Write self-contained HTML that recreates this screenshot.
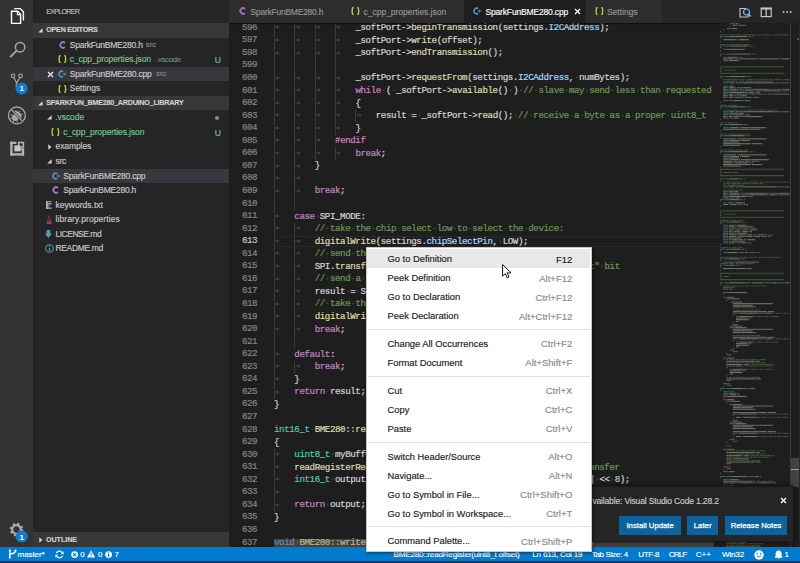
<!DOCTYPE html><html><head><meta charset="utf-8"><style>
*{margin:0;padding:0;box-sizing:border-box}
html,body{width:800px;height:563px;overflow:hidden;background:#1e1e1e}
body{position:relative;font-family:"Liberation Sans",sans-serif}
.a{position:absolute}
.mono{font-family:"Liberation Mono",monospace;font-size:9.2px;letter-spacing:-0.433px;white-space:pre;-webkit-text-stroke:0.2px currentColor}
.mono span{-webkit-text-stroke:0.2px currentColor}
.ui{font-family:"Liberation Sans",sans-serif;white-space:pre;-webkit-text-stroke:0.15px currentColor}
.ui span{-webkit-text-stroke:0.15px currentColor}
</style></head><body><div class="a" style="left:0;top:0;width:33.1px;height:546.8px;background:#333333"></div><div class="a" style="left:33.1px;top:0;width:196.1px;height:546.8px;background:#252526"></div><svg class="a" style="left:0;top:0" width="33" height="170" viewBox="0 0 33 170">
<g fill="none" stroke="#ffffff" stroke-width="1.4">
<path d="M14.2 8.6 H20.3 L23.4 11.7 V20.6"/>
<path d="M11.5 11.3 H17.6 L20.6 14.3 V23.4 H11.5 Z"/>
<path d="M17.4 11.6 V14.6 H20.4" stroke-width="1.1"/>
</g>
<g fill="none" stroke="#a9a9a9" stroke-width="1.5">
<circle cx="20.1" cy="47.2" r="4.7"/>
<path d="M16.6 50.7 L10.2 57.1" stroke-width="1.8"/>
</g>
<g fill="none" stroke="#a9a9a9" stroke-width="1.1">
<circle cx="13.1" cy="75.8" r="1.8"/>
<circle cx="20.6" cy="75.8" r="1.8"/>
<path d="M13.8 77.5 L16.3 82 L16.3 89 M19.9 77.5 L16.3 84"/>
</g>
<circle cx="21.7" cy="88.5" r="5.9" fill="#0e7ad3"/>
<text x="21.7" y="91.4" font-family="Liberation Sans" font-weight="bold" font-size="8" fill="#fff" text-anchor="middle">1</text>
<g fill="none" stroke="#a9a9a9" stroke-width="1.3">
<circle cx="16.9" cy="115.4" r="8.4"/>
</g>
<g fill="#a9a9a9">
<path d="M13 111.8 Q17 109.8 20.3 113.2 Q22.6 116.6 21 120 Z"/>
<ellipse cx="15.3" cy="117.4" rx="3.3" ry="3.5"/>
</g>
<g fill="none" stroke="#a9a9a9" stroke-width="0.9">
<path d="M12.6 115.5 L10.6 114.8 M12.4 118 L10.3 118.6 M14 120.3 L13.2 122.2 M17 120.6 L17.4 122.6 M16.3 112.2 L15.5 110.2 M19 112.6 L20 110.8 M21.2 114.8 L23 114.2"/>
</g>
<path d="M11.3 109.5 L22.5 121.3" stroke="#333333" stroke-width="2.4"/>
<path d="M11.3 109.5 L22.5 121.3" stroke="#a9a9a9" stroke-width="1.2"/>
<g fill="#b0b0b0">
<rect x="10.2" y="141.7" width="2.4" height="13.9"/>
<rect x="10.2" y="153.2" width="13.9" height="2.4"/>
<rect x="10.2" y="141.7" width="6.2" height="2.3"/>
<rect x="21.7" y="148.4" width="2.4" height="7.2"/>
<rect x="17.4" y="148.4" width="6.7" height="1.8"/>
</g>
<rect x="18.7" y="142.5" width="4.7" height="4.5" fill="none" stroke="#b0b0b0" stroke-width="1.6"/>
<rect x="14.4" y="145.4" width="6" height="6" fill="#c8c8c8"/>
</svg><svg class="a" style="left:0;top:518" width="33" height="29" viewBox="0 0 33 29">
<g transform="translate(16.5 11.5)">
<circle r="5.6" fill="none" stroke="#a9a9a9" stroke-width="2.4" stroke-dasharray="2.2 2.2"/>
<circle r="4.3" fill="none" stroke="#a9a9a9" stroke-width="2.2"/>
</g>
<circle cx="21.8" cy="18.6" r="6" fill="#0e7ad3"/>
<text x="21.8" y="21.5" font-family="Liberation Sans" font-weight="bold" font-size="8" fill="#fff" text-anchor="middle">1</text>
</svg><div class="a ui" style="left:46.2px;top:4.60px;height:14px;line-height:14px;font-size:7.2px;color:#bbbbbb;letter-spacing:-0.777px;">EXPLORER</div><div class="a" style="left:33.1px;top:23.1px;width:196.1px;height:14.54px;background:#383838"></div><svg class="a" style="left:38.2px;top:28.17px" width="5" height="5" viewBox="0 0 5 5"><path d="M4.6 0.2 V4.6 H0.2 Z" fill="#d8d8d8"/></svg><div class="a ui" style="left:46.2px;top:23.17px;height:14px;line-height:14px;font-size:7.2px;font-weight:bold;color:#d0d0d0;letter-spacing:-0.240px;">OPEN EDITORS</div><div class="a" style="left:33.1px;top:66.72px;width:196.1px;height:14.54px;background:#37373d"></div><svg class="a" style="left:59.00px;top:40.91px" width="7" height="8" viewBox="0 0 7 8"><path d="M5.9 1.9 A2.75 2.75 0 1 0 5.9 6.1" fill="none" stroke="#a074c4" stroke-width="1.9"/></svg><div class="a ui" style="left:69.8px;top:37.71px;height:14px;line-height:14px;font-size:8.5px;color:#cccccc;letter-spacing:-0.228px;">SparkFunBME280.h</div><div class="a ui" style="left:145.8px;top:38.11px;height:14px;line-height:14px;font-size:7.6px;color:#8f8f8f;letter-spacing:0.123px;">src</div><svg class="a" style="left:57.60px;top:55.45px" width="9" height="8" viewBox="0 0 9 8"><g fill="none" stroke="#cbcb41" stroke-width="1.3"><path d="M2.6 0.5 Q1.3 0.5 1.3 1.8 V3 Q1.3 4 0.4 4 Q1.3 4 1.3 5 V6.2 Q1.3 7.5 2.6 7.5"/><path d="M6.2 0.5 Q7.5 0.5 7.5 1.8 V3 Q7.5 4 8.4 4 Q7.5 4 7.5 5 V6.2 Q7.5 7.5 6.2 7.5"/></g></svg><div class="a ui" style="left:69.8px;top:52.25px;height:14px;line-height:14px;font-size:8.5px;color:#73c991;letter-spacing:-0.098px;">c_cpp_properties.json</div><div class="a ui" style="left:156.0px;top:52.65px;height:14px;line-height:14px;font-size:7.6px;color:#5e9a77;letter-spacing:-0.213px;">.vscode</div><div class="a ui" style="left:214.8px;top:53.15px;height:14px;line-height:14px;font-size:8.6px;color:#73c991;">U</div><svg class="a" style="left:47px;top:70.79px" width="7" height="7" viewBox="0 0 7 7"><path d="M1 1 L6 6 M6 1 L1 6" stroke="#e8e8e8" stroke-width="1.3"/></svg><svg class="a" style="left:58.2px;top:69.99px" width="9" height="8" viewBox="0 0 9 8"><path d="M5.2 1.6 A2.8 2.8 0 1 0 5.2 6.4" fill="none" stroke="#519aba" stroke-width="1.5"/><path d="M4.6 4 H8.6 M6.6 2.6 V5.4" stroke="#519aba" stroke-width="0.9"/></svg><div class="a ui" style="left:69.8px;top:66.79px;height:14px;line-height:14px;font-size:8.5px;color:#cccccc;letter-spacing:-0.212px;">SparkFunBME280.cpp</div><div class="a ui" style="left:156.0px;top:67.19px;height:14px;line-height:14px;font-size:7.6px;color:#8f8f8f;letter-spacing:0.123px;">src</div><svg class="a" style="left:57.60px;top:84.53px" width="9" height="8" viewBox="0 0 9 8"><g fill="none" stroke="#cbcb41" stroke-width="1.3"><path d="M2.6 0.5 Q1.3 0.5 1.3 1.8 V3 Q1.3 4 0.4 4 Q1.3 4 1.3 5 V6.2 Q1.3 7.5 2.6 7.5"/><path d="M6.2 0.5 Q7.5 0.5 7.5 1.8 V3 Q7.5 4 8.4 4 Q7.5 4 7.5 5 V6.2 Q7.5 7.5 6.2 7.5"/></g></svg><div class="a ui" style="left:69.8px;top:81.33px;height:14px;line-height:14px;font-size:8.5px;color:#cccccc;letter-spacing:-0.052px;">Settings</div><div class="a" style="left:33.1px;top:95.80px;width:196.1px;height:14.54px;background:#383838"></div><svg class="a" style="left:38.2px;top:100.87px" width="5" height="5" viewBox="0 0 5 5"><path d="M4.6 0.2 V4.6 H0.2 Z" fill="#d8d8d8"/></svg><div class="a ui" style="left:46.2px;top:95.87px;height:14px;line-height:14px;font-size:7.2px;font-weight:bold;color:#d0d0d0;letter-spacing:-0.236px;">SPARKFUN_BME280_ARDUINO_LIBRARY</div><div class="a" style="left:33.1px;top:168.50px;width:196.1px;height:14.54px;background:#37373d"></div><svg class="a" style="left:46.8px;top:115.41px" width="5" height="5" viewBox="0 0 5 5"><path d="M4.6 0.2 V4.6 H0.2 Z" fill="#d8d8d8"/></svg><div class="a ui" style="left:55.2px;top:110.41px;height:14px;line-height:14px;font-size:8.5px;color:#73c991;letter-spacing:-0.056px;">.vscode</div><div class="a" style="left:214.8px;top:115.61px;width:4px;height:4px;border-radius:50%;background:#73c991;opacity:0.75"></div><svg class="a" style="left:51.00px;top:128.15px" width="9" height="8" viewBox="0 0 9 8"><g fill="none" stroke="#cbcb41" stroke-width="1.3"><path d="M2.6 0.5 Q1.3 0.5 1.3 1.8 V3 Q1.3 4 0.4 4 Q1.3 4 1.3 5 V6.2 Q1.3 7.5 2.6 7.5"/><path d="M6.2 0.5 Q7.5 0.5 7.5 1.8 V3 Q7.5 4 8.4 4 Q7.5 4 7.5 5 V6.2 Q7.5 7.5 6.2 7.5"/></g></svg><div class="a ui" style="left:63.2px;top:124.95px;height:14px;line-height:14px;font-size:8.5px;color:#73c991;letter-spacing:-0.098px;">c_cpp_properties.json</div><div class="a ui" style="left:214.8px;top:125.85px;height:14px;line-height:14px;font-size:8.6px;color:#73c991;">U</div><svg class="a" style="left:47.6px;top:144.09px" width="4" height="6" viewBox="0 0 4 6"><path d="M0.3 0.2 L3.4 3 L0.3 5.8 Z" fill="#d8d8d8"/></svg><div class="a ui" style="left:55.5px;top:139.49px;height:14px;line-height:14px;font-size:8.5px;color:#cccccc;letter-spacing:-0.085px;">examples</div><svg class="a" style="left:46.8px;top:159.03px" width="5" height="5" viewBox="0 0 5 5"><path d="M4.6 0.2 V4.6 H0.2 Z" fill="#d8d8d8"/></svg><div class="a ui" style="left:55.5px;top:154.03px;height:14px;line-height:14px;font-size:8.5px;color:#cccccc;letter-spacing:-0.244px;">src</div><svg class="a" style="left:51.6px;top:171.76999999999998px" width="9" height="8" viewBox="0 0 9 8"><path d="M5.2 1.6 A2.8 2.8 0 1 0 5.2 6.4" fill="none" stroke="#519aba" stroke-width="1.5"/><path d="M4.6 4 H8.6 M6.6 2.6 V5.4" stroke="#519aba" stroke-width="0.9"/></svg><div class="a ui" style="left:63.3px;top:168.57px;height:14px;line-height:14px;font-size:8.5px;color:#cccccc;letter-spacing:-0.196px;">SparkFunBME280.cpp</div><svg class="a" style="left:52.20px;top:186.31px" width="7" height="8" viewBox="0 0 7 8"><path d="M5.9 1.9 A2.75 2.75 0 1 0 5.9 6.1" fill="none" stroke="#a074c4" stroke-width="1.9"/></svg><div class="a ui" style="left:63.3px;top:183.11px;height:14px;line-height:14px;font-size:8.5px;color:#cccccc;letter-spacing:-0.240px;">SparkFunBME280.h</div><svg class="a" style="left:45.5px;top:200.85px" width="7" height="8" viewBox="0 0 7 8"><path d="M0.5 0.8 H5.5 M0.5 2.9 H5.5 M0.5 5 H3.5 M0.5 7.1 H5.5" stroke="#b8b8b8" stroke-width="1.1"/><rect x="0" y="0" width="1.6" height="8" fill="#b8b8b8"/></svg><div class="a ui" style="left:55.5px;top:197.65px;height:14px;line-height:14px;font-size:8.5px;color:#cccccc;letter-spacing:0.014px;">keywords.txt</div><svg class="a" style="left:45.5px;top:214.89px" width="7" height="9" viewBox="0 0 7 9"><path d="M3 0.5 Q1.8 2 3.4 3.2 Q4.6 4.2 3.3 5" fill="none" stroke="#cc3e44" stroke-width="0.9"/><path d="M0.6 6 H5.8 M1 7.5 H5.5 M0.8 8.6 H5.8" stroke="#cc3e44" stroke-width="0.9"/></svg><div class="a ui" style="left:55.5px;top:212.19px;height:14px;line-height:14px;font-size:8.5px;color:#cccccc;letter-spacing:0.096px;">library.properties</div><svg class="a" style="left:45.3px;top:229.93px" width="7" height="8" viewBox="0 0 7 8"><path d="M1.6 0 H5.2 V3.6 H7 L3.4 8 L-0.2 3.6 H1.6 Z" fill="#519aba"/></svg><div class="a ui" style="left:55.5px;top:226.73px;height:14px;line-height:14px;font-size:8.5px;color:#cccccc;letter-spacing:-0.485px;">LICENSE.md</div><svg class="a" style="left:44.8px;top:243.97px" width="9" height="9" viewBox="0 0 9 9"><circle cx="4.5" cy="4.5" r="3.8" fill="none" stroke="#519aba" stroke-width="1.1"/><path d="M4.5 3.8 V7" stroke="#519aba" stroke-width="1.3"/><circle cx="4.5" cy="2.4" r="0.7" fill="#519aba"/></svg><div class="a ui" style="left:55.5px;top:241.27px;height:14px;line-height:14px;font-size:8.5px;color:#cccccc;letter-spacing:-0.349px;">README.md</div><div class="a" style="left:33.1px;top:532.3px;width:196.1px;height:14.54px;background:#383838"></div><svg class="a" style="left:38.8px;top:536.97px" width="4" height="6" viewBox="0 0 4 6"><path d="M0.3 0.2 L3.4 3 L0.3 5.8 Z" fill="#d8d8d8"/></svg><div class="a ui" style="left:46.0px;top:533.27px;height:14px;line-height:14px;font-size:7.2px;font-weight:bold;color:#d0d0d0;letter-spacing:-0.086px;">OUTLINE</div><div class="a" style="left:229.2px;top:0;width:570.8px;height:23.1px;background:#252526"></div><div class="a" style="left:229.2px;top:0;width:112.50px;height:22.5px;background:#2d2d2d"></div><svg class="a" style="left:239.20px;top:7.40px" width="7" height="8" viewBox="0 0 7 8"><path d="M5.9 1.9 A2.75 2.75 0 1 0 5.9 6.1" fill="none" stroke="#a074c4" stroke-width="1.9"/></svg><div class="a ui" style="left:250.5px;top:5.00px;height:14px;line-height:14px;font-size:8.5px;color:#969696;letter-spacing:-0.240px;">SparkFunBME280.h</div><div class="a" style="left:342.3px;top:0;width:121.30px;height:22.5px;background:#2d2d2d"></div><svg class="a" style="left:351.30px;top:7.40px" width="9" height="8" viewBox="0 0 9 8"><g fill="none" stroke="#cbcb41" stroke-width="1.3"><path d="M2.6 0.5 Q1.3 0.5 1.3 1.8 V3 Q1.3 4 0.4 4 Q1.3 4 1.3 5 V6.2 Q1.3 7.5 2.6 7.5"/><path d="M6.2 0.5 Q7.5 0.5 7.5 1.8 V3 Q7.5 4 8.4 4 Q7.5 4 7.5 5 V6.2 Q7.5 7.5 6.2 7.5"/></g></svg><div class="a ui" style="left:363.6px;top:5.00px;height:14px;line-height:14px;font-size:8.5px;color:#969696;letter-spacing:-0.032px;">c_cpp_properties.json</div><div class="a" style="left:464.2px;top:0;width:120.80px;height:23.1px;background:#1e1e1e"></div><svg class="a" style="left:472.8px;top:7.4px" width="9" height="8" viewBox="0 0 9 8"><path d="M5.2 1.6 A2.8 2.8 0 1 0 5.2 6.4" fill="none" stroke="#519aba" stroke-width="1.5"/><path d="M4.6 4 H8.6 M6.6 2.6 V5.4" stroke="#519aba" stroke-width="0.9"/></svg><div class="a ui" style="left:485.5px;top:5.00px;height:14px;line-height:14px;font-size:8.5px;color:#ffffff;letter-spacing:-0.168px;">SparkFunBME280.cpp</div><svg class="a" style="left:573.70px;top:8.40px" width="7" height="7" viewBox="0 0 7 7"><path d="M1 1 L6 6 M6 1 L1 6" stroke="#ffffff" stroke-width="1.2"/></svg><div class="a" style="left:585.6px;top:0;width:76.60px;height:22.5px;background:#2d2d2d"></div><svg class="a" style="left:594.60px;top:7.40px" width="9" height="8" viewBox="0 0 9 8"><g fill="none" stroke="#cbcb41" stroke-width="1.3"><path d="M2.6 0.5 Q1.3 0.5 1.3 1.8 V3 Q1.3 4 0.4 4 Q1.3 4 1.3 5 V6.2 Q1.3 7.5 2.6 7.5"/><path d="M6.2 0.5 Q7.5 0.5 7.5 1.8 V3 Q7.5 4 8.4 4 Q7.5 4 7.5 5 V6.2 Q7.5 7.5 6.2 7.5"/></g></svg><div class="a ui" style="left:606.9px;top:5.00px;height:14px;line-height:14px;font-size:8.5px;color:#969696;letter-spacing:0.036px;">Settings</div><svg class="a" style="left:735px;top:3" width="62" height="18" viewBox="0 0 62 18">
<g fill="none" stroke="#c5c5c5" stroke-width="1.1">
<path d="M5 5.5 H10.5 L13 8 V14 H5 Z" />
</g>
<circle cx="11.5" cy="9" r="3" fill="#252526" stroke="#75beff" stroke-width="1.2"/>
<path d="M13.6 11.2 L15.8 13.5" stroke="#75beff" stroke-width="1.5"/>
<g fill="none" stroke="#c5c5c5" stroke-width="1.2">
<rect x="26.2" y="5" width="10" height="8.6"/>
<path d="M31.2 5 V13.6"/>
</g>
<path d="M26.2 5 H36.2 V6.6 H26.2Z" fill="#c5c5c5"/>
<g fill="#c5c5c5"><circle cx="48.6" cy="9" r="0.95"/><circle cx="52.2" cy="9" r="0.95"/><circle cx="55.8" cy="9" r="0.95"/></g>
</svg><div class="a" style="left:229.2px;top:23.1px;width:570.8px;height:523.7px;overflow:hidden;background:#1e1e1e"><div class="a mono" style="left:0;top:-1.30px;width:28.00px;height:12.556px;line-height:12.556px;text-align:right;color:#858585">596</div><svg class="a" style="left:45.10px;top:2.38px" width="6" height="4" viewBox="0 0 6 4"><path d="M0.3 2 H4.6 M3 0.6 L4.8 2 L3 3.4" fill="none" stroke="#555555" stroke-width="0.75"/></svg><svg class="a" style="left:65.45px;top:2.38px" width="6" height="4" viewBox="0 0 6 4"><path d="M0.3 2 H4.6 M3 0.6 L4.8 2 L3 3.4" fill="none" stroke="#555555" stroke-width="0.75"/></svg><svg class="a" style="left:85.80px;top:2.38px" width="6" height="4" viewBox="0 0 6 4"><path d="M0.3 2 H4.6 M3 0.6 L4.8 2 L3 3.4" fill="none" stroke="#555555" stroke-width="0.75"/></svg><svg class="a" style="left:106.16px;top:2.38px" width="6" height="4" viewBox="0 0 6 4"><path d="M0.3 2 H4.6 M3 0.6 L4.8 2 L3 3.4" fill="none" stroke="#555555" stroke-width="0.75"/></svg><div class="a mono" style="left:126.21px;top:-0.90px;line-height:12.556px"><span style="color:#d4d4d4">_softPort-&gt;</span><span style="color:#dcdcaa">beginTransmission</span><span style="color:#d4d4d4">(settings.</span><span style="color:#9cdcfe">I2CAddress</span><span style="color:#d4d4d4">);</span></div><div class="a mono" style="left:0;top:11.26px;width:28.00px;height:12.556px;line-height:12.556px;text-align:right;color:#858585">597</div><svg class="a" style="left:45.10px;top:14.93px" width="6" height="4" viewBox="0 0 6 4"><path d="M0.3 2 H4.6 M3 0.6 L4.8 2 L3 3.4" fill="none" stroke="#555555" stroke-width="0.75"/></svg><svg class="a" style="left:65.45px;top:14.93px" width="6" height="4" viewBox="0 0 6 4"><path d="M0.3 2 H4.6 M3 0.6 L4.8 2 L3 3.4" fill="none" stroke="#555555" stroke-width="0.75"/></svg><svg class="a" style="left:85.80px;top:14.93px" width="6" height="4" viewBox="0 0 6 4"><path d="M0.3 2 H4.6 M3 0.6 L4.8 2 L3 3.4" fill="none" stroke="#555555" stroke-width="0.75"/></svg><svg class="a" style="left:106.16px;top:14.93px" width="6" height="4" viewBox="0 0 6 4"><path d="M0.3 2 H4.6 M3 0.6 L4.8 2 L3 3.4" fill="none" stroke="#555555" stroke-width="0.75"/></svg><div class="a mono" style="left:126.21px;top:11.66px;line-height:12.556px"><span style="color:#d4d4d4">_softPort-&gt;</span><span style="color:#dcdcaa">write</span><span style="color:#d4d4d4">(offset);</span></div><div class="a mono" style="left:0;top:23.81px;width:28.00px;height:12.556px;line-height:12.556px;text-align:right;color:#858585">598</div><svg class="a" style="left:45.10px;top:27.49px" width="6" height="4" viewBox="0 0 6 4"><path d="M0.3 2 H4.6 M3 0.6 L4.8 2 L3 3.4" fill="none" stroke="#555555" stroke-width="0.75"/></svg><svg class="a" style="left:65.45px;top:27.49px" width="6" height="4" viewBox="0 0 6 4"><path d="M0.3 2 H4.6 M3 0.6 L4.8 2 L3 3.4" fill="none" stroke="#555555" stroke-width="0.75"/></svg><svg class="a" style="left:85.80px;top:27.49px" width="6" height="4" viewBox="0 0 6 4"><path d="M0.3 2 H4.6 M3 0.6 L4.8 2 L3 3.4" fill="none" stroke="#555555" stroke-width="0.75"/></svg><svg class="a" style="left:106.16px;top:27.49px" width="6" height="4" viewBox="0 0 6 4"><path d="M0.3 2 H4.6 M3 0.6 L4.8 2 L3 3.4" fill="none" stroke="#555555" stroke-width="0.75"/></svg><div class="a mono" style="left:126.21px;top:24.21px;line-height:12.556px"><span style="color:#d4d4d4">_softPort-&gt;</span><span style="color:#dcdcaa">endTransmission</span><span style="color:#d4d4d4">();</span></div><div class="a mono" style="left:0;top:36.37px;width:28.00px;height:12.556px;line-height:12.556px;text-align:right;color:#858585">599</div><div class="a mono" style="left:0;top:48.92px;width:28.00px;height:12.556px;line-height:12.556px;text-align:right;color:#858585">600</div><svg class="a" style="left:45.10px;top:52.60px" width="6" height="4" viewBox="0 0 6 4"><path d="M0.3 2 H4.6 M3 0.6 L4.8 2 L3 3.4" fill="none" stroke="#555555" stroke-width="0.75"/></svg><svg class="a" style="left:65.45px;top:52.60px" width="6" height="4" viewBox="0 0 6 4"><path d="M0.3 2 H4.6 M3 0.6 L4.8 2 L3 3.4" fill="none" stroke="#555555" stroke-width="0.75"/></svg><svg class="a" style="left:85.80px;top:52.60px" width="6" height="4" viewBox="0 0 6 4"><path d="M0.3 2 H4.6 M3 0.6 L4.8 2 L3 3.4" fill="none" stroke="#555555" stroke-width="0.75"/></svg><svg class="a" style="left:106.16px;top:52.60px" width="6" height="4" viewBox="0 0 6 4"><path d="M0.3 2 H4.6 M3 0.6 L4.8 2 L3 3.4" fill="none" stroke="#555555" stroke-width="0.75"/></svg><div class="a mono" style="left:126.21px;top:49.32px;line-height:12.556px"><span style="color:#d4d4d4">_softPort-&gt;</span><span style="color:#dcdcaa">requestFrom</span><span style="color:#d4d4d4">(settings.</span><span style="color:#9cdcfe">I2CAddress</span><span style="color:#d4d4d4">,</span><span style="color:#505050">·</span><span style="color:#d4d4d4">numBytes);</span></div><div class="a mono" style="left:0;top:61.48px;width:28.00px;height:12.556px;line-height:12.556px;text-align:right;color:#858585">601</div><svg class="a" style="left:45.10px;top:65.16px" width="6" height="4" viewBox="0 0 6 4"><path d="M0.3 2 H4.6 M3 0.6 L4.8 2 L3 3.4" fill="none" stroke="#555555" stroke-width="0.75"/></svg><svg class="a" style="left:65.45px;top:65.16px" width="6" height="4" viewBox="0 0 6 4"><path d="M0.3 2 H4.6 M3 0.6 L4.8 2 L3 3.4" fill="none" stroke="#555555" stroke-width="0.75"/></svg><svg class="a" style="left:85.80px;top:65.16px" width="6" height="4" viewBox="0 0 6 4"><path d="M0.3 2 H4.6 M3 0.6 L4.8 2 L3 3.4" fill="none" stroke="#555555" stroke-width="0.75"/></svg><svg class="a" style="left:106.16px;top:65.16px" width="6" height="4" viewBox="0 0 6 4"><path d="M0.3 2 H4.6 M3 0.6 L4.8 2 L3 3.4" fill="none" stroke="#555555" stroke-width="0.75"/></svg><div class="a mono" style="left:126.21px;top:61.88px;line-height:12.556px"><span style="color:#c586c0">while</span><span style="color:#505050">·</span><span style="color:#d4d4d4">(</span><span style="color:#505050">·</span><span style="color:#d4d4d4">_softPort-&gt;</span><span style="color:#dcdcaa">available</span><span style="color:#d4d4d4">()</span><span style="color:#505050">·</span><span style="color:#d4d4d4">)</span><span style="color:#505050">·</span><span style="color:#6a9955">//</span><span style="color:#505050">·</span><span style="color:#6a9955">slave</span><span style="color:#505050">·</span><span style="color:#6a9955">may</span><span style="color:#505050">·</span><span style="color:#6a9955">send</span><span style="color:#505050">·</span><span style="color:#6a9955">less</span><span style="color:#505050">·</span><span style="color:#6a9955">than</span><span style="color:#505050">·</span><span style="color:#6a9955">requested</span></div><div class="a mono" style="left:0;top:74.04px;width:28.00px;height:12.556px;line-height:12.556px;text-align:right;color:#858585">602</div><svg class="a" style="left:45.10px;top:77.71px" width="6" height="4" viewBox="0 0 6 4"><path d="M0.3 2 H4.6 M3 0.6 L4.8 2 L3 3.4" fill="none" stroke="#555555" stroke-width="0.75"/></svg><svg class="a" style="left:65.45px;top:77.71px" width="6" height="4" viewBox="0 0 6 4"><path d="M0.3 2 H4.6 M3 0.6 L4.8 2 L3 3.4" fill="none" stroke="#555555" stroke-width="0.75"/></svg><svg class="a" style="left:85.80px;top:77.71px" width="6" height="4" viewBox="0 0 6 4"><path d="M0.3 2 H4.6 M3 0.6 L4.8 2 L3 3.4" fill="none" stroke="#555555" stroke-width="0.75"/></svg><svg class="a" style="left:106.16px;top:77.71px" width="6" height="4" viewBox="0 0 6 4"><path d="M0.3 2 H4.6 M3 0.6 L4.8 2 L3 3.4" fill="none" stroke="#555555" stroke-width="0.75"/></svg><div class="a mono" style="left:126.21px;top:74.44px;line-height:12.556px"><span style="color:#d4d4d4">{</span></div><div class="a mono" style="left:0;top:86.59px;width:28.00px;height:12.556px;line-height:12.556px;text-align:right;color:#858585">603</div><svg class="a" style="left:45.10px;top:90.27px" width="6" height="4" viewBox="0 0 6 4"><path d="M0.3 2 H4.6 M3 0.6 L4.8 2 L3 3.4" fill="none" stroke="#555555" stroke-width="0.75"/></svg><svg class="a" style="left:65.45px;top:90.27px" width="6" height="4" viewBox="0 0 6 4"><path d="M0.3 2 H4.6 M3 0.6 L4.8 2 L3 3.4" fill="none" stroke="#555555" stroke-width="0.75"/></svg><svg class="a" style="left:85.80px;top:90.27px" width="6" height="4" viewBox="0 0 6 4"><path d="M0.3 2 H4.6 M3 0.6 L4.8 2 L3 3.4" fill="none" stroke="#555555" stroke-width="0.75"/></svg><svg class="a" style="left:106.16px;top:90.27px" width="6" height="4" viewBox="0 0 6 4"><path d="M0.3 2 H4.6 M3 0.6 L4.8 2 L3 3.4" fill="none" stroke="#555555" stroke-width="0.75"/></svg><svg class="a" style="left:126.51px;top:90.27px" width="6" height="4" viewBox="0 0 6 4"><path d="M0.3 2 H4.6 M3 0.6 L4.8 2 L3 3.4" fill="none" stroke="#555555" stroke-width="0.75"/></svg><div class="a mono" style="left:146.56px;top:86.99px;line-height:12.556px"><span style="color:#d4d4d4">result</span><span style="color:#505050">·</span><span style="color:#d4d4d4">=</span><span style="color:#505050">·</span><span style="color:#d4d4d4">_softPort-&gt;</span><span style="color:#dcdcaa">read</span><span style="color:#d4d4d4">();</span><span style="color:#505050">·</span><span style="color:#6a9955">//</span><span style="color:#505050">·</span><span style="color:#6a9955">receive</span><span style="color:#505050">·</span><span style="color:#6a9955">a</span><span style="color:#505050">·</span><span style="color:#6a9955">byte</span><span style="color:#505050">·</span><span style="color:#6a9955">as</span><span style="color:#505050">·</span><span style="color:#6a9955">a</span><span style="color:#505050">·</span><span style="color:#6a9955">proper</span><span style="color:#505050">·</span><span style="color:#6a9955">uint8_t</span></div><div class="a mono" style="left:0;top:99.15px;width:28.00px;height:12.556px;line-height:12.556px;text-align:right;color:#858585">604</div><svg class="a" style="left:45.10px;top:102.83px" width="6" height="4" viewBox="0 0 6 4"><path d="M0.3 2 H4.6 M3 0.6 L4.8 2 L3 3.4" fill="none" stroke="#555555" stroke-width="0.75"/></svg><svg class="a" style="left:65.45px;top:102.83px" width="6" height="4" viewBox="0 0 6 4"><path d="M0.3 2 H4.6 M3 0.6 L4.8 2 L3 3.4" fill="none" stroke="#555555" stroke-width="0.75"/></svg><svg class="a" style="left:85.80px;top:102.83px" width="6" height="4" viewBox="0 0 6 4"><path d="M0.3 2 H4.6 M3 0.6 L4.8 2 L3 3.4" fill="none" stroke="#555555" stroke-width="0.75"/></svg><svg class="a" style="left:106.16px;top:102.83px" width="6" height="4" viewBox="0 0 6 4"><path d="M0.3 2 H4.6 M3 0.6 L4.8 2 L3 3.4" fill="none" stroke="#555555" stroke-width="0.75"/></svg><div class="a mono" style="left:126.21px;top:99.55px;line-height:12.556px"><span style="color:#d4d4d4">}</span></div><div class="a mono" style="left:0;top:111.70px;width:28.00px;height:12.556px;line-height:12.556px;text-align:right;color:#858585">605</div><svg class="a" style="left:45.10px;top:115.38px" width="6" height="4" viewBox="0 0 6 4"><path d="M0.3 2 H4.6 M3 0.6 L4.8 2 L3 3.4" fill="none" stroke="#555555" stroke-width="0.75"/></svg><svg class="a" style="left:65.45px;top:115.38px" width="6" height="4" viewBox="0 0 6 4"><path d="M0.3 2 H4.6 M3 0.6 L4.8 2 L3 3.4" fill="none" stroke="#555555" stroke-width="0.75"/></svg><svg class="a" style="left:85.80px;top:115.38px" width="6" height="4" viewBox="0 0 6 4"><path d="M0.3 2 H4.6 M3 0.6 L4.8 2 L3 3.4" fill="none" stroke="#555555" stroke-width="0.75"/></svg><div class="a mono" style="left:105.86px;top:112.10px;line-height:12.556px"><span style="color:#c586c0">#endif</span></div><div class="a mono" style="left:0;top:124.26px;width:28.00px;height:12.556px;line-height:12.556px;text-align:right;color:#858585">606</div><svg class="a" style="left:45.10px;top:127.94px" width="6" height="4" viewBox="0 0 6 4"><path d="M0.3 2 H4.6 M3 0.6 L4.8 2 L3 3.4" fill="none" stroke="#555555" stroke-width="0.75"/></svg><svg class="a" style="left:65.45px;top:127.94px" width="6" height="4" viewBox="0 0 6 4"><path d="M0.3 2 H4.6 M3 0.6 L4.8 2 L3 3.4" fill="none" stroke="#555555" stroke-width="0.75"/></svg><svg class="a" style="left:85.80px;top:127.94px" width="6" height="4" viewBox="0 0 6 4"><path d="M0.3 2 H4.6 M3 0.6 L4.8 2 L3 3.4" fill="none" stroke="#555555" stroke-width="0.75"/></svg><svg class="a" style="left:106.16px;top:127.94px" width="6" height="4" viewBox="0 0 6 4"><path d="M0.3 2 H4.6 M3 0.6 L4.8 2 L3 3.4" fill="none" stroke="#555555" stroke-width="0.75"/></svg><div class="a mono" style="left:126.21px;top:124.66px;line-height:12.556px"><span style="color:#c586c0">break</span><span style="color:#d4d4d4">;</span></div><div class="a mono" style="left:0;top:136.82px;width:28.00px;height:12.556px;line-height:12.556px;text-align:right;color:#858585">607</div><svg class="a" style="left:45.10px;top:140.49px" width="6" height="4" viewBox="0 0 6 4"><path d="M0.3 2 H4.6 M3 0.6 L4.8 2 L3 3.4" fill="none" stroke="#555555" stroke-width="0.75"/></svg><svg class="a" style="left:65.45px;top:140.49px" width="6" height="4" viewBox="0 0 6 4"><path d="M0.3 2 H4.6 M3 0.6 L4.8 2 L3 3.4" fill="none" stroke="#555555" stroke-width="0.75"/></svg><div class="a mono" style="left:85.50px;top:137.22px;line-height:12.556px"><span style="color:#d4d4d4">}</span></div><div class="a mono" style="left:0;top:149.37px;width:28.00px;height:12.556px;line-height:12.556px;text-align:right;color:#858585">608</div><svg class="a" style="left:45.10px;top:153.05px" width="6" height="4" viewBox="0 0 6 4"><path d="M0.3 2 H4.6 M3 0.6 L4.8 2 L3 3.4" fill="none" stroke="#555555" stroke-width="0.75"/></svg><svg class="a" style="left:65.45px;top:153.05px" width="6" height="4" viewBox="0 0 6 4"><path d="M0.3 2 H4.6 M3 0.6 L4.8 2 L3 3.4" fill="none" stroke="#555555" stroke-width="0.75"/></svg><div class="a mono" style="left:0;top:161.93px;width:28.00px;height:12.556px;line-height:12.556px;text-align:right;color:#858585">609</div><svg class="a" style="left:45.10px;top:165.61px" width="6" height="4" viewBox="0 0 6 4"><path d="M0.3 2 H4.6 M3 0.6 L4.8 2 L3 3.4" fill="none" stroke="#555555" stroke-width="0.75"/></svg><svg class="a" style="left:65.45px;top:165.61px" width="6" height="4" viewBox="0 0 6 4"><path d="M0.3 2 H4.6 M3 0.6 L4.8 2 L3 3.4" fill="none" stroke="#555555" stroke-width="0.75"/></svg><div class="a mono" style="left:85.50px;top:162.33px;line-height:12.556px"><span style="color:#c586c0">break</span><span style="color:#d4d4d4">;</span></div><div class="a mono" style="left:0;top:174.48px;width:28.00px;height:12.556px;line-height:12.556px;text-align:right;color:#858585">610</div><div class="a mono" style="left:0;top:187.04px;width:28.00px;height:12.556px;line-height:12.556px;text-align:right;color:#858585">611</div><svg class="a" style="left:45.10px;top:190.72px" width="6" height="4" viewBox="0 0 6 4"><path d="M0.3 2 H4.6 M3 0.6 L4.8 2 L3 3.4" fill="none" stroke="#555555" stroke-width="0.75"/></svg><div class="a mono" style="left:65.15px;top:187.44px;line-height:12.556px"><span style="color:#c586c0">case</span><span style="color:#505050">·</span><span style="color:#d4d4d4">SPI_MODE:</span></div><div class="a mono" style="left:0;top:199.60px;width:28.00px;height:12.556px;line-height:12.556px;text-align:right;color:#858585">612</div><svg class="a" style="left:45.10px;top:203.27px" width="6" height="4" viewBox="0 0 6 4"><path d="M0.3 2 H4.6 M3 0.6 L4.8 2 L3 3.4" fill="none" stroke="#555555" stroke-width="0.75"/></svg><svg class="a" style="left:65.45px;top:203.27px" width="6" height="4" viewBox="0 0 6 4"><path d="M0.3 2 H4.6 M3 0.6 L4.8 2 L3 3.4" fill="none" stroke="#555555" stroke-width="0.75"/></svg><div class="a mono" style="left:85.50px;top:200.00px;line-height:12.556px"><span style="color:#6a9955">//</span><span style="color:#505050">·</span><span style="color:#6a9955">take</span><span style="color:#505050">·</span><span style="color:#6a9955">the</span><span style="color:#505050">·</span><span style="color:#6a9955">chip</span><span style="color:#505050">·</span><span style="color:#6a9955">select</span><span style="color:#505050">·</span><span style="color:#6a9955">low</span><span style="color:#505050">·</span><span style="color:#6a9955">to</span><span style="color:#505050">·</span><span style="color:#6a9955">select</span><span style="color:#505050">·</span><span style="color:#6a9955">the</span><span style="color:#505050">·</span><span style="color:#6a9955">device:</span></div><div class="a" style="left:44.80px;top:212.45px;width:446.00px;height:11.96px;border-top:1.3px solid #282828;border-bottom:1.3px solid #282828"></div><div class="a mono" style="left:0;top:212.15px;width:28.00px;height:12.556px;line-height:12.556px;text-align:right;color:#c6c6c6">613</div><svg class="a" style="left:45.10px;top:215.83px" width="6" height="4" viewBox="0 0 6 4"><path d="M0.3 2 H4.6 M3 0.6 L4.8 2 L3 3.4" fill="none" stroke="#555555" stroke-width="0.75"/></svg><svg class="a" style="left:65.45px;top:215.83px" width="6" height="4" viewBox="0 0 6 4"><path d="M0.3 2 H4.6 M3 0.6 L4.8 2 L3 3.4" fill="none" stroke="#555555" stroke-width="0.75"/></svg><div class="a mono" style="left:85.50px;top:212.55px;line-height:12.556px"><span style="color:#dcdcaa">digitalWrite</span><span style="color:#d4d4d4">(settings.</span><span style="color:#9cdcfe">chipSelectPin</span><span style="color:#d4d4d4">,</span><span style="color:#505050">·</span><span style="color:#d4d4d4">LOW);</span></div><div class="a mono" style="left:0;top:224.71px;width:28.00px;height:12.556px;line-height:12.556px;text-align:right;color:#858585">614</div><svg class="a" style="left:45.10px;top:228.39px" width="6" height="4" viewBox="0 0 6 4"><path d="M0.3 2 H4.6 M3 0.6 L4.8 2 L3 3.4" fill="none" stroke="#555555" stroke-width="0.75"/></svg><svg class="a" style="left:65.45px;top:228.39px" width="6" height="4" viewBox="0 0 6 4"><path d="M0.3 2 H4.6 M3 0.6 L4.8 2 L3 3.4" fill="none" stroke="#555555" stroke-width="0.75"/></svg><div class="a mono" style="left:85.50px;top:225.11px;line-height:12.556px"><span style="color:#6a9955">//</span><span style="color:#505050">·</span><span style="color:#6a9955">send</span><span style="color:#505050">·</span><span style="color:#6a9955">the</span><span style="color:#505050">·</span><span style="color:#6a9955">device</span><span style="color:#505050">·</span><span style="color:#6a9955">the</span><span style="color:#505050">·</span><span style="color:#6a9955">register</span><span style="color:#505050">·</span><span style="color:#6a9955">you</span><span style="color:#505050">·</span><span style="color:#6a9955">want</span><span style="color:#505050">·</span><span style="color:#6a9955">to</span><span style="color:#505050">·</span><span style="color:#6a9955">read:</span></div><div class="a mono" style="left:0;top:237.26px;width:28.00px;height:12.556px;line-height:12.556px;text-align:right;color:#858585">615</div><svg class="a" style="left:45.10px;top:240.94px" width="6" height="4" viewBox="0 0 6 4"><path d="M0.3 2 H4.6 M3 0.6 L4.8 2 L3 3.4" fill="none" stroke="#555555" stroke-width="0.75"/></svg><svg class="a" style="left:65.45px;top:240.94px" width="6" height="4" viewBox="0 0 6 4"><path d="M0.3 2 H4.6 M3 0.6 L4.8 2 L3 3.4" fill="none" stroke="#555555" stroke-width="0.75"/></svg><div class="a mono" style="left:85.50px;top:237.66px;line-height:12.556px"><span style="color:#d4d4d4">SPI.</span><span style="color:#dcdcaa">transfer</span><span style="color:#d4d4d4">(offset</span><span style="color:#505050">·</span><span style="color:#d4d4d4">|</span><span style="color:#505050">·</span><span style="color:#b5cea8">0x80</span><span style="color:#d4d4d4">);</span><span style="color:#505050">·</span><span style="color:#505050">·</span><span style="color:#6a9955">//Ored</span><span style="color:#505050">·</span><span style="color:#6a9955">with</span><span style="color:#505050">·</span><span style="color:#6a9955">&quot;read</span><span style="color:#505050">·</span><span style="color:#6a9955">request&quot;</span><span style="color:#505050">·</span><span style="color:#6a9955">bit</span></div><div class="a mono" style="left:0;top:249.82px;width:28.00px;height:12.556px;line-height:12.556px;text-align:right;color:#858585">616</div><svg class="a" style="left:45.10px;top:253.50px" width="6" height="4" viewBox="0 0 6 4"><path d="M0.3 2 H4.6 M3 0.6 L4.8 2 L3 3.4" fill="none" stroke="#555555" stroke-width="0.75"/></svg><svg class="a" style="left:65.45px;top:253.50px" width="6" height="4" viewBox="0 0 6 4"><path d="M0.3 2 H4.6 M3 0.6 L4.8 2 L3 3.4" fill="none" stroke="#555555" stroke-width="0.75"/></svg><div class="a mono" style="left:85.50px;top:250.22px;line-height:12.556px"><span style="color:#6a9955">//</span><span style="color:#505050">·</span><span style="color:#6a9955">send</span><span style="color:#505050">·</span><span style="color:#6a9955">a</span><span style="color:#505050">·</span><span style="color:#6a9955">value</span><span style="color:#505050">·</span><span style="color:#6a9955">of</span><span style="color:#505050">·</span><span style="color:#6a9955">0</span><span style="color:#505050">·</span><span style="color:#6a9955">to</span><span style="color:#505050">·</span><span style="color:#6a9955">read</span><span style="color:#505050">·</span><span style="color:#6a9955">the</span><span style="color:#505050">·</span><span style="color:#6a9955">first</span><span style="color:#505050">·</span><span style="color:#6a9955">byte</span><span style="color:#505050">·</span><span style="color:#6a9955">returned:</span></div><div class="a mono" style="left:0;top:262.38px;width:28.00px;height:12.556px;line-height:12.556px;text-align:right;color:#858585">617</div><svg class="a" style="left:45.10px;top:266.05px" width="6" height="4" viewBox="0 0 6 4"><path d="M0.3 2 H4.6 M3 0.6 L4.8 2 L3 3.4" fill="none" stroke="#555555" stroke-width="0.75"/></svg><svg class="a" style="left:65.45px;top:266.05px" width="6" height="4" viewBox="0 0 6 4"><path d="M0.3 2 H4.6 M3 0.6 L4.8 2 L3 3.4" fill="none" stroke="#555555" stroke-width="0.75"/></svg><div class="a mono" style="left:85.50px;top:262.78px;line-height:12.556px"><span style="color:#d4d4d4">result</span><span style="color:#505050">·</span><span style="color:#d4d4d4">=</span><span style="color:#505050">·</span><span style="color:#d4d4d4">SPI.</span><span style="color:#dcdcaa">transfer</span><span style="color:#d4d4d4">(</span><span style="color:#b5cea8">0x00</span><span style="color:#d4d4d4">);</span></div><div class="a mono" style="left:0;top:274.93px;width:28.00px;height:12.556px;line-height:12.556px;text-align:right;color:#858585">618</div><svg class="a" style="left:45.10px;top:278.61px" width="6" height="4" viewBox="0 0 6 4"><path d="M0.3 2 H4.6 M3 0.6 L4.8 2 L3 3.4" fill="none" stroke="#555555" stroke-width="0.75"/></svg><svg class="a" style="left:65.45px;top:278.61px" width="6" height="4" viewBox="0 0 6 4"><path d="M0.3 2 H4.6 M3 0.6 L4.8 2 L3 3.4" fill="none" stroke="#555555" stroke-width="0.75"/></svg><div class="a mono" style="left:85.50px;top:275.33px;line-height:12.556px"><span style="color:#6a9955">//</span><span style="color:#505050">·</span><span style="color:#6a9955">take</span><span style="color:#505050">·</span><span style="color:#6a9955">the</span><span style="color:#505050">·</span><span style="color:#6a9955">chip</span><span style="color:#505050">·</span><span style="color:#6a9955">select</span><span style="color:#505050">·</span><span style="color:#6a9955">high</span><span style="color:#505050">·</span><span style="color:#6a9955">to</span><span style="color:#505050">·</span><span style="color:#6a9955">de-select:</span></div><div class="a mono" style="left:0;top:287.49px;width:28.00px;height:12.556px;line-height:12.556px;text-align:right;color:#858585">619</div><svg class="a" style="left:45.10px;top:291.17px" width="6" height="4" viewBox="0 0 6 4"><path d="M0.3 2 H4.6 M3 0.6 L4.8 2 L3 3.4" fill="none" stroke="#555555" stroke-width="0.75"/></svg><svg class="a" style="left:65.45px;top:291.17px" width="6" height="4" viewBox="0 0 6 4"><path d="M0.3 2 H4.6 M3 0.6 L4.8 2 L3 3.4" fill="none" stroke="#555555" stroke-width="0.75"/></svg><div class="a mono" style="left:85.50px;top:287.89px;line-height:12.556px"><span style="color:#dcdcaa">digitalWrite</span><span style="color:#d4d4d4">(settings.</span><span style="color:#9cdcfe">chipSelectPin</span><span style="color:#d4d4d4">,</span><span style="color:#505050">·</span><span style="color:#d4d4d4">HIGH);</span></div><div class="a mono" style="left:0;top:300.04px;width:28.00px;height:12.556px;line-height:12.556px;text-align:right;color:#858585">620</div><svg class="a" style="left:45.10px;top:303.72px" width="6" height="4" viewBox="0 0 6 4"><path d="M0.3 2 H4.6 M3 0.6 L4.8 2 L3 3.4" fill="none" stroke="#555555" stroke-width="0.75"/></svg><svg class="a" style="left:65.45px;top:303.72px" width="6" height="4" viewBox="0 0 6 4"><path d="M0.3 2 H4.6 M3 0.6 L4.8 2 L3 3.4" fill="none" stroke="#555555" stroke-width="0.75"/></svg><div class="a mono" style="left:85.50px;top:300.44px;line-height:12.556px"><span style="color:#c586c0">break</span><span style="color:#d4d4d4">;</span></div><div class="a mono" style="left:0;top:312.60px;width:28.00px;height:12.556px;line-height:12.556px;text-align:right;color:#858585">621</div><div class="a mono" style="left:0;top:325.16px;width:28.00px;height:12.556px;line-height:12.556px;text-align:right;color:#858585">622</div><svg class="a" style="left:45.10px;top:328.83px" width="6" height="4" viewBox="0 0 6 4"><path d="M0.3 2 H4.6 M3 0.6 L4.8 2 L3 3.4" fill="none" stroke="#555555" stroke-width="0.75"/></svg><div class="a mono" style="left:65.15px;top:325.56px;line-height:12.556px"><span style="color:#c586c0">default</span><span style="color:#d4d4d4">:</span></div><div class="a mono" style="left:0;top:337.71px;width:28.00px;height:12.556px;line-height:12.556px;text-align:right;color:#858585">623</div><svg class="a" style="left:45.10px;top:341.39px" width="6" height="4" viewBox="0 0 6 4"><path d="M0.3 2 H4.6 M3 0.6 L4.8 2 L3 3.4" fill="none" stroke="#555555" stroke-width="0.75"/></svg><svg class="a" style="left:65.45px;top:341.39px" width="6" height="4" viewBox="0 0 6 4"><path d="M0.3 2 H4.6 M3 0.6 L4.8 2 L3 3.4" fill="none" stroke="#555555" stroke-width="0.75"/></svg><div class="a mono" style="left:85.50px;top:338.11px;line-height:12.556px"><span style="color:#c586c0">break</span><span style="color:#d4d4d4">;</span></div><div class="a mono" style="left:0;top:350.27px;width:28.00px;height:12.556px;line-height:12.556px;text-align:right;color:#858585">624</div><svg class="a" style="left:45.10px;top:353.95px" width="6" height="4" viewBox="0 0 6 4"><path d="M0.3 2 H4.6 M3 0.6 L4.8 2 L3 3.4" fill="none" stroke="#555555" stroke-width="0.75"/></svg><div class="a mono" style="left:65.15px;top:350.67px;line-height:12.556px"><span style="color:#d4d4d4">}</span></div><div class="a mono" style="left:0;top:362.82px;width:28.00px;height:12.556px;line-height:12.556px;text-align:right;color:#858585">625</div><svg class="a" style="left:45.10px;top:366.50px" width="6" height="4" viewBox="0 0 6 4"><path d="M0.3 2 H4.6 M3 0.6 L4.8 2 L3 3.4" fill="none" stroke="#555555" stroke-width="0.75"/></svg><div class="a mono" style="left:65.15px;top:363.22px;line-height:12.556px"><span style="color:#c586c0">return</span><span style="color:#505050">·</span><span style="color:#d4d4d4">result;</span></div><div class="a mono" style="left:0;top:375.38px;width:28.00px;height:12.556px;line-height:12.556px;text-align:right;color:#858585">626</div><div class="a mono" style="left:44.80px;top:375.78px;line-height:12.556px"><span style="color:#d4d4d4">}</span></div><div class="a mono" style="left:0;top:387.94px;width:28.00px;height:12.556px;line-height:12.556px;text-align:right;color:#858585">627</div><div class="a mono" style="left:0;top:400.49px;width:28.00px;height:12.556px;line-height:12.556px;text-align:right;color:#858585">628</div><div class="a mono" style="left:44.80px;top:400.89px;line-height:12.556px"><span style="color:#4ec9b0">int16_t</span><span style="color:#505050">·</span><span style="color:#dcdcaa">BME280</span><span style="color:#d4d4d4">::</span><span style="color:#dcdcaa">readRegisterInt16</span><span style="color:#d4d4d4">(</span><span style="color:#505050">·</span><span style="color:#4ec9b0">uint8_t</span><span style="color:#505050">·</span><span style="color:#d4d4d4">offset</span><span style="color:#505050">·</span><span style="color:#d4d4d4">)</span></div><div class="a mono" style="left:0;top:413.05px;width:28.00px;height:12.556px;line-height:12.556px;text-align:right;color:#858585">629</div><div class="a mono" style="left:44.80px;top:413.45px;line-height:12.556px"><span style="color:#d4d4d4">{</span></div><div class="a mono" style="left:0;top:425.60px;width:28.00px;height:12.556px;line-height:12.556px;text-align:right;color:#858585">630</div><svg class="a" style="left:45.10px;top:429.28px" width="6" height="4" viewBox="0 0 6 4"><path d="M0.3 2 H4.6 M3 0.6 L4.8 2 L3 3.4" fill="none" stroke="#555555" stroke-width="0.75"/></svg><div class="a mono" style="left:65.15px;top:426.00px;line-height:12.556px"><span style="color:#4ec9b0">uint8_t</span><span style="color:#505050">·</span><span style="color:#d4d4d4">myBuffer[</span><span style="color:#b5cea8">2</span><span style="color:#d4d4d4">];</span></div><div class="a mono" style="left:0;top:438.16px;width:28.00px;height:12.556px;line-height:12.556px;text-align:right;color:#858585">631</div><svg class="a" style="left:45.10px;top:441.84px" width="6" height="4" viewBox="0 0 6 4"><path d="M0.3 2 H4.6 M3 0.6 L4.8 2 L3 3.4" fill="none" stroke="#555555" stroke-width="0.75"/></svg><div class="a mono" style="left:65.15px;top:438.56px;line-height:12.556px"><span style="color:#dcdcaa">readRegisterRegion</span><span style="color:#d4d4d4">(myBuffer,</span><span style="color:#505050">·</span><span style="color:#d4d4d4">offset,</span><span style="color:#505050">·</span><span style="color:#b5cea8">2</span><span style="color:#d4d4d4">);</span><span style="color:#505050">·</span><span style="color:#505050">·</span><span style="color:#6a9955">//Does</span><span style="color:#505050">·</span><span style="color:#6a9955">memory</span><span style="color:#505050">·</span><span style="color:#6a9955">transfer</span></div><div class="a mono" style="left:0;top:450.72px;width:28.00px;height:12.556px;line-height:12.556px;text-align:right;color:#858585">632</div><svg class="a" style="left:45.10px;top:454.39px" width="6" height="4" viewBox="0 0 6 4"><path d="M0.3 2 H4.6 M3 0.6 L4.8 2 L3 3.4" fill="none" stroke="#555555" stroke-width="0.75"/></svg><div class="a mono" style="left:65.15px;top:451.12px;line-height:12.556px"><span style="color:#4ec9b0">int16_t</span><span style="color:#505050">·</span><span style="color:#d4d4d4">output</span><span style="color:#505050">·</span><span style="color:#d4d4d4">=</span><span style="color:#505050">·</span><span style="color:#d4d4d4">(</span><span style="color:#4ec9b0">int16_t</span><span style="color:#d4d4d4">)myBuffer[</span><span style="color:#b5cea8">0</span><span style="color:#d4d4d4">]</span><span style="color:#505050">·</span><span style="color:#d4d4d4">|</span><span style="color:#505050">·</span><span style="color:#4ec9b0">int16_t</span><span style="color:#d4d4d4">(myBuffer[</span><span style="color:#b5cea8">1</span><span style="color:#d4d4d4">]</span><span style="color:#505050">·</span><span style="color:#d4d4d4">&lt;&lt;</span><span style="color:#505050">·</span><span style="color:#b5cea8">8</span><span style="color:#d4d4d4">);</span></div><div class="a mono" style="left:0;top:463.27px;width:28.00px;height:12.556px;line-height:12.556px;text-align:right;color:#858585">633</div><svg class="a" style="left:45.10px;top:466.95px" width="6" height="4" viewBox="0 0 6 4"><path d="M0.3 2 H4.6 M3 0.6 L4.8 2 L3 3.4" fill="none" stroke="#555555" stroke-width="0.75"/></svg><div class="a mono" style="left:0;top:475.83px;width:28.00px;height:12.556px;line-height:12.556px;text-align:right;color:#858585">634</div><svg class="a" style="left:45.10px;top:479.51px" width="6" height="4" viewBox="0 0 6 4"><path d="M0.3 2 H4.6 M3 0.6 L4.8 2 L3 3.4" fill="none" stroke="#555555" stroke-width="0.75"/></svg><div class="a mono" style="left:65.15px;top:476.23px;line-height:12.556px"><span style="color:#c586c0">return</span><span style="color:#505050">·</span><span style="color:#d4d4d4">output;</span></div><div class="a mono" style="left:0;top:488.38px;width:28.00px;height:12.556px;line-height:12.556px;text-align:right;color:#858585">635</div><div class="a mono" style="left:44.80px;top:488.78px;line-height:12.556px"><span style="color:#d4d4d4">}</span></div><div class="a mono" style="left:0;top:500.94px;width:28.00px;height:12.556px;line-height:12.556px;text-align:right;color:#858585">636</div><div class="a mono" style="left:0;top:513.50px;width:28.00px;height:12.556px;line-height:12.556px;text-align:right;color:#858585">637</div><div class="a mono" style="left:44.80px;top:513.90px;line-height:12.556px"><span style="color:#569cd6">void</span><span style="color:#505050">·</span><span style="color:#dcdcaa">BME280</span><span style="color:#d4d4d4">::</span><span style="color:#dcdcaa">writeRegister</span><span style="color:#d4d4d4">(</span><span style="color:#4ec9b0">uint8_t</span><span style="color:#505050">·</span><span style="color:#d4d4d4">offset,</span><span style="color:#505050">·</span><span style="color:#4ec9b0">uint8_t</span><span style="color:#505050">·</span><span style="color:#d4d4d4">dataToWrite)</span></div></div><div class="a" style="left:229.2px;top:23.1px;width:491px;height:523.7px;overflow:hidden"><div class="a" style="left:44.80px;top:-1.30px;width:0.7px;height:12.61px;background:#3a3a3a"></div><div class="a" style="left:65.15px;top:-1.30px;width:0.7px;height:12.61px;background:#3a3a3a"></div><div class="a" style="left:85.50px;top:-1.30px;width:0.7px;height:12.61px;background:#3a3a3a"></div><div class="a" style="left:105.86px;top:-1.30px;width:0.7px;height:12.61px;background:#3a3a3a"></div><div class="a" style="left:44.80px;top:11.26px;width:0.7px;height:12.61px;background:#3a3a3a"></div><div class="a" style="left:65.15px;top:11.26px;width:0.7px;height:12.61px;background:#3a3a3a"></div><div class="a" style="left:85.50px;top:11.26px;width:0.7px;height:12.61px;background:#3a3a3a"></div><div class="a" style="left:105.86px;top:11.26px;width:0.7px;height:12.61px;background:#3a3a3a"></div><div class="a" style="left:44.80px;top:23.81px;width:0.7px;height:12.61px;background:#3a3a3a"></div><div class="a" style="left:65.15px;top:23.81px;width:0.7px;height:12.61px;background:#3a3a3a"></div><div class="a" style="left:85.50px;top:23.81px;width:0.7px;height:12.61px;background:#3a3a3a"></div><div class="a" style="left:105.86px;top:23.81px;width:0.7px;height:12.61px;background:#3a3a3a"></div><div class="a" style="left:44.80px;top:36.37px;width:0.7px;height:12.61px;background:#3a3a3a"></div><div class="a" style="left:65.15px;top:36.37px;width:0.7px;height:12.61px;background:#3a3a3a"></div><div class="a" style="left:85.50px;top:36.37px;width:0.7px;height:12.61px;background:#3a3a3a"></div><div class="a" style="left:105.86px;top:36.37px;width:0.7px;height:12.61px;background:#3a3a3a"></div><div class="a" style="left:44.80px;top:48.92px;width:0.7px;height:12.61px;background:#3a3a3a"></div><div class="a" style="left:65.15px;top:48.92px;width:0.7px;height:12.61px;background:#3a3a3a"></div><div class="a" style="left:85.50px;top:48.92px;width:0.7px;height:12.61px;background:#3a3a3a"></div><div class="a" style="left:105.86px;top:48.92px;width:0.7px;height:12.61px;background:#3a3a3a"></div><div class="a" style="left:44.80px;top:61.48px;width:0.7px;height:12.61px;background:#3a3a3a"></div><div class="a" style="left:65.15px;top:61.48px;width:0.7px;height:12.61px;background:#3a3a3a"></div><div class="a" style="left:85.50px;top:61.48px;width:0.7px;height:12.61px;background:#3a3a3a"></div><div class="a" style="left:105.86px;top:61.48px;width:0.7px;height:12.61px;background:#3a3a3a"></div><div class="a" style="left:44.80px;top:74.04px;width:0.7px;height:12.61px;background:#3a3a3a"></div><div class="a" style="left:65.15px;top:74.04px;width:0.7px;height:12.61px;background:#3a3a3a"></div><div class="a" style="left:85.50px;top:74.04px;width:0.7px;height:12.61px;background:#3a3a3a"></div><div class="a" style="left:105.86px;top:74.04px;width:0.7px;height:12.61px;background:#3a3a3a"></div><div class="a" style="left:44.80px;top:86.59px;width:0.7px;height:12.61px;background:#3a3a3a"></div><div class="a" style="left:65.15px;top:86.59px;width:0.7px;height:12.61px;background:#3a3a3a"></div><div class="a" style="left:85.50px;top:86.59px;width:0.7px;height:12.61px;background:#3a3a3a"></div><div class="a" style="left:105.86px;top:86.59px;width:0.7px;height:12.61px;background:#3a3a3a"></div><div class="a" style="left:126.21px;top:86.59px;width:0.7px;height:12.61px;background:#3a3a3a"></div><div class="a" style="left:44.80px;top:99.15px;width:0.7px;height:12.61px;background:#3a3a3a"></div><div class="a" style="left:65.15px;top:99.15px;width:0.7px;height:12.61px;background:#3a3a3a"></div><div class="a" style="left:85.50px;top:99.15px;width:0.7px;height:12.61px;background:#3a3a3a"></div><div class="a" style="left:105.86px;top:99.15px;width:0.7px;height:12.61px;background:#3a3a3a"></div><div class="a" style="left:44.80px;top:111.70px;width:0.7px;height:12.61px;background:#3a3a3a"></div><div class="a" style="left:65.15px;top:111.70px;width:0.7px;height:12.61px;background:#3a3a3a"></div><div class="a" style="left:85.50px;top:111.70px;width:0.7px;height:12.61px;background:#3a3a3a"></div><div class="a" style="left:44.80px;top:124.26px;width:0.7px;height:12.61px;background:#3a3a3a"></div><div class="a" style="left:65.15px;top:124.26px;width:0.7px;height:12.61px;background:#3a3a3a"></div><div class="a" style="left:85.50px;top:124.26px;width:0.7px;height:12.61px;background:#3a3a3a"></div><div class="a" style="left:105.86px;top:124.26px;width:0.7px;height:12.61px;background:#3a3a3a"></div><div class="a" style="left:44.80px;top:136.82px;width:0.7px;height:12.61px;background:#3a3a3a"></div><div class="a" style="left:65.15px;top:136.82px;width:0.7px;height:12.61px;background:#3a3a3a"></div><div class="a" style="left:44.80px;top:149.37px;width:0.7px;height:12.61px;background:#3a3a3a"></div><div class="a" style="left:65.15px;top:149.37px;width:0.7px;height:12.61px;background:#3a3a3a"></div><div class="a" style="left:44.80px;top:161.93px;width:0.7px;height:12.61px;background:#3a3a3a"></div><div class="a" style="left:65.15px;top:161.93px;width:0.7px;height:12.61px;background:#3a3a3a"></div><div class="a" style="left:44.80px;top:174.48px;width:0.7px;height:12.61px;background:#3a3a3a"></div><div class="a" style="left:65.15px;top:174.48px;width:0.7px;height:12.61px;background:#3a3a3a"></div><div class="a" style="left:44.80px;top:187.04px;width:0.7px;height:12.61px;background:#3a3a3a"></div><div class="a" style="left:44.80px;top:199.60px;width:0.7px;height:12.61px;background:#3a3a3a"></div><div class="a" style="left:65.15px;top:199.60px;width:0.7px;height:12.61px;background:#3a3a3a"></div><div class="a" style="left:44.80px;top:212.15px;width:0.7px;height:12.61px;background:#3a3a3a"></div><div class="a" style="left:65.15px;top:212.15px;width:0.7px;height:12.61px;background:#3a3a3a"></div><div class="a" style="left:44.80px;top:224.71px;width:0.7px;height:12.61px;background:#3a3a3a"></div><div class="a" style="left:65.15px;top:224.71px;width:0.7px;height:12.61px;background:#3a3a3a"></div><div class="a" style="left:44.80px;top:237.26px;width:0.7px;height:12.61px;background:#3a3a3a"></div><div class="a" style="left:65.15px;top:237.26px;width:0.7px;height:12.61px;background:#3a3a3a"></div><div class="a" style="left:44.80px;top:249.82px;width:0.7px;height:12.61px;background:#3a3a3a"></div><div class="a" style="left:65.15px;top:249.82px;width:0.7px;height:12.61px;background:#3a3a3a"></div><div class="a" style="left:44.80px;top:262.38px;width:0.7px;height:12.61px;background:#3a3a3a"></div><div class="a" style="left:65.15px;top:262.38px;width:0.7px;height:12.61px;background:#3a3a3a"></div><div class="a" style="left:44.80px;top:274.93px;width:0.7px;height:12.61px;background:#3a3a3a"></div><div class="a" style="left:65.15px;top:274.93px;width:0.7px;height:12.61px;background:#3a3a3a"></div><div class="a" style="left:44.80px;top:287.49px;width:0.7px;height:12.61px;background:#3a3a3a"></div><div class="a" style="left:65.15px;top:287.49px;width:0.7px;height:12.61px;background:#3a3a3a"></div><div class="a" style="left:44.80px;top:300.04px;width:0.7px;height:12.61px;background:#3a3a3a"></div><div class="a" style="left:65.15px;top:300.04px;width:0.7px;height:12.61px;background:#3a3a3a"></div><div class="a" style="left:44.80px;top:312.60px;width:0.7px;height:12.61px;background:#3a3a3a"></div><div class="a" style="left:65.15px;top:312.60px;width:0.7px;height:12.61px;background:#3a3a3a"></div><div class="a" style="left:44.80px;top:325.16px;width:0.7px;height:12.61px;background:#3a3a3a"></div><div class="a" style="left:44.80px;top:337.71px;width:0.7px;height:12.61px;background:#3a3a3a"></div><div class="a" style="left:65.15px;top:337.71px;width:0.7px;height:12.61px;background:#3a3a3a"></div><div class="a" style="left:44.80px;top:350.27px;width:0.7px;height:12.61px;background:#3a3a3a"></div><div class="a" style="left:44.80px;top:362.82px;width:0.7px;height:12.61px;background:#3a3a3a"></div><div class="a" style="left:44.80px;top:425.60px;width:0.7px;height:12.61px;background:#3a3a3a"></div><div class="a" style="left:44.80px;top:438.16px;width:0.7px;height:12.61px;background:#3a3a3a"></div><div class="a" style="left:44.80px;top:450.72px;width:0.7px;height:12.61px;background:#3a3a3a"></div><div class="a" style="left:44.80px;top:463.27px;width:0.7px;height:12.61px;background:#3a3a3a"></div><div class="a" style="left:44.80px;top:475.83px;width:0.7px;height:12.61px;background:#3a3a3a"></div></div><svg class="a" style="left:720.0px;top:23.1px" width="69.6" height="523.7" viewBox="0 0 69.6 523.7"><defs><pattern id="mmp" width="0.8" height="1.6" patternUnits="userSpaceOnUse"><rect width="0.56" height="1.28" fill="#fff"/></pattern><mask id="mmm"><rect width="100%" height="100%" fill="url(#mmp)"/></mask></defs><g fill-opacity="0.75" mask="url(#mmm)"><rect x="9.6" y="0.2" width="1.6" height="1.1" fill="#c586c0"/><rect x="12.0" y="0.2" width="0.8" height="1.1" fill="#d4d4d4"/><rect x="12.8" y="0.2" width="0.8" height="1.1" fill="#d4d4d4"/><rect x="14.4" y="0.2" width="0.8" height="1.1" fill="#d4d4d4"/><rect x="16.0" y="0.2" width="0.8" height="1.1" fill="#d4d4d4"/><rect x="16.8" y="0.2" width="0.8" height="1.1" fill="#d4d4d4"/><rect x="18.4" y="0.2" width="0.8" height="1.1" fill="#d4d4d4"/><rect x="12.8" y="1.8" width="4.0" height="1.1" fill="#d4d4d4"/><rect x="17.6" y="1.8" width="0.8" height="1.1" fill="#d4d4d4"/><rect x="19.2" y="1.8" width="3.2" height="1.1" fill="#dcdcaa"/><rect x="22.4" y="1.8" width="0.8" height="1.1" fill="#d4d4d4"/><rect x="23.2" y="1.8" width="0.8" height="1.1" fill="#d4d4d4"/><rect x="24.0" y="1.8" width="0.8" height="1.1" fill="#d4d4d4"/><rect x="24.8" y="1.8" width="0.8" height="1.1" fill="#d4d4d4"/><rect x="9.6" y="3.4" width="0.8" height="1.1" fill="#d4d4d4"/><rect x="6.4" y="5.0" width="4.8" height="1.1" fill="#c586c0"/><rect x="12.0" y="5.0" width="4.0" height="1.1" fill="#d4d4d4"/><rect x="16.0" y="5.0" width="0.8" height="1.1" fill="#d4d4d4"/><rect x="3.2" y="6.6" width="0.8" height="1.1" fill="#d4d4d4"/><rect x="0.0" y="8.2" width="0.8" height="1.1" fill="#d4d4d4"/><rect x="0.0" y="11.4" width="4.8" height="1.1" fill="#6a9955"/><rect x="5.6" y="11.4" width="2.4" height="1.1" fill="#6a9955"/><rect x="8.8" y="11.4" width="6.4" height="1.1" fill="#6a9955"/><rect x="16.0" y="11.4" width="6.4" height="1.1" fill="#6a9955"/><rect x="23.2" y="11.4" width="14.4" height="1.1" fill="#6a9955"/><rect x="38.4" y="11.4" width="1.6" height="1.1" fill="#6a9955"/><rect x="40.8" y="11.4" width="2.4" height="1.1" fill="#6a9955"/><rect x="44.0" y="11.4" width="6.4" height="1.1" fill="#6a9955"/><rect x="51.2" y="11.4" width="1.6" height="1.1" fill="#6a9955"/><rect x="53.6" y="11.4" width="8.0" height="1.1" fill="#6a9955"/><rect x="62.4" y="11.4" width="7.2" height="1.1" fill="#6a9955"/><rect x="0.0" y="13.0" width="3.2" height="1.1" fill="#569cd6"/><rect x="4.0" y="13.0" width="4.8" height="1.1" fill="#4ec9b0"/><rect x="8.8" y="13.0" width="0.8" height="1.1" fill="#d4d4d4"/><rect x="9.6" y="13.0" width="0.8" height="1.1" fill="#d4d4d4"/><rect x="10.4" y="13.0" width="16.0" height="1.1" fill="#dcdcaa"/><rect x="26.4" y="13.0" width="0.8" height="1.1" fill="#d4d4d4"/><rect x="28.0" y="13.0" width="3.2" height="1.1" fill="#569cd6"/><rect x="32.0" y="13.0" width="0.8" height="1.1" fill="#d4d4d4"/><rect x="0.0" y="14.6" width="0.8" height="1.1" fill="#d4d4d4"/><rect x="3.2" y="16.2" width="13.6" height="1.1" fill="#d4d4d4"/><rect x="17.6" y="16.2" width="0.8" height="1.1" fill="#d4d4d4"/><rect x="19.2" y="16.2" width="8.8" height="1.1" fill="#d4d4d4"/><rect x="28.0" y="16.2" width="0.8" height="1.1" fill="#d4d4d4"/><rect x="0.0" y="17.8" width="0.8" height="1.1" fill="#d4d4d4"/><rect x="0.0" y="21.0" width="6.4" height="1.1" fill="#6a9955"/><rect x="7.2" y="21.0" width="2.4" height="1.1" fill="#6a9955"/><rect x="10.4" y="21.0" width="4.0" height="1.1" fill="#6a9955"/><rect x="15.2" y="21.0" width="7.2" height="1.1" fill="#6a9955"/><rect x="23.2" y="21.0" width="6.4" height="1.1" fill="#6a9955"/><rect x="0.0" y="22.6" width="4.0" height="1.1" fill="#569cd6"/><rect x="4.8" y="22.6" width="4.8" height="1.1" fill="#4ec9b0"/><rect x="9.6" y="22.6" width="0.8" height="1.1" fill="#d4d4d4"/><rect x="10.4" y="22.6" width="0.8" height="1.1" fill="#d4d4d4"/><rect x="11.2" y="22.6" width="16.0" height="1.1" fill="#dcdcaa"/><rect x="27.2" y="22.6" width="0.8" height="1.1" fill="#d4d4d4"/><rect x="28.8" y="22.6" width="3.2" height="1.1" fill="#569cd6"/><rect x="32.8" y="22.6" width="0.8" height="1.1" fill="#d4d4d4"/><rect x="0.0" y="24.2" width="0.8" height="1.1" fill="#d4d4d4"/><rect x="3.2" y="25.8" width="4.8" height="1.1" fill="#c586c0"/><rect x="8.0" y="25.8" width="0.8" height="1.1" fill="#d4d4d4"/><rect x="8.8" y="25.8" width="14.4" height="1.1" fill="#d4d4d4"/><rect x="23.2" y="25.8" width="0.8" height="1.1" fill="#d4d4d4"/><rect x="24.0" y="25.8" width="0.8" height="1.1" fill="#d4d4d4"/><rect x="0.0" y="27.4" width="0.8" height="1.1" fill="#d4d4d4"/><rect x="0.0" y="30.6" width="4.0" height="1.1" fill="#569cd6"/><rect x="4.8" y="30.6" width="4.8" height="1.1" fill="#4ec9b0"/><rect x="9.6" y="30.6" width="0.8" height="1.1" fill="#d4d4d4"/><rect x="10.4" y="30.6" width="0.8" height="1.1" fill="#d4d4d4"/><rect x="11.2" y="30.6" width="18.4" height="1.1" fill="#dcdcaa"/><rect x="29.6" y="30.6" width="0.8" height="1.1" fill="#d4d4d4"/><rect x="31.2" y="30.6" width="3.2" height="1.1" fill="#569cd6"/><rect x="35.2" y="30.6" width="0.8" height="1.1" fill="#d4d4d4"/><rect x="0.0" y="32.2" width="0.8" height="1.1" fill="#d4d4d4"/><rect x="3.2" y="33.8" width="4.0" height="1.1" fill="#569cd6"/><rect x="8.0" y="33.8" width="9.6" height="1.1" fill="#d4d4d4"/><rect x="18.4" y="33.8" width="0.8" height="1.1" fill="#d4d4d4"/><rect x="20.0" y="33.8" width="0.8" height="1.1" fill="#b5cea8"/><rect x="20.8" y="33.8" width="0.8" height="1.1" fill="#d4d4d4"/><rect x="3.2" y="35.4" width="9.6" height="1.1" fill="#d4d4d4"/><rect x="13.6" y="35.4" width="0.8" height="1.1" fill="#d4d4d4"/><rect x="15.2" y="35.4" width="0.8" height="1.1" fill="#d4d4d4"/><rect x="16.0" y="35.4" width="0.8" height="1.1" fill="#d4d4d4"/><rect x="16.8" y="35.4" width="4.0" height="1.1" fill="#569cd6"/><rect x="20.8" y="35.4" width="0.8" height="1.1" fill="#d4d4d4"/><rect x="21.6" y="35.4" width="0.8" height="1.1" fill="#d4d4d4"/><rect x="22.4" y="35.4" width="6.4" height="1.1" fill="#b5cea8"/><rect x="28.8" y="35.4" width="0.8" height="1.1" fill="#d4d4d4"/><rect x="29.6" y="35.4" width="0.8" height="1.1" fill="#d4d4d4"/><rect x="30.4" y="35.4" width="0.8" height="1.1" fill="#d4d4d4"/><rect x="31.2" y="35.4" width="2.4" height="1.1" fill="#dcdcaa"/><rect x="33.6" y="35.4" width="0.8" height="1.1" fill="#d4d4d4"/><rect x="34.4" y="35.4" width="0.8" height="1.1" fill="#d4d4d4"/><rect x="35.2" y="35.4" width="0.8" height="1.1" fill="#d4d4d4"/><rect x="36.0" y="35.4" width="4.0" height="1.1" fill="#569cd6"/><rect x="40.0" y="35.4" width="0.8" height="1.1" fill="#d4d4d4"/><rect x="40.8" y="35.4" width="13.6" height="1.1" fill="#dcdcaa"/><rect x="54.4" y="35.4" width="0.8" height="1.1" fill="#d4d4d4"/><rect x="55.2" y="35.4" width="0.8" height="1.1" fill="#d4d4d4"/><rect x="56.0" y="35.4" width="0.8" height="1.1" fill="#d4d4d4"/><rect x="56.8" y="35.4" width="0.8" height="1.1" fill="#d4d4d4"/><rect x="57.6" y="35.4" width="4.0" height="1.1" fill="#569cd6"/><rect x="61.6" y="35.4" width="0.8" height="1.1" fill="#d4d4d4"/><rect x="62.4" y="35.4" width="7.2" height="1.1" fill="#d4d4d4"/><rect x="3.2" y="37.0" width="4.8" height="1.1" fill="#c586c0"/><rect x="8.8" y="37.0" width="9.6" height="1.1" fill="#d4d4d4"/><rect x="18.4" y="37.0" width="0.8" height="1.1" fill="#d4d4d4"/><rect x="0.0" y="38.6" width="0.8" height="1.1" fill="#d4d4d4"/><rect x="0.0" y="43.4" width="64.0" height="1.1" fill="#6a9955"/><rect x="0.0" y="45.0" width="1.6" height="1.1" fill="#6a9955"/><rect x="0.0" y="46.6" width="1.6" height="1.1" fill="#6a9955"/><rect x="3.2" y="46.6" width="6.4" height="1.1" fill="#6a9955"/><rect x="10.4" y="46.6" width="5.6" height="1.1" fill="#6a9955"/><rect x="0.0" y="48.2" width="1.6" height="1.1" fill="#6a9955"/><rect x="0.0" y="49.8" width="64.0" height="1.1" fill="#6a9955"/><rect x="0.0" y="53.0" width="4.0" height="1.1" fill="#569cd6"/><rect x="4.8" y="53.0" width="4.8" height="1.1" fill="#4ec9b0"/><rect x="9.6" y="53.0" width="0.8" height="1.1" fill="#d4d4d4"/><rect x="10.4" y="53.0" width="0.8" height="1.1" fill="#d4d4d4"/><rect x="11.2" y="53.0" width="13.6" height="1.1" fill="#dcdcaa"/><rect x="24.8" y="53.0" width="0.8" height="1.1" fill="#d4d4d4"/><rect x="26.4" y="53.0" width="3.2" height="1.1" fill="#569cd6"/><rect x="30.4" y="53.0" width="0.8" height="1.1" fill="#d4d4d4"/><rect x="0.0" y="54.6" width="0.8" height="1.1" fill="#d4d4d4"/><rect x="3.2" y="56.2" width="1.6" height="1.1" fill="#6a9955"/><rect x="5.6" y="56.2" width="5.6" height="1.1" fill="#6a9955"/><rect x="12.0" y="56.2" width="6.4" height="1.1" fill="#6a9955"/><rect x="19.2" y="56.2" width="1.6" height="1.1" fill="#6a9955"/><rect x="21.6" y="56.2" width="2.4" height="1.1" fill="#6a9955"/><rect x="24.8" y="56.2" width="1.6" height="1.1" fill="#6a9955"/><rect x="27.2" y="56.2" width="6.4" height="1.1" fill="#6a9955"/><rect x="34.4" y="56.2" width="1.6" height="1.1" fill="#6a9955"/><rect x="36.8" y="56.2" width="2.4" height="1.1" fill="#6a9955"/><rect x="40.0" y="56.2" width="5.6" height="1.1" fill="#6a9955"/><rect x="46.4" y="56.2" width="1.6" height="1.1" fill="#6a9955"/><rect x="48.8" y="56.2" width="3.2" height="1.1" fill="#6a9955"/><rect x="52.8" y="56.2" width="1.6" height="1.1" fill="#6a9955"/><rect x="55.2" y="56.2" width="4.8" height="1.1" fill="#6a9955"/><rect x="60.8" y="56.2" width="2.4" height="1.1" fill="#6a9955"/><rect x="64.0" y="56.2" width="5.6" height="1.1" fill="#6a9955"/><rect x="3.2" y="57.8" width="1.6" height="1.1" fill="#6a9955"/><rect x="5.6" y="57.8" width="4.8" height="1.1" fill="#6a9955"/><rect x="11.2" y="57.8" width="4.0" height="1.1" fill="#6a9955"/><rect x="16.0" y="57.8" width="1.6" height="1.1" fill="#6a9955"/><rect x="18.4" y="57.8" width="5.6" height="1.1" fill="#6a9955"/><rect x="24.8" y="57.8" width="8.0" height="1.1" fill="#6a9955"/><rect x="33.6" y="57.8" width="8.0" height="1.1" fill="#6a9955"/><rect x="42.4" y="57.8" width="0.8" height="1.1" fill="#6a9955"/><rect x="44.0" y="57.8" width="2.4" height="1.1" fill="#6a9955"/><rect x="47.2" y="57.8" width="2.4" height="1.1" fill="#6a9955"/><rect x="50.4" y="57.8" width="2.4" height="1.1" fill="#6a9955"/><rect x="3.2" y="59.4" width="5.6" height="1.1" fill="#4ec9b0"/><rect x="9.6" y="59.4" width="4.0" height="1.1" fill="#d4d4d4"/><rect x="14.4" y="59.4" width="0.8" height="1.1" fill="#d4d4d4"/><rect x="16.0" y="59.4" width="0.8" height="1.1" fill="#d4d4d4"/><rect x="16.8" y="59.4" width="0.8" height="1.1" fill="#d4d4d4"/><rect x="17.6" y="59.4" width="6.4" height="1.1" fill="#4ec9b0"/><rect x="24.0" y="59.4" width="0.8" height="1.1" fill="#d4d4d4"/><rect x="24.8" y="59.4" width="9.6" height="1.1" fill="#dcdcaa"/><rect x="34.4" y="59.4" width="0.8" height="1.1" fill="#d4d4d4"/><rect x="35.2" y="59.4" width="18.4" height="1.1" fill="#d4d4d4"/><rect x="53.6" y="59.4" width="0.8" height="1.1" fill="#d4d4d4"/><rect x="55.2" y="59.4" width="0.8" height="1.1" fill="#d4d4d4"/><rect x="56.0" y="59.4" width="0.8" height="1.1" fill="#d4d4d4"/><rect x="57.6" y="59.4" width="0.8" height="1.1" fill="#b5cea8"/><rect x="58.4" y="59.4" width="0.8" height="1.1" fill="#d4d4d4"/><rect x="60.0" y="59.4" width="0.8" height="1.1" fill="#d4d4d4"/><rect x="61.6" y="59.4" width="0.8" height="1.1" fill="#d4d4d4"/><rect x="62.4" y="59.4" width="0.8" height="1.1" fill="#d4d4d4"/><rect x="63.2" y="59.4" width="6.4" height="1.1" fill="#4ec9b0"/><rect x="69.6" y="59.4" width="0.0" height="1.1" fill="#d4d4d4"/><rect x="3.2" y="62.6" width="5.6" height="1.1" fill="#4ec9b0"/><rect x="9.6" y="62.6" width="3.2" height="1.1" fill="#d4d4d4"/><rect x="12.8" y="62.6" width="0.8" height="1.1" fill="#d4d4d4"/><rect x="3.2" y="64.2" width="3.2" height="1.1" fill="#d4d4d4"/><rect x="7.2" y="64.2" width="0.8" height="1.1" fill="#d4d4d4"/><rect x="8.8" y="64.2" width="0.8" height="1.1" fill="#d4d4d4"/><rect x="9.6" y="64.2" width="4.8" height="1.1" fill="#d4d4d4"/><rect x="15.2" y="64.2" width="0.8" height="1.1" fill="#d4d4d4"/><rect x="16.8" y="64.2" width="0.8" height="1.1" fill="#d4d4d4"/><rect x="17.6" y="64.2" width="0.8" height="1.1" fill="#d4d4d4"/><rect x="18.4" y="64.2" width="5.6" height="1.1" fill="#4ec9b0"/><rect x="24.0" y="64.2" width="0.8" height="1.1" fill="#d4d4d4"/><rect x="24.8" y="64.2" width="4.0" height="1.1" fill="#b5cea8"/><rect x="28.8" y="64.2" width="0.8" height="1.1" fill="#d4d4d4"/><rect x="29.6" y="64.2" width="0.8" height="1.1" fill="#d4d4d4"/><rect x="30.4" y="64.2" width="0.8" height="1.1" fill="#d4d4d4"/><rect x="3.2" y="65.8" width="3.2" height="1.1" fill="#d4d4d4"/><rect x="7.2" y="65.8" width="0.8" height="1.1" fill="#d4d4d4"/><rect x="8.8" y="65.8" width="0.8" height="1.1" fill="#d4d4d4"/><rect x="9.6" y="65.8" width="0.8" height="1.1" fill="#d4d4d4"/><rect x="10.4" y="65.8" width="0.8" height="1.1" fill="#d4d4d4"/><rect x="11.2" y="65.8" width="0.8" height="1.1" fill="#d4d4d4"/><rect x="12.0" y="65.8" width="0.8" height="1.1" fill="#d4d4d4"/><rect x="12.8" y="65.8" width="4.0" height="1.1" fill="#d4d4d4"/><rect x="17.6" y="65.8" width="0.8" height="1.1" fill="#d4d4d4"/><rect x="18.4" y="65.8" width="0.8" height="1.1" fill="#d4d4d4"/><rect x="20.0" y="65.8" width="1.6" height="1.1" fill="#b5cea8"/><rect x="21.6" y="65.8" width="0.8" height="1.1" fill="#d4d4d4"/><rect x="23.2" y="65.8" width="0.8" height="1.1" fill="#d4d4d4"/><rect x="24.8" y="65.8" width="0.8" height="1.1" fill="#d4d4d4"/><rect x="25.6" y="65.8" width="0.8" height="1.1" fill="#d4d4d4"/><rect x="26.4" y="65.8" width="0.8" height="1.1" fill="#d4d4d4"/><rect x="27.2" y="65.8" width="5.6" height="1.1" fill="#4ec9b0"/><rect x="32.8" y="65.8" width="0.8" height="1.1" fill="#d4d4d4"/><rect x="33.6" y="65.8" width="8.8" height="1.1" fill="#d4d4d4"/><rect x="42.4" y="65.8" width="0.8" height="1.1" fill="#d4d4d4"/><rect x="43.2" y="65.8" width="4.8" height="1.1" fill="#d4d4d4"/><rect x="48.0" y="65.8" width="0.8" height="1.1" fill="#d4d4d4"/><rect x="49.6" y="65.8" width="0.8" height="1.1" fill="#d4d4d4"/><rect x="50.4" y="65.8" width="0.8" height="1.1" fill="#d4d4d4"/><rect x="52.0" y="65.8" width="1.6" height="1.1" fill="#b5cea8"/><rect x="53.6" y="65.8" width="0.8" height="1.1" fill="#d4d4d4"/><rect x="55.2" y="65.8" width="0.8" height="1.1" fill="#d4d4d4"/><rect x="56.8" y="65.8" width="0.8" height="1.1" fill="#d4d4d4"/><rect x="57.6" y="65.8" width="0.8" height="1.1" fill="#d4d4d4"/><rect x="58.4" y="65.8" width="0.8" height="1.1" fill="#d4d4d4"/><rect x="59.2" y="65.8" width="5.6" height="1.1" fill="#4ec9b0"/><rect x="64.8" y="65.8" width="0.8" height="1.1" fill="#d4d4d4"/><rect x="65.6" y="65.8" width="4.0" height="1.1" fill="#d4d4d4"/><rect x="3.2" y="67.4" width="0.8" height="1.1" fill="#d4d4d4"/><rect x="4.0" y="67.4" width="0.8" height="1.1" fill="#d4d4d4"/><rect x="4.8" y="67.4" width="5.6" height="1.1" fill="#4ec9b0"/><rect x="10.4" y="67.4" width="0.8" height="1.1" fill="#d4d4d4"/><rect x="11.2" y="67.4" width="4.0" height="1.1" fill="#b5cea8"/><rect x="15.2" y="67.4" width="0.8" height="1.1" fill="#d4d4d4"/><rect x="16.0" y="67.4" width="0.8" height="1.1" fill="#d4d4d4"/><rect x="17.6" y="67.4" width="0.8" height="1.1" fill="#d4d4d4"/><rect x="18.4" y="67.4" width="0.8" height="1.1" fill="#d4d4d4"/><rect x="20.0" y="67.4" width="1.6" height="1.1" fill="#b5cea8"/><rect x="21.6" y="67.4" width="0.8" height="1.1" fill="#d4d4d4"/><rect x="23.2" y="67.4" width="0.8" height="1.1" fill="#d4d4d4"/><rect x="24.8" y="67.4" width="0.8" height="1.1" fill="#d4d4d4"/><rect x="25.6" y="67.4" width="0.8" height="1.1" fill="#d4d4d4"/><rect x="26.4" y="67.4" width="0.8" height="1.1" fill="#d4d4d4"/><rect x="27.2" y="67.4" width="0.8" height="1.1" fill="#d4d4d4"/><rect x="28.0" y="67.4" width="0.8" height="1.1" fill="#d4d4d4"/><rect x="28.8" y="67.4" width="0.8" height="1.1" fill="#d4d4d4"/><rect x="29.6" y="67.4" width="0.8" height="1.1" fill="#d4d4d4"/><rect x="30.4" y="67.4" width="3.2" height="1.1" fill="#d4d4d4"/><rect x="34.4" y="67.4" width="0.8" height="1.1" fill="#d4d4d4"/><rect x="36.0" y="67.4" width="0.8" height="1.1" fill="#d4d4d4"/><rect x="36.8" y="67.4" width="0.8" height="1.1" fill="#d4d4d4"/><rect x="37.6" y="67.4" width="5.6" height="1.1" fill="#4ec9b0"/><rect x="43.2" y="67.4" width="0.8" height="1.1" fill="#d4d4d4"/><rect x="44.0" y="67.4" width="8.8" height="1.1" fill="#d4d4d4"/><rect x="52.8" y="67.4" width="0.8" height="1.1" fill="#d4d4d4"/><rect x="53.6" y="67.4" width="4.8" height="1.1" fill="#d4d4d4"/><rect x="58.4" y="67.4" width="0.8" height="1.1" fill="#d4d4d4"/><rect x="59.2" y="67.4" width="0.8" height="1.1" fill="#d4d4d4"/><rect x="60.8" y="67.4" width="0.8" height="1.1" fill="#d4d4d4"/><rect x="61.6" y="67.4" width="0.8" height="1.1" fill="#d4d4d4"/><rect x="63.2" y="67.4" width="1.6" height="1.1" fill="#b5cea8"/><rect x="64.8" y="67.4" width="0.8" height="1.1" fill="#d4d4d4"/><rect x="66.4" y="67.4" width="0.8" height="1.1" fill="#d4d4d4"/><rect x="68.0" y="67.4" width="0.8" height="1.1" fill="#d4d4d4"/><rect x="68.8" y="67.4" width="0.8" height="1.1" fill="#d4d4d4"/><rect x="69.6" y="67.4" width="0.0" height="1.1" fill="#d4d4d4"/><rect x="3.2" y="69.0" width="0.8" height="1.1" fill="#d4d4d4"/><rect x="4.0" y="69.0" width="0.8" height="1.1" fill="#d4d4d4"/><rect x="4.8" y="69.0" width="5.6" height="1.1" fill="#4ec9b0"/><rect x="10.4" y="69.0" width="0.8" height="1.1" fill="#d4d4d4"/><rect x="11.2" y="69.0" width="8.8" height="1.1" fill="#d4d4d4"/><rect x="20.0" y="69.0" width="0.8" height="1.1" fill="#d4d4d4"/><rect x="20.8" y="69.0" width="4.8" height="1.1" fill="#d4d4d4"/><rect x="25.6" y="69.0" width="0.8" height="1.1" fill="#d4d4d4"/><rect x="27.2" y="69.0" width="0.8" height="1.1" fill="#d4d4d4"/><rect x="28.8" y="69.0" width="3.2" height="1.1" fill="#b5cea8"/><rect x="32.0" y="69.0" width="0.8" height="1.1" fill="#d4d4d4"/><rect x="33.6" y="69.0" width="0.8" height="1.1" fill="#d4d4d4"/><rect x="34.4" y="69.0" width="0.8" height="1.1" fill="#d4d4d4"/><rect x="36.0" y="69.0" width="1.6" height="1.1" fill="#b5cea8"/><rect x="37.6" y="69.0" width="0.8" height="1.1" fill="#d4d4d4"/><rect x="38.4" y="69.0" width="0.8" height="1.1" fill="#d4d4d4"/><rect x="39.2" y="69.0" width="0.8" height="1.1" fill="#d4d4d4"/><rect x="3.2" y="70.6" width="3.2" height="1.1" fill="#d4d4d4"/><rect x="7.2" y="70.6" width="0.8" height="1.1" fill="#d4d4d4"/><rect x="8.8" y="70.6" width="0.8" height="1.1" fill="#d4d4d4"/><rect x="9.6" y="70.6" width="3.2" height="1.1" fill="#d4d4d4"/><rect x="13.6" y="70.6" width="0.8" height="1.1" fill="#d4d4d4"/><rect x="15.2" y="70.6" width="0.8" height="1.1" fill="#d4d4d4"/><rect x="16.0" y="70.6" width="0.8" height="1.1" fill="#d4d4d4"/><rect x="16.8" y="70.6" width="0.8" height="1.1" fill="#d4d4d4"/><rect x="17.6" y="70.6" width="0.8" height="1.1" fill="#d4d4d4"/><rect x="18.4" y="70.6" width="0.8" height="1.1" fill="#d4d4d4"/><rect x="19.2" y="70.6" width="3.2" height="1.1" fill="#d4d4d4"/><rect x="23.2" y="70.6" width="0.8" height="1.1" fill="#d4d4d4"/><rect x="24.0" y="70.6" width="0.8" height="1.1" fill="#d4d4d4"/><rect x="25.6" y="70.6" width="1.6" height="1.1" fill="#b5cea8"/><rect x="27.2" y="70.6" width="0.8" height="1.1" fill="#d4d4d4"/><rect x="28.8" y="70.6" width="0.8" height="1.1" fill="#d4d4d4"/><rect x="30.4" y="70.6" width="0.8" height="1.1" fill="#d4d4d4"/><rect x="31.2" y="70.6" width="3.2" height="1.1" fill="#d4d4d4"/><rect x="35.2" y="70.6" width="0.8" height="1.1" fill="#d4d4d4"/><rect x="36.0" y="70.6" width="0.8" height="1.1" fill="#d4d4d4"/><rect x="37.6" y="70.6" width="1.6" height="1.1" fill="#b5cea8"/><rect x="39.2" y="70.6" width="0.8" height="1.1" fill="#d4d4d4"/><rect x="40.0" y="70.6" width="0.8" height="1.1" fill="#d4d4d4"/><rect x="41.6" y="70.6" width="0.8" height="1.1" fill="#d4d4d4"/><rect x="42.4" y="70.6" width="0.8" height="1.1" fill="#d4d4d4"/><rect x="44.0" y="70.6" width="0.8" height="1.1" fill="#b5cea8"/><rect x="44.8" y="70.6" width="0.8" height="1.1" fill="#d4d4d4"/><rect x="46.4" y="70.6" width="0.8" height="1.1" fill="#d4d4d4"/><rect x="48.0" y="70.6" width="0.8" height="1.1" fill="#d4d4d4"/><rect x="48.8" y="70.6" width="0.8" height="1.1" fill="#d4d4d4"/><rect x="49.6" y="70.6" width="5.6" height="1.1" fill="#4ec9b0"/><rect x="55.2" y="70.6" width="0.8" height="1.1" fill="#d4d4d4"/><rect x="56.0" y="70.6" width="8.8" height="1.1" fill="#d4d4d4"/><rect x="64.8" y="70.6" width="0.8" height="1.1" fill="#d4d4d4"/><rect x="65.6" y="70.6" width="4.0" height="1.1" fill="#d4d4d4"/><rect x="3.2" y="72.2" width="3.2" height="1.1" fill="#d4d4d4"/><rect x="7.2" y="72.2" width="0.8" height="1.1" fill="#d4d4d4"/><rect x="8.8" y="72.2" width="0.8" height="1.1" fill="#d4d4d4"/><rect x="9.6" y="72.2" width="3.2" height="1.1" fill="#d4d4d4"/><rect x="13.6" y="72.2" width="0.8" height="1.1" fill="#d4d4d4"/><rect x="15.2" y="72.2" width="0.8" height="1.1" fill="#b5cea8"/><rect x="16.8" y="72.2" width="0.8" height="1.1" fill="#d4d4d4"/><rect x="18.4" y="72.2" width="0.8" height="1.1" fill="#b5cea8"/><rect x="20.0" y="72.2" width="0.8" height="1.1" fill="#d4d4d4"/><rect x="21.6" y="72.2" width="3.2" height="1.1" fill="#d4d4d4"/><rect x="24.8" y="72.2" width="0.8" height="1.1" fill="#d4d4d4"/><rect x="25.6" y="72.2" width="0.8" height="1.1" fill="#d4d4d4"/><rect x="3.2" y="73.8" width="3.2" height="1.1" fill="#d4d4d4"/><rect x="7.2" y="73.8" width="0.8" height="1.1" fill="#d4d4d4"/><rect x="8.8" y="73.8" width="0.8" height="1.1" fill="#d4d4d4"/><rect x="9.6" y="73.8" width="3.2" height="1.1" fill="#d4d4d4"/><rect x="13.6" y="73.8" width="0.8" height="1.1" fill="#d4d4d4"/><rect x="15.2" y="73.8" width="7.2" height="1.1" fill="#b5cea8"/><rect x="23.2" y="73.8" width="0.8" height="1.1" fill="#d4d4d4"/><rect x="24.8" y="73.8" width="7.2" height="1.1" fill="#b5cea8"/><rect x="32.8" y="73.8" width="0.8" height="1.1" fill="#d4d4d4"/><rect x="34.4" y="73.8" width="3.2" height="1.1" fill="#d4d4d4"/><rect x="37.6" y="73.8" width="0.8" height="1.1" fill="#d4d4d4"/><rect x="38.4" y="73.8" width="0.8" height="1.1" fill="#d4d4d4"/><rect x="3.2" y="77.0" width="4.8" height="1.1" fill="#c586c0"/><rect x="8.8" y="77.0" width="0.8" height="1.1" fill="#d4d4d4"/><rect x="9.6" y="77.0" width="4.0" height="1.1" fill="#569cd6"/><rect x="13.6" y="77.0" width="0.8" height="1.1" fill="#d4d4d4"/><rect x="14.4" y="77.0" width="0.8" height="1.1" fill="#d4d4d4"/><rect x="15.2" y="77.0" width="3.2" height="1.1" fill="#d4d4d4"/><rect x="18.4" y="77.0" width="0.8" height="1.1" fill="#d4d4d4"/><rect x="19.2" y="77.0" width="0.8" height="1.1" fill="#d4d4d4"/><rect x="20.0" y="77.0" width="1.6" height="1.1" fill="#b5cea8"/><rect x="21.6" y="77.0" width="0.8" height="1.1" fill="#d4d4d4"/><rect x="23.2" y="77.0" width="0.8" height="1.1" fill="#d4d4d4"/><rect x="24.8" y="77.0" width="4.8" height="1.1" fill="#b5cea8"/><rect x="29.6" y="77.0" width="0.8" height="1.1" fill="#d4d4d4"/><rect x="0.0" y="78.6" width="0.8" height="1.1" fill="#d4d4d4"/><rect x="0.0" y="81.8" width="7.2" height="1.1" fill="#6a9955"/><rect x="8.0" y="81.8" width="2.4" height="1.1" fill="#6a9955"/><rect x="11.2" y="81.8" width="6.4" height="1.1" fill="#6a9955"/><rect x="0.0" y="83.4" width="4.0" height="1.1" fill="#569cd6"/><rect x="4.8" y="83.4" width="4.8" height="1.1" fill="#4ec9b0"/><rect x="9.6" y="83.4" width="0.8" height="1.1" fill="#d4d4d4"/><rect x="10.4" y="83.4" width="0.8" height="1.1" fill="#d4d4d4"/><rect x="11.2" y="83.4" width="13.6" height="1.1" fill="#dcdcaa"/><rect x="24.8" y="83.4" width="0.8" height="1.1" fill="#d4d4d4"/><rect x="26.4" y="83.4" width="3.2" height="1.1" fill="#569cd6"/><rect x="30.4" y="83.4" width="0.8" height="1.1" fill="#d4d4d4"/><rect x="0.0" y="85.0" width="0.8" height="1.1" fill="#d4d4d4"/><rect x="3.2" y="86.6" width="1.6" height="1.1" fill="#6a9955"/><rect x="5.6" y="86.6" width="5.6" height="1.1" fill="#6a9955"/><rect x="12.0" y="86.6" width="6.4" height="1.1" fill="#6a9955"/><rect x="19.2" y="86.6" width="1.6" height="1.1" fill="#6a9955"/><rect x="21.6" y="86.6" width="1.6" height="1.1" fill="#6a9955"/><rect x="24.0" y="86.6" width="1.6" height="1.1" fill="#6a9955"/><rect x="26.4" y="86.6" width="6.4" height="1.1" fill="#6a9955"/><rect x="33.6" y="86.6" width="1.6" height="1.1" fill="#6a9955"/><rect x="36.0" y="86.6" width="2.4" height="1.1" fill="#6a9955"/><rect x="39.2" y="86.6" width="5.6" height="1.1" fill="#6a9955"/><rect x="45.6" y="86.6" width="1.6" height="1.1" fill="#6a9955"/><rect x="48.0" y="86.6" width="4.0" height="1.1" fill="#6a9955"/><rect x="52.8" y="86.6" width="4.8" height="1.1" fill="#6a9955"/><rect x="3.2" y="88.2" width="5.6" height="1.1" fill="#4ec9b0"/><rect x="9.6" y="88.2" width="4.0" height="1.1" fill="#d4d4d4"/><rect x="14.4" y="88.2" width="0.8" height="1.1" fill="#d4d4d4"/><rect x="16.0" y="88.2" width="0.8" height="1.1" fill="#d4d4d4"/><rect x="16.8" y="88.2" width="0.8" height="1.1" fill="#d4d4d4"/><rect x="17.6" y="88.2" width="6.4" height="1.1" fill="#4ec9b0"/><rect x="24.0" y="88.2" width="0.8" height="1.1" fill="#d4d4d4"/><rect x="24.8" y="88.2" width="9.6" height="1.1" fill="#dcdcaa"/><rect x="34.4" y="88.2" width="0.8" height="1.1" fill="#d4d4d4"/><rect x="35.2" y="88.2" width="18.4" height="1.1" fill="#d4d4d4"/><rect x="53.6" y="88.2" width="0.8" height="1.1" fill="#d4d4d4"/><rect x="55.2" y="88.2" width="0.8" height="1.1" fill="#d4d4d4"/><rect x="56.0" y="88.2" width="0.8" height="1.1" fill="#d4d4d4"/><rect x="57.6" y="88.2" width="1.6" height="1.1" fill="#b5cea8"/><rect x="59.2" y="88.2" width="0.8" height="1.1" fill="#d4d4d4"/><rect x="60.8" y="88.2" width="0.8" height="1.1" fill="#d4d4d4"/><rect x="62.4" y="88.2" width="0.8" height="1.1" fill="#d4d4d4"/><rect x="63.2" y="88.2" width="0.8" height="1.1" fill="#d4d4d4"/><rect x="64.0" y="88.2" width="5.6" height="1.1" fill="#4ec9b0"/><rect x="3.2" y="89.8" width="5.6" height="1.1" fill="#4ec9b0"/><rect x="9.6" y="89.8" width="3.2" height="1.1" fill="#d4d4d4"/><rect x="12.8" y="89.8" width="0.8" height="1.1" fill="#d4d4d4"/><rect x="14.4" y="89.8" width="3.2" height="1.1" fill="#d4d4d4"/><rect x="17.6" y="89.8" width="0.8" height="1.1" fill="#d4d4d4"/><rect x="19.2" y="89.8" width="4.0" height="1.1" fill="#d4d4d4"/><rect x="23.2" y="89.8" width="0.8" height="1.1" fill="#d4d4d4"/><rect x="3.2" y="91.4" width="3.2" height="1.1" fill="#d4d4d4"/><rect x="7.2" y="91.4" width="0.8" height="1.1" fill="#d4d4d4"/><rect x="8.8" y="91.4" width="0.8" height="1.1" fill="#d4d4d4"/><rect x="9.6" y="91.4" width="0.8" height="1.1" fill="#d4d4d4"/><rect x="10.4" y="91.4" width="5.6" height="1.1" fill="#4ec9b0"/><rect x="16.0" y="91.4" width="0.8" height="1.1" fill="#d4d4d4"/><rect x="16.8" y="91.4" width="4.8" height="1.1" fill="#d4d4d4"/><rect x="21.6" y="91.4" width="0.8" height="1.1" fill="#d4d4d4"/><rect x="23.2" y="91.4" width="0.8" height="1.1" fill="#d4d4d4"/><rect x="24.8" y="91.4" width="4.8" height="1.1" fill="#b5cea8"/><rect x="29.6" y="91.4" width="0.8" height="1.1" fill="#d4d4d4"/><rect x="3.2" y="93.0" width="3.2" height="1.1" fill="#d4d4d4"/><rect x="7.2" y="93.0" width="0.8" height="1.1" fill="#d4d4d4"/><rect x="8.8" y="93.0" width="3.2" height="1.1" fill="#d4d4d4"/><rect x="12.8" y="93.0" width="0.8" height="1.1" fill="#d4d4d4"/><rect x="14.4" y="93.0" width="3.2" height="1.1" fill="#d4d4d4"/><rect x="18.4" y="93.0" width="0.8" height="1.1" fill="#d4d4d4"/><rect x="20.0" y="93.0" width="0.8" height="1.1" fill="#d4d4d4"/><rect x="20.8" y="93.0" width="5.6" height="1.1" fill="#4ec9b0"/><rect x="26.4" y="93.0" width="0.8" height="1.1" fill="#d4d4d4"/><rect x="27.2" y="93.0" width="8.8" height="1.1" fill="#d4d4d4"/><rect x="36.0" y="93.0" width="0.8" height="1.1" fill="#d4d4d4"/><rect x="36.8" y="93.0" width="4.8" height="1.1" fill="#d4d4d4"/><rect x="41.6" y="93.0" width="0.8" height="1.1" fill="#d4d4d4"/><rect x="3.2" y="94.6" width="4.8" height="1.1" fill="#c586c0"/><rect x="8.8" y="94.6" width="0.8" height="1.1" fill="#d4d4d4"/><rect x="9.6" y="94.6" width="4.0" height="1.1" fill="#569cd6"/><rect x="13.6" y="94.6" width="0.8" height="1.1" fill="#d4d4d4"/><rect x="14.4" y="94.6" width="4.0" height="1.1" fill="#d4d4d4"/><rect x="18.4" y="94.6" width="0.8" height="1.1" fill="#d4d4d4"/><rect x="0.0" y="96.2" width="0.8" height="1.1" fill="#d4d4d4"/><rect x="0.0" y="99.4" width="4.0" height="1.1" fill="#6a9955"/><rect x="4.8" y="99.4" width="2.4" height="1.1" fill="#6a9955"/><rect x="8.0" y="99.4" width="5.6" height="1.1" fill="#6a9955"/><rect x="14.4" y="99.4" width="3.2" height="1.1" fill="#6a9955"/><rect x="0.0" y="101.0" width="3.2" height="1.1" fill="#569cd6"/><rect x="4.0" y="101.0" width="4.8" height="1.1" fill="#4ec9b0"/><rect x="8.8" y="101.0" width="0.8" height="1.1" fill="#d4d4d4"/><rect x="9.6" y="101.0" width="0.8" height="1.1" fill="#d4d4d4"/><rect x="10.4" y="101.0" width="11.2" height="1.1" fill="#dcdcaa"/><rect x="21.6" y="101.0" width="0.8" height="1.1" fill="#d4d4d4"/><rect x="23.2" y="101.0" width="3.2" height="1.1" fill="#569cd6"/><rect x="27.2" y="101.0" width="0.8" height="1.1" fill="#d4d4d4"/><rect x="0.0" y="102.6" width="0.8" height="1.1" fill="#d4d4d4"/><rect x="3.2" y="104.2" width="5.6" height="1.1" fill="#4ec9b0"/><rect x="9.6" y="104.2" width="8.8" height="1.1" fill="#d4d4d4"/><rect x="19.2" y="104.2" width="0.8" height="1.1" fill="#d4d4d4"/><rect x="20.8" y="104.2" width="9.6" height="1.1" fill="#dcdcaa"/><rect x="30.4" y="104.2" width="0.8" height="1.1" fill="#d4d4d4"/><rect x="31.2" y="104.2" width="13.6" height="1.1" fill="#d4d4d4"/><rect x="44.8" y="104.2" width="0.8" height="1.1" fill="#d4d4d4"/><rect x="45.6" y="104.2" width="0.8" height="1.1" fill="#d4d4d4"/><rect x="3.2" y="105.8" width="10.4" height="1.1" fill="#dcdcaa"/><rect x="13.6" y="105.8" width="0.8" height="1.1" fill="#d4d4d4"/><rect x="14.4" y="105.8" width="13.6" height="1.1" fill="#d4d4d4"/><rect x="28.0" y="105.8" width="0.8" height="1.1" fill="#d4d4d4"/><rect x="29.6" y="105.8" width="8.8" height="1.1" fill="#d4d4d4"/><rect x="38.4" y="105.8" width="0.8" height="1.1" fill="#d4d4d4"/><rect x="39.2" y="105.8" width="0.8" height="1.1" fill="#d4d4d4"/><rect x="0.0" y="107.4" width="0.8" height="1.1" fill="#d4d4d4"/><rect x="0.0" y="110.6" width="4.0" height="1.1" fill="#6a9955"/><rect x="4.8" y="110.6" width="2.4" height="1.1" fill="#6a9955"/><rect x="8.0" y="110.6" width="8.8" height="1.1" fill="#6a9955"/><rect x="17.6" y="110.6" width="8.0" height="1.1" fill="#6a9955"/><rect x="26.4" y="110.6" width="4.0" height="1.1" fill="#6a9955"/><rect x="0.0" y="112.2" width="3.2" height="1.1" fill="#569cd6"/><rect x="4.0" y="112.2" width="4.8" height="1.1" fill="#4ec9b0"/><rect x="8.8" y="112.2" width="0.8" height="1.1" fill="#d4d4d4"/><rect x="9.6" y="112.2" width="0.8" height="1.1" fill="#d4d4d4"/><rect x="10.4" y="112.2" width="13.6" height="1.1" fill="#dcdcaa"/><rect x="24.0" y="112.2" width="0.8" height="1.1" fill="#d4d4d4"/><rect x="25.6" y="112.2" width="3.2" height="1.1" fill="#569cd6"/><rect x="29.6" y="112.2" width="0.8" height="1.1" fill="#d4d4d4"/><rect x="0.0" y="113.8" width="0.8" height="1.1" fill="#d4d4d4"/><rect x="3.2" y="115.4" width="12.8" height="1.1" fill="#d4d4d4"/><rect x="16.8" y="115.4" width="0.8" height="1.1" fill="#d4d4d4"/><rect x="18.4" y="115.4" width="12.8" height="1.1" fill="#dcdcaa"/><rect x="31.2" y="115.4" width="0.8" height="1.1" fill="#d4d4d4"/><rect x="32.0" y="115.4" width="12.8" height="1.1" fill="#d4d4d4"/><rect x="44.8" y="115.4" width="0.8" height="1.1" fill="#d4d4d4"/><rect x="45.6" y="115.4" width="0.8" height="1.1" fill="#d4d4d4"/><rect x="3.2" y="117.0" width="5.6" height="1.1" fill="#4ec9b0"/><rect x="9.6" y="117.0" width="9.6" height="1.1" fill="#d4d4d4"/><rect x="20.0" y="117.0" width="0.8" height="1.1" fill="#d4d4d4"/><rect x="21.6" y="117.0" width="5.6" height="1.1" fill="#dcdcaa"/><rect x="27.2" y="117.0" width="0.8" height="1.1" fill="#d4d4d4"/><rect x="28.0" y="117.0" width="0.8" height="1.1" fill="#d4d4d4"/><rect x="28.8" y="117.0" width="0.8" height="1.1" fill="#d4d4d4"/><rect x="3.2" y="118.6" width="5.6" height="1.1" fill="#dcdcaa"/><rect x="8.8" y="118.6" width="0.8" height="1.1" fill="#d4d4d4"/><rect x="9.6" y="118.6" width="8.0" height="1.1" fill="#d4d4d4"/><rect x="17.6" y="118.6" width="0.8" height="1.1" fill="#d4d4d4"/><rect x="18.4" y="118.6" width="0.8" height="1.1" fill="#d4d4d4"/><rect x="3.2" y="120.2" width="10.4" height="1.1" fill="#dcdcaa"/><rect x="13.6" y="120.2" width="0.8" height="1.1" fill="#d4d4d4"/><rect x="14.4" y="120.2" width="16.0" height="1.1" fill="#d4d4d4"/><rect x="30.4" y="120.2" width="0.8" height="1.1" fill="#d4d4d4"/><rect x="32.0" y="120.2" width="8.8" height="1.1" fill="#d4d4d4"/><rect x="40.8" y="120.2" width="0.8" height="1.1" fill="#d4d4d4"/><rect x="41.6" y="120.2" width="0.8" height="1.1" fill="#d4d4d4"/><rect x="3.2" y="121.8" width="5.6" height="1.1" fill="#dcdcaa"/><rect x="8.8" y="121.8" width="0.8" height="1.1" fill="#d4d4d4"/><rect x="9.6" y="121.8" width="9.6" height="1.1" fill="#d4d4d4"/><rect x="19.2" y="121.8" width="0.8" height="1.1" fill="#d4d4d4"/><rect x="20.0" y="121.8" width="0.8" height="1.1" fill="#d4d4d4"/><rect x="0.0" y="123.4" width="0.8" height="1.1" fill="#d4d4d4"/><rect x="0.0" y="126.6" width="4.0" height="1.1" fill="#6a9955"/><rect x="4.8" y="126.6" width="2.4" height="1.1" fill="#6a9955"/><rect x="8.0" y="126.6" width="6.4" height="1.1" fill="#6a9955"/><rect x="15.2" y="126.6" width="8.0" height="1.1" fill="#6a9955"/><rect x="24.0" y="126.6" width="4.0" height="1.1" fill="#6a9955"/><rect x="0.0" y="128.2" width="3.2" height="1.1" fill="#569cd6"/><rect x="4.0" y="128.2" width="4.8" height="1.1" fill="#4ec9b0"/><rect x="8.8" y="128.2" width="0.8" height="1.1" fill="#d4d4d4"/><rect x="9.6" y="128.2" width="0.8" height="1.1" fill="#d4d4d4"/><rect x="10.4" y="128.2" width="16.8" height="1.1" fill="#dcdcaa"/><rect x="27.2" y="128.2" width="0.8" height="1.1" fill="#d4d4d4"/><rect x="28.8" y="128.2" width="3.2" height="1.1" fill="#569cd6"/><rect x="32.8" y="128.2" width="0.8" height="1.1" fill="#d4d4d4"/><rect x="0.0" y="129.8" width="0.8" height="1.1" fill="#d4d4d4"/><rect x="3.2" y="131.4" width="12.8" height="1.1" fill="#d4d4d4"/><rect x="16.8" y="131.4" width="0.8" height="1.1" fill="#d4d4d4"/><rect x="18.4" y="131.4" width="12.8" height="1.1" fill="#dcdcaa"/><rect x="31.2" y="131.4" width="0.8" height="1.1" fill="#d4d4d4"/><rect x="32.0" y="131.4" width="12.8" height="1.1" fill="#d4d4d4"/><rect x="44.8" y="131.4" width="0.8" height="1.1" fill="#d4d4d4"/><rect x="45.6" y="131.4" width="0.8" height="1.1" fill="#d4d4d4"/><rect x="3.2" y="133.0" width="5.6" height="1.1" fill="#4ec9b0"/><rect x="9.6" y="133.0" width="9.6" height="1.1" fill="#d4d4d4"/><rect x="20.0" y="133.0" width="0.8" height="1.1" fill="#d4d4d4"/><rect x="21.6" y="133.0" width="5.6" height="1.1" fill="#dcdcaa"/><rect x="27.2" y="133.0" width="0.8" height="1.1" fill="#d4d4d4"/><rect x="28.0" y="133.0" width="0.8" height="1.1" fill="#d4d4d4"/><rect x="28.8" y="133.0" width="0.8" height="1.1" fill="#d4d4d4"/><rect x="3.2" y="134.6" width="5.6" height="1.1" fill="#dcdcaa"/><rect x="8.8" y="134.6" width="0.8" height="1.1" fill="#d4d4d4"/><rect x="9.6" y="134.6" width="8.0" height="1.1" fill="#d4d4d4"/><rect x="17.6" y="134.6" width="0.8" height="1.1" fill="#d4d4d4"/><rect x="18.4" y="134.6" width="0.8" height="1.1" fill="#d4d4d4"/><rect x="3.2" y="136.2" width="5.6" height="1.1" fill="#4ec9b0"/><rect x="9.6" y="136.2" width="8.8" height="1.1" fill="#d4d4d4"/><rect x="19.2" y="136.2" width="0.8" height="1.1" fill="#d4d4d4"/><rect x="20.8" y="136.2" width="9.6" height="1.1" fill="#dcdcaa"/><rect x="30.4" y="136.2" width="0.8" height="1.1" fill="#d4d4d4"/><rect x="31.2" y="136.2" width="16.0" height="1.1" fill="#d4d4d4"/><rect x="47.2" y="136.2" width="0.8" height="1.1" fill="#d4d4d4"/><rect x="48.0" y="136.2" width="0.8" height="1.1" fill="#d4d4d4"/><rect x="3.2" y="137.8" width="8.8" height="1.1" fill="#d4d4d4"/><rect x="12.8" y="137.8" width="0.8" height="1.1" fill="#d4d4d4"/><rect x="13.6" y="137.8" width="0.8" height="1.1" fill="#d4d4d4"/><rect x="15.2" y="137.8" width="0.8" height="1.1" fill="#d4d4d4"/><rect x="16.0" y="137.8" width="0.8" height="1.1" fill="#d4d4d4"/><rect x="17.6" y="137.8" width="0.8" height="1.1" fill="#d4d4d4"/><rect x="18.4" y="137.8" width="0.8" height="1.1" fill="#b5cea8"/><rect x="19.2" y="137.8" width="0.8" height="1.1" fill="#d4d4d4"/><rect x="20.0" y="137.8" width="0.8" height="1.1" fill="#d4d4d4"/><rect x="20.8" y="137.8" width="0.8" height="1.1" fill="#b5cea8"/><rect x="21.6" y="137.8" width="0.8" height="1.1" fill="#d4d4d4"/><rect x="23.2" y="137.8" width="0.8" height="1.1" fill="#d4d4d4"/><rect x="24.8" y="137.8" width="0.8" height="1.1" fill="#d4d4d4"/><rect x="25.6" y="137.8" width="0.8" height="1.1" fill="#b5cea8"/><rect x="26.4" y="137.8" width="0.8" height="1.1" fill="#d4d4d4"/><rect x="27.2" y="137.8" width="0.8" height="1.1" fill="#d4d4d4"/><rect x="28.0" y="137.8" width="0.8" height="1.1" fill="#b5cea8"/><rect x="28.8" y="137.8" width="0.8" height="1.1" fill="#d4d4d4"/><rect x="30.4" y="137.8" width="0.8" height="1.1" fill="#d4d4d4"/><rect x="32.0" y="137.8" width="0.8" height="1.1" fill="#d4d4d4"/><rect x="32.8" y="137.8" width="0.8" height="1.1" fill="#b5cea8"/><rect x="33.6" y="137.8" width="0.8" height="1.1" fill="#d4d4d4"/><rect x="34.4" y="137.8" width="0.8" height="1.1" fill="#d4d4d4"/><rect x="35.2" y="137.8" width="0.8" height="1.1" fill="#b5cea8"/><rect x="36.0" y="137.8" width="0.8" height="1.1" fill="#d4d4d4"/><rect x="37.6" y="137.8" width="0.8" height="1.1" fill="#d4d4d4"/><rect x="38.4" y="137.8" width="0.8" height="1.1" fill="#d4d4d4"/><rect x="3.2" y="139.4" width="8.8" height="1.1" fill="#d4d4d4"/><rect x="12.8" y="139.4" width="0.8" height="1.1" fill="#d4d4d4"/><rect x="13.6" y="139.4" width="0.8" height="1.1" fill="#d4d4d4"/><rect x="15.2" y="139.4" width="12.8" height="1.1" fill="#d4d4d4"/><rect x="28.8" y="139.4" width="0.8" height="1.1" fill="#d4d4d4"/><rect x="29.6" y="139.4" width="0.8" height="1.1" fill="#d4d4d4"/><rect x="31.2" y="139.4" width="0.8" height="1.1" fill="#b5cea8"/><rect x="32.0" y="139.4" width="0.8" height="1.1" fill="#d4d4d4"/><rect x="3.2" y="141.0" width="10.4" height="1.1" fill="#dcdcaa"/><rect x="13.6" y="141.0" width="0.8" height="1.1" fill="#d4d4d4"/><rect x="14.4" y="141.0" width="16.0" height="1.1" fill="#d4d4d4"/><rect x="30.4" y="141.0" width="0.8" height="1.1" fill="#d4d4d4"/><rect x="32.0" y="141.0" width="8.8" height="1.1" fill="#d4d4d4"/><rect x="40.8" y="141.0" width="0.8" height="1.1" fill="#d4d4d4"/><rect x="41.6" y="141.0" width="0.8" height="1.1" fill="#d4d4d4"/><rect x="3.2" y="142.6" width="5.6" height="1.1" fill="#dcdcaa"/><rect x="8.8" y="142.6" width="0.8" height="1.1" fill="#d4d4d4"/><rect x="9.6" y="142.6" width="9.6" height="1.1" fill="#d4d4d4"/><rect x="19.2" y="142.6" width="0.8" height="1.1" fill="#d4d4d4"/><rect x="20.0" y="142.6" width="0.8" height="1.1" fill="#d4d4d4"/><rect x="0.0" y="144.2" width="0.8" height="1.1" fill="#d4d4d4"/><rect x="0.0" y="145.8" width="64.0" height="1.1" fill="#6a9955"/><rect x="0.0" y="147.4" width="1.6" height="1.1" fill="#6a9955"/><rect x="0.0" y="149.0" width="1.6" height="1.1" fill="#6a9955"/><rect x="3.2" y="149.0" width="8.8" height="1.1" fill="#6a9955"/><rect x="12.8" y="149.0" width="5.6" height="1.1" fill="#6a9955"/><rect x="0.0" y="150.6" width="1.6" height="1.1" fill="#6a9955"/><rect x="0.0" y="152.2" width="64.0" height="1.1" fill="#6a9955"/><rect x="0.0" y="155.4" width="4.0" height="1.1" fill="#569cd6"/><rect x="4.8" y="155.4" width="4.8" height="1.1" fill="#4ec9b0"/><rect x="9.6" y="155.4" width="0.8" height="1.1" fill="#d4d4d4"/><rect x="10.4" y="155.4" width="0.8" height="1.1" fill="#d4d4d4"/><rect x="11.2" y="155.4" width="7.2" height="1.1" fill="#dcdcaa"/><rect x="18.4" y="155.4" width="0.8" height="1.1" fill="#d4d4d4"/><rect x="20.0" y="155.4" width="3.2" height="1.1" fill="#569cd6"/><rect x="24.0" y="155.4" width="0.8" height="1.1" fill="#d4d4d4"/><rect x="0.0" y="157.0" width="0.8" height="1.1" fill="#d4d4d4"/><rect x="3.2" y="158.6" width="1.6" height="1.1" fill="#6a9955"/><rect x="5.6" y="158.6" width="5.6" height="1.1" fill="#6a9955"/><rect x="12.0" y="158.6" width="8.8" height="1.1" fill="#6a9955"/><rect x="21.6" y="158.6" width="1.6" height="1.1" fill="#6a9955"/><rect x="24.0" y="158.6" width="4.0" height="1.1" fill="#6a9955"/><rect x="28.8" y="158.6" width="8.0" height="1.1" fill="#6a9955"/><rect x="37.6" y="158.6" width="1.6" height="1.1" fill="#6a9955"/><rect x="40.0" y="158.6" width="3.2" height="1.1" fill="#6a9955"/><rect x="44.0" y="158.6" width="4.0" height="1.1" fill="#6a9955"/><rect x="48.8" y="158.6" width="4.8" height="1.1" fill="#6a9955"/><rect x="54.4" y="158.6" width="4.0" height="1.1" fill="#6a9955"/><rect x="59.2" y="158.6" width="1.6" height="1.1" fill="#6a9955"/><rect x="61.6" y="158.6" width="4.8" height="1.1" fill="#6a9955"/><rect x="67.2" y="158.6" width="2.4" height="1.1" fill="#6a9955"/><rect x="3.2" y="160.2" width="1.6" height="1.1" fill="#6a9955"/><rect x="5.6" y="160.2" width="4.8" height="1.1" fill="#6a9955"/><rect x="11.2" y="160.2" width="5.6" height="1.1" fill="#6a9955"/><rect x="17.6" y="160.2" width="3.2" height="1.1" fill="#6a9955"/><rect x="21.6" y="160.2" width="8.8" height="1.1" fill="#6a9955"/><rect x="31.2" y="160.2" width="1.6" height="1.1" fill="#6a9955"/><rect x="33.6" y="160.2" width="4.8" height="1.1" fill="#6a9955"/><rect x="39.2" y="160.2" width="4.0" height="1.1" fill="#6a9955"/><rect x="3.2" y="161.8" width="4.0" height="1.1" fill="#6a9955"/><rect x="8.0" y="161.8" width="2.4" height="1.1" fill="#6a9955"/><rect x="11.2" y="161.8" width="5.6" height="1.1" fill="#6a9955"/><rect x="17.6" y="161.8" width="6.4" height="1.1" fill="#6a9955"/><rect x="3.2" y="163.4" width="5.6" height="1.1" fill="#4ec9b0"/><rect x="9.6" y="163.4" width="4.0" height="1.1" fill="#d4d4d4"/><rect x="14.4" y="163.4" width="0.8" height="1.1" fill="#d4d4d4"/><rect x="16.0" y="163.4" width="0.8" height="1.1" fill="#d4d4d4"/><rect x="16.8" y="163.4" width="0.8" height="1.1" fill="#d4d4d4"/><rect x="17.6" y="163.4" width="6.4" height="1.1" fill="#4ec9b0"/><rect x="24.0" y="163.4" width="0.8" height="1.1" fill="#d4d4d4"/><rect x="24.8" y="163.4" width="9.6" height="1.1" fill="#dcdcaa"/><rect x="34.4" y="163.4" width="0.8" height="1.1" fill="#d4d4d4"/><rect x="35.2" y="163.4" width="20.8" height="1.1" fill="#d4d4d4"/><rect x="56.0" y="163.4" width="0.8" height="1.1" fill="#d4d4d4"/><rect x="57.6" y="163.4" width="0.8" height="1.1" fill="#d4d4d4"/><rect x="58.4" y="163.4" width="0.8" height="1.1" fill="#d4d4d4"/><rect x="60.0" y="163.4" width="1.6" height="1.1" fill="#b5cea8"/><rect x="61.6" y="163.4" width="0.8" height="1.1" fill="#d4d4d4"/><rect x="63.2" y="163.4" width="0.8" height="1.1" fill="#d4d4d4"/><rect x="64.8" y="163.4" width="0.8" height="1.1" fill="#d4d4d4"/><rect x="65.6" y="163.4" width="0.8" height="1.1" fill="#d4d4d4"/><rect x="66.4" y="163.4" width="3.2" height="1.1" fill="#4ec9b0"/><rect x="3.2" y="166.6" width="3.2" height="1.1" fill="#6a9955"/><rect x="7.2" y="166.6" width="8.0" height="1.1" fill="#6a9955"/><rect x="16.0" y="166.6" width="7.2" height="1.1" fill="#6a9955"/><rect x="3.2" y="168.2" width="5.6" height="1.1" fill="#4ec9b0"/><rect x="9.6" y="168.2" width="3.2" height="1.1" fill="#d4d4d4"/><rect x="12.8" y="168.2" width="0.8" height="1.1" fill="#d4d4d4"/><rect x="14.4" y="168.2" width="3.2" height="1.1" fill="#d4d4d4"/><rect x="17.6" y="168.2" width="0.8" height="1.1" fill="#d4d4d4"/><rect x="3.2" y="169.8" width="3.2" height="1.1" fill="#d4d4d4"/><rect x="7.2" y="169.8" width="0.8" height="1.1" fill="#d4d4d4"/><rect x="8.8" y="169.8" width="0.8" height="1.1" fill="#d4d4d4"/><rect x="9.6" y="169.8" width="0.8" height="1.1" fill="#d4d4d4"/><rect x="10.4" y="169.8" width="0.8" height="1.1" fill="#d4d4d4"/><rect x="11.2" y="169.8" width="0.8" height="1.1" fill="#d4d4d4"/><rect x="12.0" y="169.8" width="4.0" height="1.1" fill="#d4d4d4"/><rect x="16.0" y="169.8" width="0.8" height="1.1" fill="#d4d4d4"/><rect x="16.8" y="169.8" width="0.8" height="1.1" fill="#d4d4d4"/><rect x="17.6" y="169.8" width="0.8" height="1.1" fill="#b5cea8"/><rect x="18.4" y="169.8" width="0.8" height="1.1" fill="#d4d4d4"/><rect x="20.0" y="169.8" width="0.8" height="1.1" fill="#d4d4d4"/><rect x="21.6" y="169.8" width="0.8" height="1.1" fill="#d4d4d4"/><rect x="22.4" y="169.8" width="0.8" height="1.1" fill="#d4d4d4"/><rect x="23.2" y="169.8" width="5.6" height="1.1" fill="#4ec9b0"/><rect x="28.8" y="169.8" width="0.8" height="1.1" fill="#d4d4d4"/><rect x="29.6" y="169.8" width="8.8" height="1.1" fill="#d4d4d4"/><rect x="38.4" y="169.8" width="0.8" height="1.1" fill="#d4d4d4"/><rect x="39.2" y="169.8" width="4.8" height="1.1" fill="#d4d4d4"/><rect x="44.0" y="169.8" width="0.8" height="1.1" fill="#d4d4d4"/><rect x="44.8" y="169.8" width="0.8" height="1.1" fill="#d4d4d4"/><rect x="45.6" y="169.8" width="0.8" height="1.1" fill="#b5cea8"/><rect x="46.4" y="169.8" width="0.8" height="1.1" fill="#d4d4d4"/><rect x="47.2" y="169.8" width="0.8" height="1.1" fill="#d4d4d4"/><rect x="48.0" y="169.8" width="0.8" height="1.1" fill="#d4d4d4"/><rect x="49.6" y="169.8" width="0.8" height="1.1" fill="#d4d4d4"/><rect x="51.2" y="169.8" width="0.8" height="1.1" fill="#d4d4d4"/><rect x="52.0" y="169.8" width="0.8" height="1.1" fill="#d4d4d4"/><rect x="52.8" y="169.8" width="5.6" height="1.1" fill="#4ec9b0"/><rect x="58.4" y="169.8" width="0.8" height="1.1" fill="#d4d4d4"/><rect x="59.2" y="169.8" width="8.8" height="1.1" fill="#d4d4d4"/><rect x="68.0" y="169.8" width="0.8" height="1.1" fill="#d4d4d4"/><rect x="68.8" y="169.8" width="0.8" height="1.1" fill="#d4d4d4"/><rect x="3.2" y="171.4" width="3.2" height="1.1" fill="#d4d4d4"/><rect x="7.2" y="171.4" width="0.8" height="1.1" fill="#d4d4d4"/><rect x="8.8" y="171.4" width="0.8" height="1.1" fill="#d4d4d4"/><rect x="9.6" y="171.4" width="0.8" height="1.1" fill="#d4d4d4"/><rect x="10.4" y="171.4" width="0.8" height="1.1" fill="#d4d4d4"/><rect x="11.2" y="171.4" width="0.8" height="1.1" fill="#d4d4d4"/><rect x="12.0" y="171.4" width="0.8" height="1.1" fill="#d4d4d4"/><rect x="12.8" y="171.4" width="4.0" height="1.1" fill="#d4d4d4"/><rect x="16.8" y="171.4" width="0.8" height="1.1" fill="#d4d4d4"/><rect x="17.6" y="171.4" width="0.8" height="1.1" fill="#d4d4d4"/><rect x="18.4" y="171.4" width="0.8" height="1.1" fill="#b5cea8"/><rect x="19.2" y="171.4" width="0.8" height="1.1" fill="#d4d4d4"/><rect x="20.8" y="171.4" width="0.8" height="1.1" fill="#d4d4d4"/><rect x="22.4" y="171.4" width="0.8" height="1.1" fill="#d4d4d4"/><rect x="23.2" y="171.4" width="0.8" height="1.1" fill="#d4d4d4"/><rect x="24.0" y="171.4" width="5.6" height="1.1" fill="#4ec9b0"/><rect x="29.6" y="171.4" width="0.8" height="1.1" fill="#d4d4d4"/><rect x="30.4" y="171.4" width="8.8" height="1.1" fill="#d4d4d4"/><rect x="39.2" y="171.4" width="0.8" height="1.1" fill="#d4d4d4"/><rect x="40.0" y="171.4" width="4.8" height="1.1" fill="#d4d4d4"/><rect x="44.8" y="171.4" width="0.8" height="1.1" fill="#d4d4d4"/><rect x="45.6" y="171.4" width="0.8" height="1.1" fill="#d4d4d4"/><rect x="47.2" y="171.4" width="0.8" height="1.1" fill="#d4d4d4"/><rect x="48.8" y="171.4" width="0.8" height="1.1" fill="#d4d4d4"/><rect x="49.6" y="171.4" width="0.8" height="1.1" fill="#d4d4d4"/><rect x="50.4" y="171.4" width="4.0" height="1.1" fill="#d4d4d4"/><rect x="54.4" y="171.4" width="0.8" height="1.1" fill="#d4d4d4"/><rect x="55.2" y="171.4" width="0.8" height="1.1" fill="#d4d4d4"/><rect x="56.0" y="171.4" width="0.8" height="1.1" fill="#b5cea8"/><rect x="56.8" y="171.4" width="0.8" height="1.1" fill="#d4d4d4"/><rect x="58.4" y="171.4" width="0.8" height="1.1" fill="#d4d4d4"/><rect x="60.0" y="171.4" width="0.8" height="1.1" fill="#d4d4d4"/><rect x="60.8" y="171.4" width="0.8" height="1.1" fill="#d4d4d4"/><rect x="61.6" y="171.4" width="5.6" height="1.1" fill="#4ec9b0"/><rect x="67.2" y="171.4" width="0.8" height="1.1" fill="#d4d4d4"/><rect x="68.0" y="171.4" width="1.6" height="1.1" fill="#d4d4d4"/><rect x="3.2" y="173.0" width="0.8" height="1.1" fill="#d4d4d4"/><rect x="4.0" y="173.0" width="0.8" height="1.1" fill="#d4d4d4"/><rect x="4.8" y="173.0" width="5.6" height="1.1" fill="#4ec9b0"/><rect x="10.4" y="173.0" width="0.8" height="1.1" fill="#d4d4d4"/><rect x="11.2" y="173.0" width="8.8" height="1.1" fill="#d4d4d4"/><rect x="20.0" y="173.0" width="0.8" height="1.1" fill="#d4d4d4"/><rect x="20.8" y="173.0" width="4.8" height="1.1" fill="#d4d4d4"/><rect x="25.6" y="173.0" width="0.8" height="1.1" fill="#d4d4d4"/><rect x="26.4" y="173.0" width="0.8" height="1.1" fill="#d4d4d4"/><rect x="28.0" y="173.0" width="0.8" height="1.1" fill="#d4d4d4"/><rect x="28.8" y="173.0" width="0.8" height="1.1" fill="#d4d4d4"/><rect x="30.4" y="173.0" width="1.6" height="1.1" fill="#b5cea8"/><rect x="32.0" y="173.0" width="0.8" height="1.1" fill="#d4d4d4"/><rect x="3.2" y="174.6" width="4.8" height="1.1" fill="#d4d4d4"/><rect x="8.8" y="174.6" width="0.8" height="1.1" fill="#d4d4d4"/><rect x="10.4" y="174.6" width="3.2" height="1.1" fill="#d4d4d4"/><rect x="14.4" y="174.6" width="0.8" height="1.1" fill="#d4d4d4"/><rect x="16.0" y="174.6" width="3.2" height="1.1" fill="#d4d4d4"/><rect x="19.2" y="174.6" width="0.8" height="1.1" fill="#d4d4d4"/><rect x="0.0" y="176.2" width="4.0" height="1.1" fill="#569cd6"/><rect x="4.8" y="176.2" width="4.8" height="1.1" fill="#4ec9b0"/><rect x="9.6" y="176.2" width="0.8" height="1.1" fill="#d4d4d4"/><rect x="10.4" y="176.2" width="0.8" height="1.1" fill="#d4d4d4"/><rect x="11.2" y="176.2" width="7.2" height="1.1" fill="#dcdcaa"/><rect x="18.4" y="176.2" width="0.8" height="1.1" fill="#d4d4d4"/><rect x="20.0" y="176.2" width="3.2" height="1.1" fill="#569cd6"/><rect x="24.0" y="176.2" width="0.8" height="1.1" fill="#d4d4d4"/><rect x="0.0" y="177.8" width="0.8" height="1.1" fill="#d4d4d4"/><rect x="3.2" y="179.4" width="4.0" height="1.1" fill="#569cd6"/><rect x="8.0" y="179.4" width="4.8" height="1.1" fill="#d4d4d4"/><rect x="13.6" y="179.4" width="0.8" height="1.1" fill="#d4d4d4"/><rect x="15.2" y="179.4" width="7.2" height="1.1" fill="#dcdcaa"/><rect x="22.4" y="179.4" width="0.8" height="1.1" fill="#d4d4d4"/><rect x="23.2" y="179.4" width="0.8" height="1.1" fill="#d4d4d4"/><rect x="24.0" y="179.4" width="0.8" height="1.1" fill="#d4d4d4"/><rect x="3.2" y="181.0" width="4.8" height="1.1" fill="#d4d4d4"/><rect x="8.8" y="181.0" width="0.8" height="1.1" fill="#d4d4d4"/><rect x="10.4" y="181.0" width="0.8" height="1.1" fill="#d4d4d4"/><rect x="11.2" y="181.0" width="4.8" height="1.1" fill="#d4d4d4"/><rect x="16.8" y="181.0" width="0.8" height="1.1" fill="#d4d4d4"/><rect x="18.4" y="181.0" width="0.8" height="1.1" fill="#b5cea8"/><rect x="19.2" y="181.0" width="0.8" height="1.1" fill="#d4d4d4"/><rect x="20.8" y="181.0" width="0.8" height="1.1" fill="#d4d4d4"/><rect x="22.4" y="181.0" width="0.8" height="1.1" fill="#b5cea8"/><rect x="24.0" y="181.0" width="0.8" height="1.1" fill="#d4d4d4"/><rect x="25.6" y="181.0" width="1.6" height="1.1" fill="#b5cea8"/><rect x="27.2" y="181.0" width="0.8" height="1.1" fill="#d4d4d4"/><rect x="0.0" y="182.6" width="0.8" height="1.1" fill="#d4d4d4"/><rect x="0.0" y="187.4" width="64.0" height="1.1" fill="#6a9955"/><rect x="0.0" y="189.0" width="1.6" height="1.1" fill="#6a9955"/><rect x="0.0" y="190.6" width="1.6" height="1.1" fill="#6a9955"/><rect x="3.2" y="190.6" width="2.4" height="1.1" fill="#6a9955"/><rect x="6.4" y="190.6" width="4.0" height="1.1" fill="#6a9955"/><rect x="11.2" y="190.6" width="5.6" height="1.1" fill="#6a9955"/><rect x="0.0" y="192.2" width="1.6" height="1.1" fill="#6a9955"/><rect x="0.0" y="193.8" width="64.0" height="1.1" fill="#6a9955"/><rect x="0.0" y="197.0" width="1.6" height="1.1" fill="#6a9955"/><rect x="2.4" y="197.0" width="5.6" height="1.1" fill="#6a9955"/><rect x="8.8" y="197.0" width="2.4" height="1.1" fill="#6a9955"/><rect x="12.0" y="197.0" width="4.0" height="1.1" fill="#6a9955"/><rect x="16.8" y="197.0" width="1.6" height="1.1" fill="#6a9955"/><rect x="19.2" y="197.0" width="3.2" height="1.1" fill="#6a9955"/><rect x="0.0" y="198.6" width="4.8" height="1.1" fill="#569cd6"/><rect x="5.6" y="198.6" width="4.8" height="1.1" fill="#4ec9b0"/><rect x="10.4" y="198.6" width="0.8" height="1.1" fill="#d4d4d4"/><rect x="11.2" y="198.6" width="0.8" height="1.1" fill="#d4d4d4"/><rect x="12.0" y="198.6" width="7.2" height="1.1" fill="#dcdcaa"/><rect x="19.2" y="198.6" width="0.8" height="1.1" fill="#d4d4d4"/><rect x="20.8" y="198.6" width="3.2" height="1.1" fill="#569cd6"/><rect x="24.8" y="198.6" width="0.8" height="1.1" fill="#d4d4d4"/><rect x="0.0" y="200.2" width="0.8" height="1.1" fill="#d4d4d4"/><rect x="3.2" y="201.8" width="4.8" height="1.1" fill="#569cd6"/><rect x="8.8" y="201.8" width="5.6" height="1.1" fill="#d4d4d4"/><rect x="15.2" y="201.8" width="0.8" height="1.1" fill="#d4d4d4"/><rect x="16.8" y="201.8" width="7.2" height="1.1" fill="#dcdcaa"/><rect x="24.0" y="201.8" width="0.8" height="1.1" fill="#d4d4d4"/><rect x="24.8" y="201.8" width="0.8" height="1.1" fill="#d4d4d4"/><rect x="25.6" y="201.8" width="0.8" height="1.1" fill="#d4d4d4"/><rect x="3.2" y="203.4" width="4.8" height="1.1" fill="#569cd6"/><rect x="8.8" y="203.4" width="6.4" height="1.1" fill="#d4d4d4"/><rect x="16.0" y="203.4" width="0.8" height="1.1" fill="#d4d4d4"/><rect x="17.6" y="203.4" width="13.6" height="1.1" fill="#dcdcaa"/><rect x="31.2" y="203.4" width="0.8" height="1.1" fill="#d4d4d4"/><rect x="32.0" y="203.4" width="0.8" height="1.1" fill="#d4d4d4"/><rect x="32.8" y="203.4" width="0.8" height="1.1" fill="#d4d4d4"/><rect x="3.2" y="205.0" width="1.6" height="1.1" fill="#6a9955"/><rect x="5.6" y="205.0" width="2.4" height="1.1" fill="#6a9955"/><rect x="8.8" y="205.0" width="8.0" height="1.1" fill="#6a9955"/><rect x="17.6" y="205.0" width="4.0" height="1.1" fill="#6a9955"/><rect x="22.4" y="205.0" width="6.4" height="1.1" fill="#6a9955"/><rect x="29.6" y="205.0" width="0.8" height="1.1" fill="#6a9955"/><rect x="31.2" y="205.0" width="5.6" height="1.1" fill="#6a9955"/><rect x="3.2" y="206.6" width="4.8" height="1.1" fill="#569cd6"/><rect x="8.8" y="206.6" width="4.0" height="1.1" fill="#d4d4d4"/><rect x="13.6" y="206.6" width="0.8" height="1.1" fill="#d4d4d4"/><rect x="15.2" y="206.6" width="4.8" height="1.1" fill="#b5cea8"/><rect x="20.8" y="206.6" width="0.8" height="1.1" fill="#d4d4d4"/><rect x="22.4" y="206.6" width="0.8" height="1.1" fill="#d4d4d4"/><rect x="23.2" y="206.6" width="4.8" height="1.1" fill="#b5cea8"/><rect x="28.8" y="206.6" width="0.8" height="1.1" fill="#d4d4d4"/><rect x="30.4" y="206.6" width="5.6" height="1.1" fill="#d4d4d4"/><rect x="36.0" y="206.6" width="0.8" height="1.1" fill="#d4d4d4"/><rect x="36.8" y="206.6" width="0.8" height="1.1" fill="#d4d4d4"/><rect x="3.2" y="208.2" width="4.8" height="1.1" fill="#569cd6"/><rect x="8.8" y="208.2" width="2.4" height="1.1" fill="#d4d4d4"/><rect x="12.0" y="208.2" width="0.8" height="1.1" fill="#d4d4d4"/><rect x="13.6" y="208.2" width="0.8" height="1.1" fill="#d4d4d4"/><rect x="14.4" y="208.2" width="5.6" height="1.1" fill="#b5cea8"/><rect x="20.8" y="208.2" width="0.8" height="1.1" fill="#d4d4d4"/><rect x="22.4" y="208.2" width="0.8" height="1.1" fill="#d4d4d4"/><rect x="23.2" y="208.2" width="4.0" height="1.1" fill="#d4d4d4"/><rect x="28.0" y="208.2" width="0.8" height="1.1" fill="#d4d4d4"/><rect x="29.6" y="208.2" width="0.8" height="1.1" fill="#b5cea8"/><rect x="30.4" y="208.2" width="0.8" height="1.1" fill="#d4d4d4"/><rect x="31.2" y="208.2" width="0.8" height="1.1" fill="#d4d4d4"/><rect x="3.2" y="209.8" width="2.4" height="1.1" fill="#d4d4d4"/><rect x="6.4" y="209.8" width="0.8" height="1.1" fill="#d4d4d4"/><rect x="7.2" y="209.8" width="0.8" height="1.1" fill="#d4d4d4"/><rect x="8.8" y="209.8" width="5.6" height="1.1" fill="#b5cea8"/><rect x="15.2" y="209.8" width="0.8" height="1.1" fill="#d4d4d4"/><rect x="16.8" y="209.8" width="4.0" height="1.1" fill="#dcdcaa"/><rect x="20.8" y="209.8" width="0.8" height="1.1" fill="#d4d4d4"/><rect x="21.6" y="209.8" width="4.0" height="1.1" fill="#d4d4d4"/><rect x="25.6" y="209.8" width="0.8" height="1.1" fill="#d4d4d4"/><rect x="26.4" y="209.8" width="0.8" height="1.1" fill="#d4d4d4"/><rect x="3.2" y="211.4" width="2.4" height="1.1" fill="#d4d4d4"/><rect x="6.4" y="211.4" width="0.8" height="1.1" fill="#d4d4d4"/><rect x="7.2" y="211.4" width="0.8" height="1.1" fill="#d4d4d4"/><rect x="8.8" y="211.4" width="0.8" height="1.1" fill="#d4d4d4"/><rect x="9.6" y="211.4" width="7.2" height="1.1" fill="#b5cea8"/><rect x="17.6" y="211.4" width="0.8" height="1.1" fill="#d4d4d4"/><rect x="19.2" y="211.4" width="0.8" height="1.1" fill="#d4d4d4"/><rect x="20.0" y="211.4" width="2.4" height="1.1" fill="#dcdcaa"/><rect x="22.4" y="211.4" width="0.8" height="1.1" fill="#d4d4d4"/><rect x="23.2" y="211.4" width="1.6" height="1.1" fill="#b5cea8"/><rect x="24.8" y="211.4" width="0.8" height="1.1" fill="#d4d4d4"/><rect x="26.4" y="211.4" width="0.8" height="1.1" fill="#d4d4d4"/><rect x="27.2" y="211.4" width="4.8" height="1.1" fill="#b5cea8"/><rect x="32.8" y="211.4" width="0.8" height="1.1" fill="#d4d4d4"/><rect x="34.4" y="211.4" width="0.8" height="1.1" fill="#d4d4d4"/><rect x="35.2" y="211.4" width="0.8" height="1.1" fill="#b5cea8"/><rect x="36.8" y="211.4" width="0.8" height="1.1" fill="#d4d4d4"/><rect x="38.4" y="211.4" width="0.8" height="1.1" fill="#b5cea8"/><rect x="39.2" y="211.4" width="0.8" height="1.1" fill="#d4d4d4"/><rect x="40.0" y="211.4" width="4.0" height="1.1" fill="#d4d4d4"/><rect x="44.8" y="211.4" width="0.8" height="1.1" fill="#d4d4d4"/><rect x="45.6" y="211.4" width="0.8" height="1.1" fill="#d4d4d4"/><rect x="46.4" y="211.4" width="0.8" height="1.1" fill="#d4d4d4"/><rect x="48.0" y="211.4" width="0.8" height="1.1" fill="#d4d4d4"/><rect x="49.6" y="211.4" width="0.8" height="1.1" fill="#b5cea8"/><rect x="50.4" y="211.4" width="0.8" height="1.1" fill="#d4d4d4"/><rect x="52.0" y="211.4" width="0.8" height="1.1" fill="#d4d4d4"/><rect x="3.2" y="213.0" width="2.4" height="1.1" fill="#d4d4d4"/><rect x="6.4" y="213.0" width="0.8" height="1.1" fill="#d4d4d4"/><rect x="7.2" y="213.0" width="0.8" height="1.1" fill="#d4d4d4"/><rect x="8.8" y="213.0" width="7.2" height="1.1" fill="#b5cea8"/><rect x="16.8" y="213.0" width="0.8" height="1.1" fill="#d4d4d4"/><rect x="18.4" y="213.0" width="0.8" height="1.1" fill="#d4d4d4"/><rect x="19.2" y="213.0" width="2.4" height="1.1" fill="#dcdcaa"/><rect x="21.6" y="213.0" width="0.8" height="1.1" fill="#d4d4d4"/><rect x="22.4" y="213.0" width="1.6" height="1.1" fill="#b5cea8"/><rect x="24.0" y="213.0" width="0.8" height="1.1" fill="#d4d4d4"/><rect x="25.6" y="213.0" width="0.8" height="1.1" fill="#d4d4d4"/><rect x="26.4" y="213.0" width="0.8" height="1.1" fill="#d4d4d4"/><rect x="27.2" y="213.0" width="5.6" height="1.1" fill="#b5cea8"/><rect x="33.6" y="213.0" width="0.8" height="1.1" fill="#d4d4d4"/><rect x="35.2" y="213.0" width="0.8" height="1.1" fill="#d4d4d4"/><rect x="36.0" y="213.0" width="4.0" height="1.1" fill="#d4d4d4"/><rect x="40.8" y="213.0" width="0.8" height="1.1" fill="#d4d4d4"/><rect x="42.4" y="213.0" width="0.8" height="1.1" fill="#b5cea8"/><rect x="43.2" y="213.0" width="0.8" height="1.1" fill="#d4d4d4"/><rect x="44.0" y="213.0" width="0.8" height="1.1" fill="#d4d4d4"/><rect x="44.8" y="213.0" width="0.8" height="1.1" fill="#d4d4d4"/><rect x="46.4" y="213.0" width="0.8" height="1.1" fill="#d4d4d4"/><rect x="48.0" y="213.0" width="0.8" height="1.1" fill="#b5cea8"/><rect x="48.8" y="213.0" width="0.8" height="1.1" fill="#d4d4d4"/><rect x="50.4" y="213.0" width="0.8" height="1.1" fill="#d4d4d4"/><rect x="3.2" y="214.6" width="2.4" height="1.1" fill="#d4d4d4"/><rect x="6.4" y="214.6" width="0.8" height="1.1" fill="#d4d4d4"/><rect x="7.2" y="214.6" width="0.8" height="1.1" fill="#d4d4d4"/><rect x="8.8" y="214.6" width="4.0" height="1.1" fill="#dcdcaa"/><rect x="12.8" y="214.6" width="0.8" height="1.1" fill="#d4d4d4"/><rect x="13.6" y="214.6" width="6.4" height="1.1" fill="#b5cea8"/><rect x="20.0" y="214.6" width="0.8" height="1.1" fill="#d4d4d4"/><rect x="20.8" y="214.6" width="0.8" height="1.1" fill="#d4d4d4"/><rect x="3.2" y="216.2" width="4.8" height="1.1" fill="#569cd6"/><rect x="8.8" y="216.2" width="1.6" height="1.1" fill="#d4d4d4"/><rect x="11.2" y="216.2" width="0.8" height="1.1" fill="#d4d4d4"/><rect x="12.8" y="216.2" width="2.4" height="1.1" fill="#dcdcaa"/><rect x="15.2" y="216.2" width="0.8" height="1.1" fill="#d4d4d4"/><rect x="16.0" y="216.2" width="1.6" height="1.1" fill="#b5cea8"/><rect x="17.6" y="216.2" width="0.8" height="1.1" fill="#d4d4d4"/><rect x="19.2" y="216.2" width="2.4" height="1.1" fill="#d4d4d4"/><rect x="22.4" y="216.2" width="0.8" height="1.1" fill="#d4d4d4"/><rect x="24.0" y="216.2" width="0.8" height="1.1" fill="#b5cea8"/><rect x="24.8" y="216.2" width="0.8" height="1.1" fill="#d4d4d4"/><rect x="26.4" y="216.2" width="0.8" height="1.1" fill="#d4d4d4"/><rect x="28.0" y="216.2" width="6.4" height="1.1" fill="#d4d4d4"/><rect x="34.4" y="216.2" width="0.8" height="1.1" fill="#d4d4d4"/><rect x="3.2" y="217.8" width="4.8" height="1.1" fill="#569cd6"/><rect x="8.8" y="217.8" width="0.8" height="1.1" fill="#d4d4d4"/><rect x="10.4" y="217.8" width="0.8" height="1.1" fill="#d4d4d4"/><rect x="12.0" y="217.8" width="2.4" height="1.1" fill="#dcdcaa"/><rect x="14.4" y="217.8" width="0.8" height="1.1" fill="#d4d4d4"/><rect x="15.2" y="217.8" width="1.6" height="1.1" fill="#d4d4d4"/><rect x="16.8" y="217.8" width="0.8" height="1.1" fill="#d4d4d4"/><rect x="17.6" y="217.8" width="5.6" height="1.1" fill="#b5cea8"/><rect x="23.2" y="217.8" width="0.8" height="1.1" fill="#d4d4d4"/><rect x="24.0" y="217.8" width="0.8" height="1.1" fill="#d4d4d4"/><rect x="3.2" y="219.4" width="4.8" height="1.1" fill="#c586c0"/><rect x="8.8" y="219.4" width="0.8" height="1.1" fill="#d4d4d4"/><rect x="9.6" y="219.4" width="4.8" height="1.1" fill="#b5cea8"/><rect x="15.2" y="219.4" width="0.8" height="1.1" fill="#d4d4d4"/><rect x="16.8" y="219.4" width="0.8" height="1.1" fill="#d4d4d4"/><rect x="17.6" y="219.4" width="0.8" height="1.1" fill="#d4d4d4"/><rect x="19.2" y="219.4" width="0.8" height="1.1" fill="#d4d4d4"/><rect x="20.8" y="219.4" width="0.8" height="1.1" fill="#d4d4d4"/><rect x="21.6" y="219.4" width="4.8" height="1.1" fill="#b5cea8"/><rect x="27.2" y="219.4" width="0.8" height="1.1" fill="#d4d4d4"/><rect x="28.8" y="219.4" width="0.8" height="1.1" fill="#d4d4d4"/><rect x="29.6" y="219.4" width="0.8" height="1.1" fill="#d4d4d4"/><rect x="30.4" y="219.4" width="0.8" height="1.1" fill="#d4d4d4"/><rect x="0.0" y="221.0" width="0.8" height="1.1" fill="#d4d4d4"/><rect x="0.0" y="224.2" width="1.6" height="1.1" fill="#6a9955"/><rect x="2.4" y="224.2" width="5.6" height="1.1" fill="#6a9955"/><rect x="8.8" y="224.2" width="2.4" height="1.1" fill="#6a9955"/><rect x="12.0" y="224.2" width="4.0" height="1.1" fill="#6a9955"/><rect x="16.8" y="224.2" width="1.6" height="1.1" fill="#6a9955"/><rect x="19.2" y="224.2" width="3.2" height="1.1" fill="#6a9955"/><rect x="0.0" y="225.8" width="4.8" height="1.1" fill="#569cd6"/><rect x="5.6" y="225.8" width="4.8" height="1.1" fill="#4ec9b0"/><rect x="10.4" y="225.8" width="0.8" height="1.1" fill="#d4d4d4"/><rect x="11.2" y="225.8" width="0.8" height="1.1" fill="#d4d4d4"/><rect x="12.0" y="225.8" width="7.2" height="1.1" fill="#dcdcaa"/><rect x="19.2" y="225.8" width="0.8" height="1.1" fill="#d4d4d4"/><rect x="20.8" y="225.8" width="3.2" height="1.1" fill="#569cd6"/><rect x="24.8" y="225.8" width="0.8" height="1.1" fill="#d4d4d4"/><rect x="0.0" y="227.4" width="0.8" height="1.1" fill="#d4d4d4"/><rect x="3.2" y="229.0" width="4.8" height="1.1" fill="#c586c0"/><rect x="8.0" y="229.0" width="0.8" height="1.1" fill="#d4d4d4"/><rect x="8.8" y="229.0" width="7.2" height="1.1" fill="#dcdcaa"/><rect x="16.0" y="229.0" width="0.8" height="1.1" fill="#d4d4d4"/><rect x="16.8" y="229.0" width="0.8" height="1.1" fill="#d4d4d4"/><rect x="18.4" y="229.0" width="0.8" height="1.1" fill="#d4d4d4"/><rect x="20.0" y="229.0" width="2.4" height="1.1" fill="#b5cea8"/><rect x="23.2" y="229.0" width="0.8" height="1.1" fill="#d4d4d4"/><rect x="24.8" y="229.0" width="1.6" height="1.1" fill="#b5cea8"/><rect x="26.4" y="229.0" width="0.8" height="1.1" fill="#d4d4d4"/><rect x="27.2" y="229.0" width="0.8" height="1.1" fill="#d4d4d4"/><rect x="28.8" y="229.0" width="7.2" height="1.1" fill="#6a9955"/><rect x="36.8" y="229.0" width="0.8" height="1.1" fill="#6a9955"/><rect x="38.4" y="229.0" width="1.6" height="1.1" fill="#6a9955"/><rect x="40.8" y="229.0" width="0.8" height="1.1" fill="#6a9955"/><rect x="0.0" y="230.6" width="0.8" height="1.1" fill="#d4d4d4"/><rect x="0.0" y="233.8" width="5.6" height="1.1" fill="#6a9955"/><rect x="6.4" y="233.8" width="2.4" height="1.1" fill="#6a9955"/><rect x="9.6" y="233.8" width="7.2" height="1.1" fill="#6a9955"/><rect x="17.6" y="233.8" width="2.4" height="1.1" fill="#6a9955"/><rect x="20.8" y="233.8" width="2.4" height="1.1" fill="#6a9955"/><rect x="24.0" y="233.8" width="4.8" height="1.1" fill="#6a9955"/><rect x="29.6" y="233.8" width="3.2" height="1.1" fill="#6a9955"/><rect x="33.6" y="233.8" width="4.0" height="1.1" fill="#6a9955"/><rect x="38.4" y="233.8" width="4.8" height="1.1" fill="#6a9955"/><rect x="44.0" y="233.8" width="1.6" height="1.1" fill="#6a9955"/><rect x="46.4" y="233.8" width="4.8" height="1.1" fill="#6a9955"/><rect x="52.0" y="233.8" width="8.8" height="1.1" fill="#6a9955"/><rect x="0.0" y="235.4" width="3.2" height="1.1" fill="#569cd6"/><rect x="4.0" y="235.4" width="4.8" height="1.1" fill="#4ec9b0"/><rect x="8.8" y="235.4" width="0.8" height="1.1" fill="#d4d4d4"/><rect x="9.6" y="235.4" width="0.8" height="1.1" fill="#d4d4d4"/><rect x="10.4" y="235.4" width="8.8" height="1.1" fill="#dcdcaa"/><rect x="19.2" y="235.4" width="0.8" height="1.1" fill="#d4d4d4"/><rect x="20.8" y="235.4" width="3.2" height="1.1" fill="#569cd6"/><rect x="24.8" y="235.4" width="0.8" height="1.1" fill="#d4d4d4"/><rect x="0.0" y="237.0" width="0.8" height="1.1" fill="#d4d4d4"/><rect x="3.2" y="238.6" width="5.6" height="1.1" fill="#4ec9b0"/><rect x="9.6" y="238.6" width="3.2" height="1.1" fill="#d4d4d4"/><rect x="13.6" y="238.6" width="0.8" height="1.1" fill="#d4d4d4"/><rect x="15.2" y="238.6" width="9.6" height="1.1" fill="#dcdcaa"/><rect x="24.8" y="238.6" width="0.8" height="1.1" fill="#d4d4d4"/><rect x="25.6" y="238.6" width="12.0" height="1.1" fill="#d4d4d4"/><rect x="37.6" y="238.6" width="0.8" height="1.1" fill="#d4d4d4"/><rect x="38.4" y="238.6" width="0.8" height="1.1" fill="#d4d4d4"/><rect x="0.0" y="240.2" width="8.0" height="1.1" fill="#6a9955"/><rect x="8.8" y="240.2" width="5.6" height="1.1" fill="#6a9955"/><rect x="16.0" y="240.2" width="2.4" height="1.1" fill="#6a9955"/><rect x="19.2" y="240.2" width="6.4" height="1.1" fill="#6a9955"/><rect x="26.4" y="240.2" width="8.0" height="1.1" fill="#6a9955"/><rect x="0.0" y="241.8" width="3.2" height="1.1" fill="#569cd6"/><rect x="4.0" y="241.8" width="4.8" height="1.1" fill="#4ec9b0"/><rect x="8.8" y="241.8" width="0.8" height="1.1" fill="#d4d4d4"/><rect x="9.6" y="241.8" width="0.8" height="1.1" fill="#d4d4d4"/><rect x="10.4" y="241.8" width="4.0" height="1.1" fill="#dcdcaa"/><rect x="14.4" y="241.8" width="0.8" height="1.1" fill="#d4d4d4"/><rect x="16.0" y="241.8" width="3.2" height="1.1" fill="#569cd6"/><rect x="20.0" y="241.8" width="0.8" height="1.1" fill="#d4d4d4"/><rect x="0.0" y="243.4" width="0.8" height="1.1" fill="#d4d4d4"/><rect x="3.2" y="245.0" width="10.4" height="1.1" fill="#dcdcaa"/><rect x="13.6" y="245.0" width="0.8" height="1.1" fill="#d4d4d4"/><rect x="14.4" y="245.0" width="11.2" height="1.1" fill="#d4d4d4"/><rect x="25.6" y="245.0" width="0.8" height="1.1" fill="#d4d4d4"/><rect x="27.2" y="245.0" width="3.2" height="1.1" fill="#b5cea8"/><rect x="30.4" y="245.0" width="0.8" height="1.1" fill="#d4d4d4"/><rect x="31.2" y="245.0" width="0.8" height="1.1" fill="#d4d4d4"/><rect x="0.0" y="246.6" width="0.8" height="1.1" fill="#d4d4d4"/><rect x="0.0" y="249.8" width="64.0" height="1.1" fill="#6a9955"/><rect x="0.0" y="251.4" width="1.6" height="1.1" fill="#6a9955"/><rect x="0.0" y="253.0" width="1.6" height="1.1" fill="#6a9955"/><rect x="3.2" y="253.0" width="5.6" height="1.1" fill="#6a9955"/><rect x="0.0" y="254.6" width="1.6" height="1.1" fill="#6a9955"/><rect x="0.0" y="256.2" width="64.0" height="1.1" fill="#6a9955"/><rect x="0.0" y="259.4" width="3.2" height="1.1" fill="#569cd6"/><rect x="4.0" y="259.4" width="4.8" height="1.1" fill="#4ec9b0"/><rect x="8.8" y="259.4" width="0.8" height="1.1" fill="#d4d4d4"/><rect x="9.6" y="259.4" width="0.8" height="1.1" fill="#d4d4d4"/><rect x="10.4" y="259.4" width="14.4" height="1.1" fill="#dcdcaa"/><rect x="24.8" y="259.4" width="0.8" height="1.1" fill="#d4d4d4"/><rect x="25.6" y="259.4" width="5.6" height="1.1" fill="#4ec9b0"/><rect x="32.0" y="259.4" width="0.8" height="1.1" fill="#d4d4d4"/><rect x="32.8" y="259.4" width="10.4" height="1.1" fill="#d4d4d4"/><rect x="44.0" y="259.4" width="0.8" height="1.1" fill="#d4d4d4"/><rect x="45.6" y="259.4" width="5.6" height="1.1" fill="#4ec9b0"/><rect x="52.0" y="259.4" width="4.8" height="1.1" fill="#d4d4d4"/><rect x="56.8" y="259.4" width="0.8" height="1.1" fill="#d4d4d4"/><rect x="58.4" y="259.4" width="5.6" height="1.1" fill="#4ec9b0"/><rect x="64.8" y="259.4" width="4.8" height="1.1" fill="#d4d4d4"/><rect x="69.6" y="259.4" width="0.0" height="1.1" fill="#d4d4d4"/><rect x="0.0" y="261.0" width="0.8" height="1.1" fill="#d4d4d4"/><rect x="3.2" y="262.6" width="6.4" height="1.1" fill="#6a9955"/><rect x="10.4" y="262.6" width="5.6" height="1.1" fill="#6a9955"/><rect x="16.8" y="262.6" width="3.2" height="1.1" fill="#6a9955"/><rect x="20.8" y="262.6" width="3.2" height="1.1" fill="#6a9955"/><rect x="24.8" y="262.6" width="4.0" height="1.1" fill="#6a9955"/><rect x="29.6" y="262.6" width="1.6" height="1.1" fill="#6a9955"/><rect x="32.0" y="262.6" width="2.4" height="1.1" fill="#6a9955"/><rect x="35.2" y="262.6" width="6.4" height="1.1" fill="#6a9955"/><rect x="42.4" y="262.6" width="4.0" height="1.1" fill="#6a9955"/><rect x="3.2" y="264.2" width="5.6" height="1.1" fill="#4ec9b0"/><rect x="9.6" y="264.2" width="0.8" height="1.1" fill="#d4d4d4"/><rect x="11.2" y="264.2" width="0.8" height="1.1" fill="#d4d4d4"/><rect x="12.8" y="264.2" width="0.8" height="1.1" fill="#b5cea8"/><rect x="13.6" y="264.2" width="0.8" height="1.1" fill="#d4d4d4"/><rect x="3.2" y="265.8" width="3.2" height="1.1" fill="#569cd6"/><rect x="7.2" y="265.8" width="0.8" height="1.1" fill="#d4d4d4"/><rect x="8.8" y="265.8" width="0.8" height="1.1" fill="#d4d4d4"/><rect x="10.4" y="265.8" width="0.8" height="1.1" fill="#b5cea8"/><rect x="11.2" y="265.8" width="0.8" height="1.1" fill="#d4d4d4"/><rect x="3.2" y="269.0" width="4.8" height="1.1" fill="#c586c0"/><rect x="8.0" y="269.0" width="0.8" height="1.1" fill="#d4d4d4"/><rect x="8.8" y="269.0" width="6.4" height="1.1" fill="#d4d4d4"/><rect x="15.2" y="269.0" width="0.8" height="1.1" fill="#d4d4d4"/><rect x="16.0" y="269.0" width="10.4" height="1.1" fill="#d4d4d4"/><rect x="26.4" y="269.0" width="0.8" height="1.1" fill="#d4d4d4"/><rect x="3.2" y="270.6" width="0.8" height="1.1" fill="#d4d4d4"/><rect x="3.2" y="273.8" width="3.2" height="1.1" fill="#c586c0"/><rect x="7.2" y="273.8" width="6.4" height="1.1" fill="#d4d4d4"/><rect x="13.6" y="273.8" width="0.8" height="1.1" fill="#d4d4d4"/><rect x="6.4" y="275.4" width="4.8" height="1.1" fill="#c586c0"/><rect x="11.2" y="275.4" width="0.8" height="1.1" fill="#d4d4d4"/><rect x="12.0" y="275.4" width="7.2" height="1.1" fill="#d4d4d4"/><rect x="19.2" y="275.4" width="0.8" height="1.1" fill="#d4d4d4"/><rect x="6.4" y="277.0" width="0.8" height="1.1" fill="#d4d4d4"/><rect x="9.6" y="278.6" width="3.2" height="1.1" fill="#c586c0"/><rect x="12.8" y="278.6" width="0.8" height="1.1" fill="#d4d4d4"/><rect x="13.6" y="278.6" width="7.2" height="1.1" fill="#d4d4d4"/><rect x="20.8" y="278.6" width="0.8" height="1.1" fill="#d4d4d4"/><rect x="21.6" y="278.6" width="0.8" height="1.1" fill="#d4d4d4"/><rect x="12.8" y="280.2" width="7.2" height="1.1" fill="#d4d4d4"/><rect x="20.0" y="280.2" width="0.8" height="1.1" fill="#d4d4d4"/><rect x="20.8" y="280.2" width="0.8" height="1.1" fill="#d4d4d4"/><rect x="21.6" y="280.2" width="13.6" height="1.1" fill="#dcdcaa"/><rect x="35.2" y="280.2" width="0.8" height="1.1" fill="#d4d4d4"/><rect x="36.0" y="280.2" width="6.4" height="1.1" fill="#d4d4d4"/><rect x="42.4" y="280.2" width="0.8" height="1.1" fill="#d4d4d4"/><rect x="43.2" y="280.2" width="8.0" height="1.1" fill="#d4d4d4"/><rect x="51.2" y="280.2" width="0.8" height="1.1" fill="#d4d4d4"/><rect x="52.0" y="280.2" width="0.8" height="1.1" fill="#d4d4d4"/><rect x="12.8" y="281.8" width="7.2" height="1.1" fill="#d4d4d4"/><rect x="20.0" y="281.8" width="0.8" height="1.1" fill="#d4d4d4"/><rect x="20.8" y="281.8" width="0.8" height="1.1" fill="#d4d4d4"/><rect x="21.6" y="281.8" width="4.0" height="1.1" fill="#dcdcaa"/><rect x="25.6" y="281.8" width="0.8" height="1.1" fill="#d4d4d4"/><rect x="26.4" y="281.8" width="4.8" height="1.1" fill="#d4d4d4"/><rect x="31.2" y="281.8" width="0.8" height="1.1" fill="#d4d4d4"/><rect x="32.0" y="281.8" width="0.8" height="1.1" fill="#d4d4d4"/><rect x="12.8" y="283.4" width="7.2" height="1.1" fill="#d4d4d4"/><rect x="20.0" y="283.4" width="0.8" height="1.1" fill="#d4d4d4"/><rect x="20.8" y="283.4" width="0.8" height="1.1" fill="#d4d4d4"/><rect x="21.6" y="283.4" width="12.0" height="1.1" fill="#dcdcaa"/><rect x="33.6" y="283.4" width="0.8" height="1.1" fill="#d4d4d4"/><rect x="34.4" y="283.4" width="0.8" height="1.1" fill="#d4d4d4"/><rect x="35.2" y="283.4" width="0.8" height="1.1" fill="#d4d4d4"/><rect x="12.8" y="286.6" width="1.6" height="1.1" fill="#6a9955"/><rect x="15.2" y="286.6" width="5.6" height="1.1" fill="#6a9955"/><rect x="21.6" y="286.6" width="4.0" height="1.1" fill="#6a9955"/><rect x="26.4" y="286.6" width="3.2" height="1.1" fill="#6a9955"/><rect x="30.4" y="286.6" width="4.0" height="1.1" fill="#6a9955"/><rect x="35.2" y="286.6" width="4.8" height="1.1" fill="#6a9955"/><rect x="12.8" y="288.2" width="7.2" height="1.1" fill="#d4d4d4"/><rect x="20.0" y="288.2" width="0.8" height="1.1" fill="#d4d4d4"/><rect x="20.8" y="288.2" width="0.8" height="1.1" fill="#d4d4d4"/><rect x="21.6" y="288.2" width="8.8" height="1.1" fill="#dcdcaa"/><rect x="30.4" y="288.2" width="0.8" height="1.1" fill="#d4d4d4"/><rect x="31.2" y="288.2" width="6.4" height="1.1" fill="#d4d4d4"/><rect x="37.6" y="288.2" width="0.8" height="1.1" fill="#d4d4d4"/><rect x="38.4" y="288.2" width="8.0" height="1.1" fill="#d4d4d4"/><rect x="46.4" y="288.2" width="0.8" height="1.1" fill="#d4d4d4"/><rect x="48.0" y="288.2" width="4.8" height="1.1" fill="#d4d4d4"/><rect x="52.8" y="288.2" width="0.8" height="1.1" fill="#d4d4d4"/><rect x="53.6" y="288.2" width="0.8" height="1.1" fill="#d4d4d4"/><rect x="12.8" y="289.8" width="4.0" height="1.1" fill="#c586c0"/><rect x="17.6" y="289.8" width="0.8" height="1.1" fill="#d4d4d4"/><rect x="19.2" y="289.8" width="0.8" height="1.1" fill="#d4d4d4"/><rect x="20.0" y="289.8" width="7.2" height="1.1" fill="#d4d4d4"/><rect x="27.2" y="289.8" width="0.8" height="1.1" fill="#d4d4d4"/><rect x="28.0" y="289.8" width="0.8" height="1.1" fill="#d4d4d4"/><rect x="28.8" y="289.8" width="7.2" height="1.1" fill="#dcdcaa"/><rect x="36.0" y="289.8" width="0.8" height="1.1" fill="#d4d4d4"/><rect x="36.8" y="289.8" width="0.8" height="1.1" fill="#d4d4d4"/><rect x="37.6" y="289.8" width="0.8" height="1.1" fill="#d4d4d4"/><rect x="39.2" y="289.8" width="0.8" height="1.1" fill="#d4d4d4"/><rect x="40.0" y="289.8" width="0.8" height="1.1" fill="#d4d4d4"/><rect x="41.6" y="289.8" width="0.8" height="1.1" fill="#d4d4d4"/><rect x="42.4" y="289.8" width="0.8" height="1.1" fill="#d4d4d4"/><rect x="44.0" y="289.8" width="0.8" height="1.1" fill="#d4d4d4"/><rect x="45.6" y="289.8" width="4.8" height="1.1" fill="#d4d4d4"/><rect x="50.4" y="289.8" width="0.8" height="1.1" fill="#d4d4d4"/><rect x="51.2" y="289.8" width="0.8" height="1.1" fill="#d4d4d4"/><rect x="53.6" y="289.8" width="1.6" height="1.1" fill="#6a9955"/><rect x="56.0" y="289.8" width="4.0" height="1.1" fill="#6a9955"/><rect x="60.8" y="289.8" width="2.4" height="1.1" fill="#6a9955"/><rect x="64.0" y="289.8" width="3.2" height="1.1" fill="#6a9955"/><rect x="68.0" y="289.8" width="1.6" height="1.1" fill="#6a9955"/><rect x="12.8" y="291.4" width="0.8" height="1.1" fill="#d4d4d4"/><rect x="16.0" y="293.0" width="0.8" height="1.1" fill="#d4d4d4"/><rect x="17.6" y="293.0" width="0.8" height="1.1" fill="#d4d4d4"/><rect x="19.2" y="293.0" width="7.2" height="1.1" fill="#d4d4d4"/><rect x="26.4" y="293.0" width="0.8" height="1.1" fill="#d4d4d4"/><rect x="27.2" y="293.0" width="0.8" height="1.1" fill="#d4d4d4"/><rect x="28.0" y="293.0" width="3.2" height="1.1" fill="#dcdcaa"/><rect x="31.2" y="293.0" width="0.8" height="1.1" fill="#d4d4d4"/><rect x="32.0" y="293.0" width="0.8" height="1.1" fill="#d4d4d4"/><rect x="32.8" y="293.0" width="0.8" height="1.1" fill="#d4d4d4"/><rect x="34.4" y="293.0" width="1.6" height="1.1" fill="#6a9955"/><rect x="36.8" y="293.0" width="5.6" height="1.1" fill="#6a9955"/><rect x="43.2" y="293.0" width="0.8" height="1.1" fill="#6a9955"/><rect x="44.8" y="293.0" width="3.2" height="1.1" fill="#6a9955"/><rect x="48.8" y="293.0" width="1.6" height="1.1" fill="#6a9955"/><rect x="51.2" y="293.0" width="7.2" height="1.1" fill="#6a9955"/><rect x="16.0" y="294.6" width="0.8" height="1.1" fill="#d4d4d4"/><rect x="16.8" y="294.6" width="10.4" height="1.1" fill="#d4d4d4"/><rect x="28.0" y="294.6" width="0.8" height="1.1" fill="#d4d4d4"/><rect x="29.6" y="294.6" width="0.8" height="1.1" fill="#d4d4d4"/><rect x="30.4" y="294.6" width="0.8" height="1.1" fill="#d4d4d4"/><rect x="16.0" y="296.2" width="10.4" height="1.1" fill="#d4d4d4"/><rect x="26.4" y="296.2" width="0.8" height="1.1" fill="#d4d4d4"/><rect x="27.2" y="296.2" width="0.8" height="1.1" fill="#d4d4d4"/><rect x="28.0" y="296.2" width="0.8" height="1.1" fill="#d4d4d4"/><rect x="16.0" y="297.8" width="0.8" height="1.1" fill="#d4d4d4"/><rect x="16.8" y="297.8" width="0.8" height="1.1" fill="#d4d4d4"/><rect x="17.6" y="297.8" width="0.8" height="1.1" fill="#d4d4d4"/><rect x="18.4" y="297.8" width="0.8" height="1.1" fill="#d4d4d4"/><rect x="12.8" y="299.4" width="0.8" height="1.1" fill="#d4d4d4"/><rect x="12.8" y="301.0" width="4.0" height="1.1" fill="#c586c0"/><rect x="16.8" y="301.0" width="0.8" height="1.1" fill="#d4d4d4"/><rect x="9.6" y="302.6" width="3.2" height="1.1" fill="#c586c0"/><rect x="12.8" y="302.6" width="0.8" height="1.1" fill="#d4d4d4"/><rect x="13.6" y="302.6" width="7.2" height="1.1" fill="#d4d4d4"/><rect x="20.8" y="302.6" width="0.8" height="1.1" fill="#d4d4d4"/><rect x="21.6" y="302.6" width="0.8" height="1.1" fill="#d4d4d4"/><rect x="9.6" y="304.2" width="4.8" height="1.1" fill="#c586c0"/><rect x="15.2" y="304.2" width="11.2" height="1.1" fill="#d4d4d4"/><rect x="12.8" y="305.8" width="7.2" height="1.1" fill="#d4d4d4"/><rect x="20.0" y="305.8" width="0.8" height="1.1" fill="#d4d4d4"/><rect x="20.8" y="305.8" width="0.8" height="1.1" fill="#d4d4d4"/><rect x="21.6" y="305.8" width="13.6" height="1.1" fill="#dcdcaa"/><rect x="35.2" y="305.8" width="0.8" height="1.1" fill="#d4d4d4"/><rect x="36.0" y="305.8" width="6.4" height="1.1" fill="#d4d4d4"/><rect x="42.4" y="305.8" width="0.8" height="1.1" fill="#d4d4d4"/><rect x="43.2" y="305.8" width="8.0" height="1.1" fill="#d4d4d4"/><rect x="51.2" y="305.8" width="0.8" height="1.1" fill="#d4d4d4"/><rect x="52.0" y="305.8" width="0.8" height="1.1" fill="#d4d4d4"/><rect x="12.8" y="307.4" width="7.2" height="1.1" fill="#d4d4d4"/><rect x="20.0" y="307.4" width="0.8" height="1.1" fill="#d4d4d4"/><rect x="20.8" y="307.4" width="0.8" height="1.1" fill="#d4d4d4"/><rect x="21.6" y="307.4" width="4.0" height="1.1" fill="#dcdcaa"/><rect x="25.6" y="307.4" width="0.8" height="1.1" fill="#d4d4d4"/><rect x="26.4" y="307.4" width="4.8" height="1.1" fill="#d4d4d4"/><rect x="31.2" y="307.4" width="0.8" height="1.1" fill="#d4d4d4"/><rect x="32.0" y="307.4" width="0.8" height="1.1" fill="#d4d4d4"/><rect x="12.8" y="309.0" width="7.2" height="1.1" fill="#d4d4d4"/><rect x="20.0" y="309.0" width="0.8" height="1.1" fill="#d4d4d4"/><rect x="20.8" y="309.0" width="0.8" height="1.1" fill="#d4d4d4"/><rect x="21.6" y="309.0" width="12.0" height="1.1" fill="#dcdcaa"/><rect x="33.6" y="309.0" width="0.8" height="1.1" fill="#d4d4d4"/><rect x="34.4" y="309.0" width="0.8" height="1.1" fill="#d4d4d4"/><rect x="35.2" y="309.0" width="0.8" height="1.1" fill="#d4d4d4"/><rect x="12.8" y="312.2" width="1.6" height="1.1" fill="#6a9955"/><rect x="15.2" y="312.2" width="5.6" height="1.1" fill="#6a9955"/><rect x="21.6" y="312.2" width="4.0" height="1.1" fill="#6a9955"/><rect x="26.4" y="312.2" width="3.2" height="1.1" fill="#6a9955"/><rect x="30.4" y="312.2" width="4.0" height="1.1" fill="#6a9955"/><rect x="35.2" y="312.2" width="4.8" height="1.1" fill="#6a9955"/><rect x="12.8" y="313.8" width="7.2" height="1.1" fill="#d4d4d4"/><rect x="20.0" y="313.8" width="0.8" height="1.1" fill="#d4d4d4"/><rect x="20.8" y="313.8" width="0.8" height="1.1" fill="#d4d4d4"/><rect x="21.6" y="313.8" width="8.8" height="1.1" fill="#dcdcaa"/><rect x="30.4" y="313.8" width="0.8" height="1.1" fill="#d4d4d4"/><rect x="31.2" y="313.8" width="6.4" height="1.1" fill="#d4d4d4"/><rect x="37.6" y="313.8" width="0.8" height="1.1" fill="#d4d4d4"/><rect x="38.4" y="313.8" width="8.0" height="1.1" fill="#d4d4d4"/><rect x="46.4" y="313.8" width="0.8" height="1.1" fill="#d4d4d4"/><rect x="48.0" y="313.8" width="4.8" height="1.1" fill="#d4d4d4"/><rect x="52.8" y="313.8" width="0.8" height="1.1" fill="#d4d4d4"/><rect x="53.6" y="313.8" width="0.8" height="1.1" fill="#d4d4d4"/><rect x="12.8" y="315.4" width="4.0" height="1.1" fill="#c586c0"/><rect x="17.6" y="315.4" width="0.8" height="1.1" fill="#d4d4d4"/><rect x="19.2" y="315.4" width="0.8" height="1.1" fill="#d4d4d4"/><rect x="20.0" y="315.4" width="7.2" height="1.1" fill="#d4d4d4"/><rect x="27.2" y="315.4" width="0.8" height="1.1" fill="#d4d4d4"/><rect x="28.0" y="315.4" width="0.8" height="1.1" fill="#d4d4d4"/><rect x="28.8" y="315.4" width="7.2" height="1.1" fill="#dcdcaa"/><rect x="36.0" y="315.4" width="0.8" height="1.1" fill="#d4d4d4"/><rect x="36.8" y="315.4" width="0.8" height="1.1" fill="#d4d4d4"/><rect x="37.6" y="315.4" width="0.8" height="1.1" fill="#d4d4d4"/><rect x="39.2" y="315.4" width="0.8" height="1.1" fill="#d4d4d4"/><rect x="40.0" y="315.4" width="0.8" height="1.1" fill="#d4d4d4"/><rect x="41.6" y="315.4" width="0.8" height="1.1" fill="#d4d4d4"/><rect x="42.4" y="315.4" width="0.8" height="1.1" fill="#d4d4d4"/><rect x="44.0" y="315.4" width="0.8" height="1.1" fill="#d4d4d4"/><rect x="45.6" y="315.4" width="4.8" height="1.1" fill="#d4d4d4"/><rect x="50.4" y="315.4" width="0.8" height="1.1" fill="#d4d4d4"/><rect x="51.2" y="315.4" width="0.8" height="1.1" fill="#d4d4d4"/><rect x="53.6" y="315.4" width="1.6" height="1.1" fill="#6a9955"/><rect x="56.0" y="315.4" width="4.0" height="1.1" fill="#6a9955"/><rect x="60.8" y="315.4" width="2.4" height="1.1" fill="#6a9955"/><rect x="64.0" y="315.4" width="3.2" height="1.1" fill="#6a9955"/><rect x="68.0" y="315.4" width="1.6" height="1.1" fill="#6a9955"/><rect x="12.8" y="317.0" width="0.8" height="1.1" fill="#d4d4d4"/><rect x="16.0" y="318.6" width="0.8" height="1.1" fill="#d4d4d4"/><rect x="17.6" y="318.6" width="0.8" height="1.1" fill="#d4d4d4"/><rect x="19.2" y="318.6" width="7.2" height="1.1" fill="#d4d4d4"/><rect x="26.4" y="318.6" width="0.8" height="1.1" fill="#d4d4d4"/><rect x="27.2" y="318.6" width="0.8" height="1.1" fill="#d4d4d4"/><rect x="28.0" y="318.6" width="3.2" height="1.1" fill="#dcdcaa"/><rect x="31.2" y="318.6" width="0.8" height="1.1" fill="#d4d4d4"/><rect x="32.0" y="318.6" width="0.8" height="1.1" fill="#d4d4d4"/><rect x="32.8" y="318.6" width="0.8" height="1.1" fill="#d4d4d4"/><rect x="34.4" y="318.6" width="1.6" height="1.1" fill="#6a9955"/><rect x="36.8" y="318.6" width="5.6" height="1.1" fill="#6a9955"/><rect x="43.2" y="318.6" width="0.8" height="1.1" fill="#6a9955"/><rect x="44.8" y="318.6" width="3.2" height="1.1" fill="#6a9955"/><rect x="48.8" y="318.6" width="1.6" height="1.1" fill="#6a9955"/><rect x="51.2" y="318.6" width="7.2" height="1.1" fill="#6a9955"/><rect x="16.0" y="320.2" width="0.8" height="1.1" fill="#d4d4d4"/><rect x="16.8" y="320.2" width="10.4" height="1.1" fill="#d4d4d4"/><rect x="28.0" y="320.2" width="0.8" height="1.1" fill="#d4d4d4"/><rect x="29.6" y="320.2" width="0.8" height="1.1" fill="#d4d4d4"/><rect x="30.4" y="320.2" width="0.8" height="1.1" fill="#d4d4d4"/><rect x="16.0" y="321.8" width="10.4" height="1.1" fill="#d4d4d4"/><rect x="26.4" y="321.8" width="0.8" height="1.1" fill="#d4d4d4"/><rect x="27.2" y="321.8" width="0.8" height="1.1" fill="#d4d4d4"/><rect x="28.0" y="321.8" width="0.8" height="1.1" fill="#d4d4d4"/><rect x="16.0" y="323.4" width="0.8" height="1.1" fill="#d4d4d4"/><rect x="16.8" y="323.4" width="0.8" height="1.1" fill="#d4d4d4"/><rect x="17.6" y="323.4" width="0.8" height="1.1" fill="#d4d4d4"/><rect x="18.4" y="323.4" width="0.8" height="1.1" fill="#d4d4d4"/><rect x="12.8" y="325.0" width="0.8" height="1.1" fill="#d4d4d4"/><rect x="9.6" y="326.6" width="4.8" height="1.1" fill="#c586c0"/><rect x="12.8" y="328.2" width="4.0" height="1.1" fill="#c586c0"/><rect x="16.8" y="328.2" width="0.8" height="1.1" fill="#d4d4d4"/><rect x="6.4" y="329.8" width="0.8" height="1.1" fill="#d4d4d4"/><rect x="6.4" y="331.4" width="4.0" height="1.1" fill="#c586c0"/><rect x="10.4" y="331.4" width="0.8" height="1.1" fill="#d4d4d4"/><rect x="3.2" y="334.6" width="3.2" height="1.1" fill="#c586c0"/><rect x="7.2" y="334.6" width="6.4" height="1.1" fill="#d4d4d4"/><rect x="13.6" y="334.6" width="0.8" height="1.1" fill="#d4d4d4"/><rect x="6.4" y="336.2" width="1.6" height="1.1" fill="#6a9955"/><rect x="8.8" y="336.2" width="3.2" height="1.1" fill="#6a9955"/><rect x="12.8" y="336.2" width="2.4" height="1.1" fill="#6a9955"/><rect x="16.0" y="336.2" width="3.2" height="1.1" fill="#6a9955"/><rect x="20.0" y="336.2" width="4.8" height="1.1" fill="#6a9955"/><rect x="25.6" y="336.2" width="2.4" height="1.1" fill="#6a9955"/><rect x="28.8" y="336.2" width="1.6" height="1.1" fill="#6a9955"/><rect x="31.2" y="336.2" width="4.8" height="1.1" fill="#6a9955"/><rect x="36.8" y="336.2" width="2.4" height="1.1" fill="#6a9955"/><rect x="40.0" y="336.2" width="5.6" height="1.1" fill="#6a9955"/><rect x="6.4" y="337.8" width="9.6" height="1.1" fill="#dcdcaa"/><rect x="16.0" y="337.8" width="0.8" height="1.1" fill="#d4d4d4"/><rect x="16.8" y="337.8" width="6.4" height="1.1" fill="#d4d4d4"/><rect x="23.2" y="337.8" width="0.8" height="1.1" fill="#d4d4d4"/><rect x="24.0" y="337.8" width="10.4" height="1.1" fill="#d4d4d4"/><rect x="34.4" y="337.8" width="0.8" height="1.1" fill="#d4d4d4"/><rect x="36.0" y="337.8" width="2.4" height="1.1" fill="#d4d4d4"/><rect x="38.4" y="337.8" width="0.8" height="1.1" fill="#d4d4d4"/><rect x="39.2" y="337.8" width="0.8" height="1.1" fill="#d4d4d4"/><rect x="6.4" y="339.4" width="1.6" height="1.1" fill="#6a9955"/><rect x="8.8" y="339.4" width="3.2" height="1.1" fill="#6a9955"/><rect x="12.8" y="339.4" width="2.4" height="1.1" fill="#6a9955"/><rect x="16.0" y="339.4" width="4.8" height="1.1" fill="#6a9955"/><rect x="21.6" y="339.4" width="2.4" height="1.1" fill="#6a9955"/><rect x="24.8" y="339.4" width="6.4" height="1.1" fill="#6a9955"/><rect x="32.0" y="339.4" width="2.4" height="1.1" fill="#6a9955"/><rect x="35.2" y="339.4" width="3.2" height="1.1" fill="#6a9955"/><rect x="39.2" y="339.4" width="1.6" height="1.1" fill="#6a9955"/><rect x="41.6" y="339.4" width="4.0" height="1.1" fill="#6a9955"/><rect x="6.4" y="341.0" width="2.4" height="1.1" fill="#d4d4d4"/><rect x="8.8" y="341.0" width="0.8" height="1.1" fill="#d4d4d4"/><rect x="9.6" y="341.0" width="6.4" height="1.1" fill="#dcdcaa"/><rect x="16.0" y="341.0" width="0.8" height="1.1" fill="#d4d4d4"/><rect x="16.8" y="341.0" width="4.8" height="1.1" fill="#d4d4d4"/><rect x="22.4" y="341.0" width="0.8" height="1.1" fill="#d4d4d4"/><rect x="24.0" y="341.0" width="3.2" height="1.1" fill="#b5cea8"/><rect x="27.2" y="341.0" width="0.8" height="1.1" fill="#d4d4d4"/><rect x="28.0" y="341.0" width="0.8" height="1.1" fill="#d4d4d4"/><rect x="30.4" y="341.0" width="4.8" height="1.1" fill="#6a9955"/><rect x="36.0" y="341.0" width="3.2" height="1.1" fill="#6a9955"/><rect x="40.0" y="341.0" width="4.0" height="1.1" fill="#6a9955"/><rect x="44.8" y="341.0" width="6.4" height="1.1" fill="#6a9955"/><rect x="52.0" y="341.0" width="2.4" height="1.1" fill="#6a9955"/><rect x="6.4" y="342.6" width="4.0" height="1.1" fill="#c586c0"/><rect x="11.2" y="342.6" width="0.8" height="1.1" fill="#d4d4d4"/><rect x="12.8" y="342.6" width="0.8" height="1.1" fill="#d4d4d4"/><rect x="14.4" y="342.6" width="0.8" height="1.1" fill="#d4d4d4"/><rect x="16.0" y="342.6" width="4.8" height="1.1" fill="#d4d4d4"/><rect x="21.6" y="342.6" width="0.8" height="1.1" fill="#d4d4d4"/><rect x="23.2" y="342.6" width="1.6" height="1.1" fill="#6a9955"/><rect x="25.6" y="342.6" width="4.0" height="1.1" fill="#6a9955"/><rect x="30.4" y="342.6" width="2.4" height="1.1" fill="#6a9955"/><rect x="33.6" y="342.6" width="3.2" height="1.1" fill="#6a9955"/><rect x="37.6" y="342.6" width="3.2" height="1.1" fill="#6a9955"/><rect x="41.6" y="342.6" width="3.2" height="1.1" fill="#6a9955"/><rect x="45.6" y="342.6" width="7.2" height="1.1" fill="#6a9955"/><rect x="6.4" y="344.2" width="0.8" height="1.1" fill="#d4d4d4"/><rect x="9.6" y="345.8" width="0.8" height="1.1" fill="#d4d4d4"/><rect x="11.2" y="345.8" width="0.8" height="1.1" fill="#d4d4d4"/><rect x="12.8" y="345.8" width="2.4" height="1.1" fill="#d4d4d4"/><rect x="15.2" y="345.8" width="0.8" height="1.1" fill="#d4d4d4"/><rect x="16.0" y="345.8" width="6.4" height="1.1" fill="#dcdcaa"/><rect x="22.4" y="345.8" width="0.8" height="1.1" fill="#d4d4d4"/><rect x="23.2" y="345.8" width="3.2" height="1.1" fill="#b5cea8"/><rect x="26.4" y="345.8" width="0.8" height="1.1" fill="#d4d4d4"/><rect x="27.2" y="345.8" width="0.8" height="1.1" fill="#d4d4d4"/><rect x="28.8" y="345.8" width="1.6" height="1.1" fill="#6a9955"/><rect x="31.2" y="345.8" width="5.6" height="1.1" fill="#6a9955"/><rect x="37.6" y="345.8" width="0.8" height="1.1" fill="#6a9955"/><rect x="39.2" y="345.8" width="3.2" height="1.1" fill="#6a9955"/><rect x="43.2" y="345.8" width="1.6" height="1.1" fill="#6a9955"/><rect x="45.6" y="345.8" width="7.2" height="1.1" fill="#6a9955"/><rect x="9.6" y="347.4" width="0.8" height="1.1" fill="#d4d4d4"/><rect x="10.4" y="347.4" width="10.4" height="1.1" fill="#d4d4d4"/><rect x="21.6" y="347.4" width="0.8" height="1.1" fill="#d4d4d4"/><rect x="23.2" y="347.4" width="0.8" height="1.1" fill="#d4d4d4"/><rect x="24.0" y="347.4" width="0.8" height="1.1" fill="#d4d4d4"/><rect x="9.6" y="349.0" width="10.4" height="1.1" fill="#d4d4d4"/><rect x="20.0" y="349.0" width="0.8" height="1.1" fill="#d4d4d4"/><rect x="20.8" y="349.0" width="0.8" height="1.1" fill="#d4d4d4"/><rect x="21.6" y="349.0" width="0.8" height="1.1" fill="#d4d4d4"/><rect x="9.6" y="350.6" width="0.8" height="1.1" fill="#d4d4d4"/><rect x="10.4" y="350.6" width="0.8" height="1.1" fill="#d4d4d4"/><rect x="11.2" y="350.6" width="0.8" height="1.1" fill="#d4d4d4"/><rect x="12.0" y="350.6" width="0.8" height="1.1" fill="#d4d4d4"/><rect x="6.4" y="352.2" width="0.8" height="1.1" fill="#d4d4d4"/><rect x="6.4" y="353.8" width="1.6" height="1.1" fill="#6a9955"/><rect x="8.8" y="353.8" width="3.2" height="1.1" fill="#6a9955"/><rect x="12.8" y="353.8" width="2.4" height="1.1" fill="#6a9955"/><rect x="16.0" y="353.8" width="3.2" height="1.1" fill="#6a9955"/><rect x="20.0" y="353.8" width="4.8" height="1.1" fill="#6a9955"/><rect x="25.6" y="353.8" width="3.2" height="1.1" fill="#6a9955"/><rect x="29.6" y="353.8" width="1.6" height="1.1" fill="#6a9955"/><rect x="32.0" y="353.8" width="8.0" height="1.1" fill="#6a9955"/><rect x="6.4" y="355.4" width="9.6" height="1.1" fill="#dcdcaa"/><rect x="16.0" y="355.4" width="0.8" height="1.1" fill="#d4d4d4"/><rect x="16.8" y="355.4" width="6.4" height="1.1" fill="#d4d4d4"/><rect x="23.2" y="355.4" width="0.8" height="1.1" fill="#d4d4d4"/><rect x="24.0" y="355.4" width="10.4" height="1.1" fill="#d4d4d4"/><rect x="34.4" y="355.4" width="0.8" height="1.1" fill="#d4d4d4"/><rect x="36.0" y="355.4" width="3.2" height="1.1" fill="#d4d4d4"/><rect x="39.2" y="355.4" width="0.8" height="1.1" fill="#d4d4d4"/><rect x="40.0" y="355.4" width="0.8" height="1.1" fill="#d4d4d4"/><rect x="6.4" y="357.0" width="4.0" height="1.1" fill="#c586c0"/><rect x="10.4" y="357.0" width="0.8" height="1.1" fill="#d4d4d4"/><rect x="3.2" y="360.2" width="5.6" height="1.1" fill="#c586c0"/><rect x="8.8" y="360.2" width="0.8" height="1.1" fill="#d4d4d4"/><rect x="6.4" y="361.8" width="4.0" height="1.1" fill="#c586c0"/><rect x="10.4" y="361.8" width="0.8" height="1.1" fill="#d4d4d4"/><rect x="3.2" y="363.4" width="0.8" height="1.1" fill="#d4d4d4"/><rect x="0.0" y="365.0" width="5.6" height="1.1" fill="#4ec9b0"/><rect x="6.4" y="365.0" width="4.8" height="1.1" fill="#4ec9b0"/><rect x="11.2" y="365.0" width="0.8" height="1.1" fill="#d4d4d4"/><rect x="12.0" y="365.0" width="0.8" height="1.1" fill="#d4d4d4"/><rect x="12.8" y="365.0" width="9.6" height="1.1" fill="#dcdcaa"/><rect x="22.4" y="365.0" width="0.8" height="1.1" fill="#d4d4d4"/><rect x="23.2" y="365.0" width="5.6" height="1.1" fill="#4ec9b0"/><rect x="29.6" y="365.0" width="4.8" height="1.1" fill="#d4d4d4"/><rect x="34.4" y="365.0" width="0.8" height="1.1" fill="#d4d4d4"/><rect x="0.0" y="366.6" width="0.8" height="1.1" fill="#d4d4d4"/><rect x="3.2" y="368.2" width="6.4" height="1.1" fill="#6a9955"/><rect x="10.4" y="368.2" width="4.0" height="1.1" fill="#6a9955"/><rect x="3.2" y="369.8" width="5.6" height="1.1" fill="#4ec9b0"/><rect x="9.6" y="369.8" width="4.8" height="1.1" fill="#d4d4d4"/><rect x="15.2" y="369.8" width="0.8" height="1.1" fill="#d4d4d4"/><rect x="16.8" y="369.8" width="0.8" height="1.1" fill="#b5cea8"/><rect x="17.6" y="369.8" width="0.8" height="1.1" fill="#d4d4d4"/><rect x="3.2" y="371.4" width="5.6" height="1.1" fill="#4ec9b0"/><rect x="9.6" y="371.4" width="6.4" height="1.1" fill="#d4d4d4"/><rect x="16.8" y="371.4" width="0.8" height="1.1" fill="#d4d4d4"/><rect x="18.4" y="371.4" width="0.8" height="1.1" fill="#b5cea8"/><rect x="19.2" y="371.4" width="0.8" height="1.1" fill="#d4d4d4"/><rect x="3.2" y="373.0" width="4.8" height="1.1" fill="#c586c0"/><rect x="8.0" y="373.0" width="0.8" height="1.1" fill="#d4d4d4"/><rect x="8.8" y="373.0" width="6.4" height="1.1" fill="#d4d4d4"/><rect x="15.2" y="373.0" width="0.8" height="1.1" fill="#d4d4d4"/><rect x="16.0" y="373.0" width="10.4" height="1.1" fill="#d4d4d4"/><rect x="26.4" y="373.0" width="0.8" height="1.1" fill="#d4d4d4"/><rect x="3.2" y="374.6" width="0.8" height="1.1" fill="#d4d4d4"/><rect x="3.2" y="376.2" width="3.2" height="1.1" fill="#c586c0"/><rect x="7.2" y="376.2" width="6.4" height="1.1" fill="#d4d4d4"/><rect x="13.6" y="376.2" width="0.8" height="1.1" fill="#d4d4d4"/><rect x="6.4" y="377.8" width="4.8" height="1.1" fill="#c586c0"/><rect x="11.2" y="377.8" width="0.8" height="1.1" fill="#d4d4d4"/><rect x="12.0" y="377.8" width="7.2" height="1.1" fill="#d4d4d4"/><rect x="19.2" y="377.8" width="0.8" height="1.1" fill="#d4d4d4"/><rect x="6.4" y="379.4" width="0.8" height="1.1" fill="#d4d4d4"/><rect x="9.6" y="381.0" width="3.2" height="1.1" fill="#c586c0"/><rect x="12.8" y="381.0" width="0.8" height="1.1" fill="#d4d4d4"/><rect x="13.6" y="381.0" width="7.2" height="1.1" fill="#d4d4d4"/><rect x="20.8" y="381.0" width="0.8" height="1.1" fill="#d4d4d4"/><rect x="21.6" y="381.0" width="0.8" height="1.1" fill="#d4d4d4"/><rect x="12.8" y="382.6" width="7.2" height="1.1" fill="#d4d4d4"/><rect x="20.0" y="382.6" width="0.8" height="1.1" fill="#d4d4d4"/><rect x="20.8" y="382.6" width="0.8" height="1.1" fill="#d4d4d4"/><rect x="21.6" y="382.6" width="13.6" height="1.1" fill="#dcdcaa"/><rect x="35.2" y="382.6" width="0.8" height="1.1" fill="#d4d4d4"/><rect x="36.0" y="382.6" width="6.4" height="1.1" fill="#d4d4d4"/><rect x="42.4" y="382.6" width="0.8" height="1.1" fill="#d4d4d4"/><rect x="43.2" y="382.6" width="8.0" height="1.1" fill="#d4d4d4"/><rect x="51.2" y="382.6" width="0.8" height="1.1" fill="#d4d4d4"/><rect x="52.0" y="382.6" width="0.8" height="1.1" fill="#d4d4d4"/><rect x="12.8" y="384.2" width="7.2" height="1.1" fill="#d4d4d4"/><rect x="20.0" y="384.2" width="0.8" height="1.1" fill="#d4d4d4"/><rect x="20.8" y="384.2" width="0.8" height="1.1" fill="#d4d4d4"/><rect x="21.6" y="384.2" width="4.0" height="1.1" fill="#dcdcaa"/><rect x="25.6" y="384.2" width="0.8" height="1.1" fill="#d4d4d4"/><rect x="26.4" y="384.2" width="4.8" height="1.1" fill="#d4d4d4"/><rect x="31.2" y="384.2" width="0.8" height="1.1" fill="#d4d4d4"/><rect x="32.0" y="384.2" width="0.8" height="1.1" fill="#d4d4d4"/><rect x="12.8" y="385.8" width="7.2" height="1.1" fill="#d4d4d4"/><rect x="20.0" y="385.8" width="0.8" height="1.1" fill="#d4d4d4"/><rect x="20.8" y="385.8" width="0.8" height="1.1" fill="#d4d4d4"/><rect x="21.6" y="385.8" width="12.0" height="1.1" fill="#dcdcaa"/><rect x="33.6" y="385.8" width="0.8" height="1.1" fill="#d4d4d4"/><rect x="34.4" y="385.8" width="0.8" height="1.1" fill="#d4d4d4"/><rect x="35.2" y="385.8" width="0.8" height="1.1" fill="#d4d4d4"/><rect x="12.8" y="389.0" width="7.2" height="1.1" fill="#d4d4d4"/><rect x="20.0" y="389.0" width="0.8" height="1.1" fill="#d4d4d4"/><rect x="20.8" y="389.0" width="0.8" height="1.1" fill="#d4d4d4"/><rect x="21.6" y="389.0" width="8.8" height="1.1" fill="#dcdcaa"/><rect x="30.4" y="389.0" width="0.8" height="1.1" fill="#d4d4d4"/><rect x="31.2" y="389.0" width="6.4" height="1.1" fill="#d4d4d4"/><rect x="37.6" y="389.0" width="0.8" height="1.1" fill="#d4d4d4"/><rect x="38.4" y="389.0" width="8.0" height="1.1" fill="#d4d4d4"/><rect x="46.4" y="389.0" width="0.8" height="1.1" fill="#d4d4d4"/><rect x="48.0" y="389.0" width="6.4" height="1.1" fill="#d4d4d4"/><rect x="54.4" y="389.0" width="0.8" height="1.1" fill="#d4d4d4"/><rect x="55.2" y="389.0" width="0.8" height="1.1" fill="#d4d4d4"/><rect x="12.8" y="390.6" width="4.0" height="1.1" fill="#c586c0"/><rect x="17.6" y="390.6" width="0.8" height="1.1" fill="#d4d4d4"/><rect x="19.2" y="390.6" width="7.2" height="1.1" fill="#d4d4d4"/><rect x="26.4" y="390.6" width="0.8" height="1.1" fill="#d4d4d4"/><rect x="27.2" y="390.6" width="0.8" height="1.1" fill="#d4d4d4"/><rect x="28.0" y="390.6" width="7.2" height="1.1" fill="#dcdcaa"/><rect x="35.2" y="390.6" width="0.8" height="1.1" fill="#d4d4d4"/><rect x="36.0" y="390.6" width="0.8" height="1.1" fill="#d4d4d4"/><rect x="37.6" y="390.6" width="0.8" height="1.1" fill="#d4d4d4"/><rect x="39.2" y="390.6" width="1.6" height="1.1" fill="#6a9955"/><rect x="41.6" y="390.6" width="4.0" height="1.1" fill="#6a9955"/><rect x="46.4" y="390.6" width="2.4" height="1.1" fill="#6a9955"/><rect x="49.6" y="390.6" width="3.2" height="1.1" fill="#6a9955"/><rect x="53.6" y="390.6" width="3.2" height="1.1" fill="#6a9955"/><rect x="57.6" y="390.6" width="3.2" height="1.1" fill="#6a9955"/><rect x="61.6" y="390.6" width="7.2" height="1.1" fill="#6a9955"/><rect x="12.8" y="392.2" width="0.8" height="1.1" fill="#d4d4d4"/><rect x="16.0" y="393.8" width="4.8" height="1.1" fill="#d4d4d4"/><rect x="21.6" y="393.8" width="0.8" height="1.1" fill="#d4d4d4"/><rect x="23.2" y="393.8" width="7.2" height="1.1" fill="#d4d4d4"/><rect x="30.4" y="393.8" width="0.8" height="1.1" fill="#d4d4d4"/><rect x="31.2" y="393.8" width="0.8" height="1.1" fill="#d4d4d4"/><rect x="32.0" y="393.8" width="3.2" height="1.1" fill="#dcdcaa"/><rect x="35.2" y="393.8" width="0.8" height="1.1" fill="#d4d4d4"/><rect x="36.0" y="393.8" width="0.8" height="1.1" fill="#d4d4d4"/><rect x="36.8" y="393.8" width="0.8" height="1.1" fill="#d4d4d4"/><rect x="38.4" y="393.8" width="1.6" height="1.1" fill="#6a9955"/><rect x="40.8" y="393.8" width="5.6" height="1.1" fill="#6a9955"/><rect x="47.2" y="393.8" width="0.8" height="1.1" fill="#6a9955"/><rect x="48.8" y="393.8" width="3.2" height="1.1" fill="#6a9955"/><rect x="52.8" y="393.8" width="1.6" height="1.1" fill="#6a9955"/><rect x="55.2" y="393.8" width="0.8" height="1.1" fill="#6a9955"/><rect x="56.8" y="393.8" width="4.8" height="1.1" fill="#6a9955"/><rect x="62.4" y="393.8" width="5.6" height="1.1" fill="#6a9955"/><rect x="12.8" y="395.4" width="0.8" height="1.1" fill="#d4d4d4"/><rect x="12.8" y="397.0" width="4.0" height="1.1" fill="#c586c0"/><rect x="16.8" y="397.0" width="0.8" height="1.1" fill="#d4d4d4"/><rect x="9.6" y="398.6" width="3.2" height="1.1" fill="#c586c0"/><rect x="12.8" y="398.6" width="0.8" height="1.1" fill="#d4d4d4"/><rect x="13.6" y="398.6" width="7.2" height="1.1" fill="#d4d4d4"/><rect x="20.8" y="398.6" width="0.8" height="1.1" fill="#d4d4d4"/><rect x="21.6" y="398.6" width="0.8" height="1.1" fill="#d4d4d4"/><rect x="9.6" y="400.2" width="4.8" height="1.1" fill="#c586c0"/><rect x="15.2" y="400.2" width="11.2" height="1.1" fill="#d4d4d4"/><rect x="12.8" y="401.8" width="7.2" height="1.1" fill="#d4d4d4"/><rect x="20.0" y="401.8" width="0.8" height="1.1" fill="#d4d4d4"/><rect x="20.8" y="401.8" width="0.8" height="1.1" fill="#d4d4d4"/><rect x="21.6" y="401.8" width="13.6" height="1.1" fill="#dcdcaa"/><rect x="35.2" y="401.8" width="0.8" height="1.1" fill="#d4d4d4"/><rect x="36.0" y="401.8" width="6.4" height="1.1" fill="#d4d4d4"/><rect x="42.4" y="401.8" width="0.8" height="1.1" fill="#d4d4d4"/><rect x="43.2" y="401.8" width="8.0" height="1.1" fill="#d4d4d4"/><rect x="51.2" y="401.8" width="0.8" height="1.1" fill="#d4d4d4"/><rect x="52.0" y="401.8" width="0.8" height="1.1" fill="#d4d4d4"/><rect x="12.8" y="403.4" width="7.2" height="1.1" fill="#d4d4d4"/><rect x="20.0" y="403.4" width="0.8" height="1.1" fill="#d4d4d4"/><rect x="20.8" y="403.4" width="0.8" height="1.1" fill="#d4d4d4"/><rect x="21.6" y="403.4" width="4.0" height="1.1" fill="#dcdcaa"/><rect x="25.6" y="403.4" width="0.8" height="1.1" fill="#d4d4d4"/><rect x="26.4" y="403.4" width="4.8" height="1.1" fill="#d4d4d4"/><rect x="31.2" y="403.4" width="0.8" height="1.1" fill="#d4d4d4"/><rect x="32.0" y="403.4" width="0.8" height="1.1" fill="#d4d4d4"/><rect x="12.8" y="405.0" width="7.2" height="1.1" fill="#d4d4d4"/><rect x="20.0" y="405.0" width="0.8" height="1.1" fill="#d4d4d4"/><rect x="20.8" y="405.0" width="0.8" height="1.1" fill="#d4d4d4"/><rect x="21.6" y="405.0" width="12.0" height="1.1" fill="#dcdcaa"/><rect x="33.6" y="405.0" width="0.8" height="1.1" fill="#d4d4d4"/><rect x="34.4" y="405.0" width="0.8" height="1.1" fill="#d4d4d4"/><rect x="35.2" y="405.0" width="0.8" height="1.1" fill="#d4d4d4"/><rect x="12.8" y="408.2" width="7.2" height="1.1" fill="#d4d4d4"/><rect x="20.0" y="408.2" width="0.8" height="1.1" fill="#d4d4d4"/><rect x="20.8" y="408.2" width="0.8" height="1.1" fill="#d4d4d4"/><rect x="21.6" y="408.2" width="8.8" height="1.1" fill="#dcdcaa"/><rect x="30.4" y="408.2" width="0.8" height="1.1" fill="#d4d4d4"/><rect x="31.2" y="408.2" width="6.4" height="1.1" fill="#d4d4d4"/><rect x="37.6" y="408.2" width="0.8" height="1.1" fill="#d4d4d4"/><rect x="38.4" y="408.2" width="8.0" height="1.1" fill="#d4d4d4"/><rect x="46.4" y="408.2" width="0.8" height="1.1" fill="#d4d4d4"/><rect x="48.0" y="408.2" width="6.4" height="1.1" fill="#d4d4d4"/><rect x="54.4" y="408.2" width="0.8" height="1.1" fill="#d4d4d4"/><rect x="55.2" y="408.2" width="0.8" height="1.1" fill="#d4d4d4"/><rect x="12.8" y="409.8" width="4.0" height="1.1" fill="#c586c0"/><rect x="17.6" y="409.8" width="0.8" height="1.1" fill="#d4d4d4"/><rect x="19.2" y="409.8" width="7.2" height="1.1" fill="#d4d4d4"/><rect x="26.4" y="409.8" width="0.8" height="1.1" fill="#d4d4d4"/><rect x="27.2" y="409.8" width="0.8" height="1.1" fill="#d4d4d4"/><rect x="28.0" y="409.8" width="7.2" height="1.1" fill="#dcdcaa"/><rect x="35.2" y="409.8" width="0.8" height="1.1" fill="#d4d4d4"/><rect x="36.0" y="409.8" width="0.8" height="1.1" fill="#d4d4d4"/><rect x="37.6" y="409.8" width="0.8" height="1.1" fill="#d4d4d4"/><rect x="39.2" y="409.8" width="1.6" height="1.1" fill="#6a9955"/><rect x="41.6" y="409.8" width="4.0" height="1.1" fill="#6a9955"/><rect x="46.4" y="409.8" width="2.4" height="1.1" fill="#6a9955"/><rect x="49.6" y="409.8" width="3.2" height="1.1" fill="#6a9955"/><rect x="53.6" y="409.8" width="3.2" height="1.1" fill="#6a9955"/><rect x="57.6" y="409.8" width="3.2" height="1.1" fill="#6a9955"/><rect x="61.6" y="409.8" width="7.2" height="1.1" fill="#6a9955"/><rect x="12.8" y="411.4" width="0.8" height="1.1" fill="#d4d4d4"/><rect x="16.0" y="413.0" width="4.8" height="1.1" fill="#d4d4d4"/><rect x="21.6" y="413.0" width="0.8" height="1.1" fill="#d4d4d4"/><rect x="23.2" y="413.0" width="7.2" height="1.1" fill="#d4d4d4"/><rect x="30.4" y="413.0" width="0.8" height="1.1" fill="#d4d4d4"/><rect x="31.2" y="413.0" width="0.8" height="1.1" fill="#d4d4d4"/><rect x="32.0" y="413.0" width="3.2" height="1.1" fill="#dcdcaa"/><rect x="35.2" y="413.0" width="0.8" height="1.1" fill="#d4d4d4"/><rect x="36.0" y="413.0" width="0.8" height="1.1" fill="#d4d4d4"/><rect x="36.8" y="413.0" width="0.8" height="1.1" fill="#d4d4d4"/><rect x="38.4" y="413.0" width="1.6" height="1.1" fill="#6a9955"/><rect x="40.8" y="413.0" width="5.6" height="1.1" fill="#6a9955"/><rect x="47.2" y="413.0" width="0.8" height="1.1" fill="#6a9955"/><rect x="48.8" y="413.0" width="3.2" height="1.1" fill="#6a9955"/><rect x="52.8" y="413.0" width="1.6" height="1.1" fill="#6a9955"/><rect x="55.2" y="413.0" width="0.8" height="1.1" fill="#6a9955"/><rect x="56.8" y="413.0" width="4.8" height="1.1" fill="#6a9955"/><rect x="62.4" y="413.0" width="5.6" height="1.1" fill="#6a9955"/><rect x="12.8" y="414.6" width="0.8" height="1.1" fill="#d4d4d4"/><rect x="9.6" y="416.2" width="4.8" height="1.1" fill="#c586c0"/><rect x="12.8" y="417.8" width="4.0" height="1.1" fill="#c586c0"/><rect x="16.8" y="417.8" width="0.8" height="1.1" fill="#d4d4d4"/><rect x="6.4" y="419.4" width="0.8" height="1.1" fill="#d4d4d4"/><rect x="6.4" y="422.6" width="4.0" height="1.1" fill="#c586c0"/><rect x="10.4" y="422.6" width="0.8" height="1.1" fill="#d4d4d4"/><rect x="3.2" y="425.8" width="3.2" height="1.1" fill="#c586c0"/><rect x="7.2" y="425.8" width="6.4" height="1.1" fill="#d4d4d4"/><rect x="13.6" y="425.8" width="0.8" height="1.1" fill="#d4d4d4"/><rect x="6.4" y="427.4" width="1.6" height="1.1" fill="#6a9955"/><rect x="8.8" y="427.4" width="3.2" height="1.1" fill="#6a9955"/><rect x="12.8" y="427.4" width="2.4" height="1.1" fill="#6a9955"/><rect x="16.0" y="427.4" width="3.2" height="1.1" fill="#6a9955"/><rect x="20.0" y="427.4" width="4.8" height="1.1" fill="#6a9955"/><rect x="25.6" y="427.4" width="2.4" height="1.1" fill="#6a9955"/><rect x="28.8" y="427.4" width="1.6" height="1.1" fill="#6a9955"/><rect x="31.2" y="427.4" width="4.8" height="1.1" fill="#6a9955"/><rect x="36.8" y="427.4" width="2.4" height="1.1" fill="#6a9955"/><rect x="40.0" y="427.4" width="5.6" height="1.1" fill="#6a9955"/><rect x="6.4" y="429.0" width="9.6" height="1.1" fill="#dcdcaa"/><rect x="16.0" y="429.0" width="0.8" height="1.1" fill="#d4d4d4"/><rect x="16.8" y="429.0" width="6.4" height="1.1" fill="#d4d4d4"/><rect x="23.2" y="429.0" width="0.8" height="1.1" fill="#d4d4d4"/><rect x="24.0" y="429.0" width="10.4" height="1.1" fill="#d4d4d4"/><rect x="34.4" y="429.0" width="0.8" height="1.1" fill="#d4d4d4"/><rect x="36.0" y="429.0" width="2.4" height="1.1" fill="#d4d4d4"/><rect x="38.4" y="429.0" width="0.8" height="1.1" fill="#d4d4d4"/><rect x="39.2" y="429.0" width="0.8" height="1.1" fill="#d4d4d4"/><rect x="6.4" y="430.6" width="1.6" height="1.1" fill="#6a9955"/><rect x="8.8" y="430.6" width="3.2" height="1.1" fill="#6a9955"/><rect x="12.8" y="430.6" width="2.4" height="1.1" fill="#6a9955"/><rect x="16.0" y="430.6" width="4.8" height="1.1" fill="#6a9955"/><rect x="21.6" y="430.6" width="2.4" height="1.1" fill="#6a9955"/><rect x="24.8" y="430.6" width="6.4" height="1.1" fill="#6a9955"/><rect x="32.0" y="430.6" width="2.4" height="1.1" fill="#6a9955"/><rect x="35.2" y="430.6" width="3.2" height="1.1" fill="#6a9955"/><rect x="39.2" y="430.6" width="1.6" height="1.1" fill="#6a9955"/><rect x="41.6" y="430.6" width="4.0" height="1.1" fill="#6a9955"/><rect x="6.4" y="432.2" width="2.4" height="1.1" fill="#d4d4d4"/><rect x="8.8" y="432.2" width="0.8" height="1.1" fill="#d4d4d4"/><rect x="9.6" y="432.2" width="6.4" height="1.1" fill="#dcdcaa"/><rect x="16.0" y="432.2" width="0.8" height="1.1" fill="#d4d4d4"/><rect x="16.8" y="432.2" width="4.8" height="1.1" fill="#d4d4d4"/><rect x="22.4" y="432.2" width="0.8" height="1.1" fill="#d4d4d4"/><rect x="24.0" y="432.2" width="3.2" height="1.1" fill="#b5cea8"/><rect x="27.2" y="432.2" width="0.8" height="1.1" fill="#d4d4d4"/><rect x="28.0" y="432.2" width="0.8" height="1.1" fill="#d4d4d4"/><rect x="30.4" y="432.2" width="4.8" height="1.1" fill="#6a9955"/><rect x="36.0" y="432.2" width="3.2" height="1.1" fill="#6a9955"/><rect x="40.0" y="432.2" width="4.0" height="1.1" fill="#6a9955"/><rect x="44.8" y="432.2" width="6.4" height="1.1" fill="#6a9955"/><rect x="52.0" y="432.2" width="2.4" height="1.1" fill="#6a9955"/><rect x="6.4" y="433.8" width="1.6" height="1.1" fill="#6a9955"/><rect x="8.8" y="433.8" width="3.2" height="1.1" fill="#6a9955"/><rect x="12.8" y="433.8" width="0.8" height="1.1" fill="#6a9955"/><rect x="14.4" y="433.8" width="4.0" height="1.1" fill="#6a9955"/><rect x="19.2" y="433.8" width="1.6" height="1.1" fill="#6a9955"/><rect x="21.6" y="433.8" width="0.8" height="1.1" fill="#6a9955"/><rect x="23.2" y="433.8" width="1.6" height="1.1" fill="#6a9955"/><rect x="25.6" y="433.8" width="3.2" height="1.1" fill="#6a9955"/><rect x="29.6" y="433.8" width="2.4" height="1.1" fill="#6a9955"/><rect x="32.8" y="433.8" width="4.0" height="1.1" fill="#6a9955"/><rect x="37.6" y="433.8" width="3.2" height="1.1" fill="#6a9955"/><rect x="41.6" y="433.8" width="7.2" height="1.1" fill="#6a9955"/><rect x="6.4" y="435.4" width="4.8" height="1.1" fill="#d4d4d4"/><rect x="12.0" y="435.4" width="0.8" height="1.1" fill="#d4d4d4"/><rect x="13.6" y="435.4" width="2.4" height="1.1" fill="#d4d4d4"/><rect x="16.0" y="435.4" width="0.8" height="1.1" fill="#d4d4d4"/><rect x="16.8" y="435.4" width="6.4" height="1.1" fill="#dcdcaa"/><rect x="23.2" y="435.4" width="0.8" height="1.1" fill="#d4d4d4"/><rect x="24.0" y="435.4" width="3.2" height="1.1" fill="#b5cea8"/><rect x="27.2" y="435.4" width="0.8" height="1.1" fill="#d4d4d4"/><rect x="28.0" y="435.4" width="0.8" height="1.1" fill="#d4d4d4"/><rect x="6.4" y="437.0" width="1.6" height="1.1" fill="#6a9955"/><rect x="8.8" y="437.0" width="3.2" height="1.1" fill="#6a9955"/><rect x="12.8" y="437.0" width="2.4" height="1.1" fill="#6a9955"/><rect x="16.0" y="437.0" width="3.2" height="1.1" fill="#6a9955"/><rect x="20.0" y="437.0" width="4.8" height="1.1" fill="#6a9955"/><rect x="25.6" y="437.0" width="3.2" height="1.1" fill="#6a9955"/><rect x="29.6" y="437.0" width="1.6" height="1.1" fill="#6a9955"/><rect x="32.0" y="437.0" width="8.0" height="1.1" fill="#6a9955"/><rect x="6.4" y="438.6" width="9.6" height="1.1" fill="#dcdcaa"/><rect x="16.0" y="438.6" width="0.8" height="1.1" fill="#d4d4d4"/><rect x="16.8" y="438.6" width="6.4" height="1.1" fill="#d4d4d4"/><rect x="23.2" y="438.6" width="0.8" height="1.1" fill="#d4d4d4"/><rect x="24.0" y="438.6" width="10.4" height="1.1" fill="#d4d4d4"/><rect x="34.4" y="438.6" width="0.8" height="1.1" fill="#d4d4d4"/><rect x="36.0" y="438.6" width="3.2" height="1.1" fill="#d4d4d4"/><rect x="39.2" y="438.6" width="0.8" height="1.1" fill="#d4d4d4"/><rect x="40.0" y="438.6" width="0.8" height="1.1" fill="#d4d4d4"/><rect x="6.4" y="440.2" width="4.0" height="1.1" fill="#c586c0"/><rect x="10.4" y="440.2" width="0.8" height="1.1" fill="#d4d4d4"/><rect x="3.2" y="443.4" width="5.6" height="1.1" fill="#c586c0"/><rect x="8.8" y="443.4" width="0.8" height="1.1" fill="#d4d4d4"/><rect x="6.4" y="445.0" width="4.0" height="1.1" fill="#c586c0"/><rect x="10.4" y="445.0" width="0.8" height="1.1" fill="#d4d4d4"/><rect x="3.2" y="446.6" width="0.8" height="1.1" fill="#d4d4d4"/><rect x="3.2" y="448.2" width="4.8" height="1.1" fill="#c586c0"/><rect x="8.8" y="448.2" width="4.8" height="1.1" fill="#d4d4d4"/><rect x="13.6" y="448.2" width="0.8" height="1.1" fill="#d4d4d4"/><rect x="0.0" y="449.8" width="0.8" height="1.1" fill="#d4d4d4"/><rect x="0.0" y="453.0" width="5.6" height="1.1" fill="#4ec9b0"/><rect x="6.4" y="453.0" width="4.8" height="1.1" fill="#4ec9b0"/><rect x="11.2" y="453.0" width="0.8" height="1.1" fill="#d4d4d4"/><rect x="12.0" y="453.0" width="0.8" height="1.1" fill="#d4d4d4"/><rect x="12.8" y="453.0" width="13.6" height="1.1" fill="#dcdcaa"/><rect x="26.4" y="453.0" width="0.8" height="1.1" fill="#d4d4d4"/><rect x="28.0" y="453.0" width="5.6" height="1.1" fill="#4ec9b0"/><rect x="34.4" y="453.0" width="4.8" height="1.1" fill="#d4d4d4"/><rect x="40.0" y="453.0" width="0.8" height="1.1" fill="#d4d4d4"/><rect x="0.0" y="454.6" width="0.8" height="1.1" fill="#d4d4d4"/><rect x="3.2" y="456.2" width="5.6" height="1.1" fill="#4ec9b0"/><rect x="9.6" y="456.2" width="6.4" height="1.1" fill="#d4d4d4"/><rect x="16.0" y="456.2" width="0.8" height="1.1" fill="#d4d4d4"/><rect x="16.8" y="456.2" width="0.8" height="1.1" fill="#b5cea8"/><rect x="17.6" y="456.2" width="0.8" height="1.1" fill="#d4d4d4"/><rect x="18.4" y="456.2" width="0.8" height="1.1" fill="#d4d4d4"/><rect x="3.2" y="457.8" width="14.4" height="1.1" fill="#dcdcaa"/><rect x="17.6" y="457.8" width="0.8" height="1.1" fill="#d4d4d4"/><rect x="18.4" y="457.8" width="6.4" height="1.1" fill="#d4d4d4"/><rect x="24.8" y="457.8" width="0.8" height="1.1" fill="#d4d4d4"/><rect x="26.4" y="457.8" width="4.8" height="1.1" fill="#d4d4d4"/><rect x="31.2" y="457.8" width="0.8" height="1.1" fill="#d4d4d4"/><rect x="32.8" y="457.8" width="0.8" height="1.1" fill="#b5cea8"/><rect x="33.6" y="457.8" width="0.8" height="1.1" fill="#d4d4d4"/><rect x="34.4" y="457.8" width="0.8" height="1.1" fill="#d4d4d4"/><rect x="36.8" y="457.8" width="4.8" height="1.1" fill="#6a9955"/><rect x="42.4" y="457.8" width="4.8" height="1.1" fill="#6a9955"/><rect x="48.0" y="457.8" width="6.4" height="1.1" fill="#6a9955"/><rect x="3.2" y="459.4" width="5.6" height="1.1" fill="#4ec9b0"/><rect x="9.6" y="459.4" width="4.8" height="1.1" fill="#d4d4d4"/><rect x="15.2" y="459.4" width="0.8" height="1.1" fill="#d4d4d4"/><rect x="16.8" y="459.4" width="0.8" height="1.1" fill="#d4d4d4"/><rect x="17.6" y="459.4" width="5.6" height="1.1" fill="#4ec9b0"/><rect x="23.2" y="459.4" width="0.8" height="1.1" fill="#d4d4d4"/><rect x="24.0" y="459.4" width="6.4" height="1.1" fill="#d4d4d4"/><rect x="30.4" y="459.4" width="0.8" height="1.1" fill="#d4d4d4"/><rect x="31.2" y="459.4" width="0.8" height="1.1" fill="#b5cea8"/><rect x="32.0" y="459.4" width="0.8" height="1.1" fill="#d4d4d4"/><rect x="33.6" y="459.4" width="0.8" height="1.1" fill="#d4d4d4"/><rect x="35.2" y="459.4" width="5.6" height="1.1" fill="#4ec9b0"/><rect x="40.8" y="459.4" width="0.8" height="1.1" fill="#d4d4d4"/><rect x="41.6" y="459.4" width="6.4" height="1.1" fill="#d4d4d4"/><rect x="48.0" y="459.4" width="0.8" height="1.1" fill="#d4d4d4"/><rect x="48.8" y="459.4" width="0.8" height="1.1" fill="#b5cea8"/><rect x="49.6" y="459.4" width="0.8" height="1.1" fill="#d4d4d4"/><rect x="51.2" y="459.4" width="0.8" height="1.1" fill="#d4d4d4"/><rect x="52.0" y="459.4" width="0.8" height="1.1" fill="#d4d4d4"/><rect x="53.6" y="459.4" width="0.8" height="1.1" fill="#b5cea8"/><rect x="54.4" y="459.4" width="0.8" height="1.1" fill="#d4d4d4"/><rect x="55.2" y="459.4" width="0.8" height="1.1" fill="#d4d4d4"/><rect x="3.2" y="462.6" width="4.8" height="1.1" fill="#c586c0"/><rect x="8.8" y="462.6" width="4.8" height="1.1" fill="#d4d4d4"/><rect x="13.6" y="462.6" width="0.8" height="1.1" fill="#d4d4d4"/><rect x="0.0" y="464.2" width="0.8" height="1.1" fill="#d4d4d4"/><rect x="0.0" y="467.4" width="3.2" height="1.1" fill="#569cd6"/><rect x="4.0" y="467.4" width="4.8" height="1.1" fill="#4ec9b0"/><rect x="8.8" y="467.4" width="0.8" height="1.1" fill="#d4d4d4"/><rect x="9.6" y="467.4" width="0.8" height="1.1" fill="#d4d4d4"/><rect x="10.4" y="467.4" width="10.4" height="1.1" fill="#dcdcaa"/><rect x="20.8" y="467.4" width="0.8" height="1.1" fill="#d4d4d4"/><rect x="21.6" y="467.4" width="5.6" height="1.1" fill="#4ec9b0"/><rect x="28.0" y="467.4" width="4.8" height="1.1" fill="#d4d4d4"/><rect x="32.8" y="467.4" width="0.8" height="1.1" fill="#d4d4d4"/><rect x="34.4" y="467.4" width="5.6" height="1.1" fill="#4ec9b0"/><rect x="40.8" y="467.4" width="8.8" height="1.1" fill="#d4d4d4"/><rect x="49.6" y="467.4" width="0.8" height="1.1" fill="#d4d4d4"/><rect x="0.0" y="469.0" width="0.8" height="1.1" fill="#d4d4d4"/><rect x="3.2" y="470.6" width="4.8" height="1.1" fill="#c586c0"/><rect x="8.0" y="470.6" width="0.8" height="1.1" fill="#d4d4d4"/><rect x="8.8" y="470.6" width="6.4" height="1.1" fill="#d4d4d4"/><rect x="15.2" y="470.6" width="0.8" height="1.1" fill="#d4d4d4"/><rect x="16.0" y="470.6" width="10.4" height="1.1" fill="#d4d4d4"/><rect x="26.4" y="470.6" width="0.8" height="1.1" fill="#d4d4d4"/><rect x="3.2" y="472.2" width="0.8" height="1.1" fill="#d4d4d4"/><rect x="3.2" y="473.8" width="3.2" height="1.1" fill="#c586c0"/><rect x="7.2" y="473.8" width="6.4" height="1.1" fill="#d4d4d4"/><rect x="13.6" y="473.8" width="0.8" height="1.1" fill="#d4d4d4"/><rect x="6.4" y="475.4" width="5.6" height="1.1" fill="#6a9955"/><rect x="12.8" y="475.4" width="2.4" height="1.1" fill="#6a9955"/><rect x="16.0" y="475.4" width="3.2" height="1.1" fill="#6a9955"/><rect x="6.4" y="478.6" width="4.8" height="1.1" fill="#c586c0"/><rect x="11.2" y="478.6" width="0.8" height="1.1" fill="#d4d4d4"/><rect x="12.0" y="478.6" width="7.2" height="1.1" fill="#d4d4d4"/><rect x="19.2" y="478.6" width="0.8" height="1.1" fill="#d4d4d4"/><rect x="6.4" y="480.2" width="0.8" height="1.1" fill="#d4d4d4"/><rect x="9.6" y="481.8" width="3.2" height="1.1" fill="#c586c0"/><rect x="12.8" y="481.8" width="0.8" height="1.1" fill="#d4d4d4"/><rect x="13.6" y="481.8" width="7.2" height="1.1" fill="#d4d4d4"/><rect x="20.8" y="481.8" width="0.8" height="1.1" fill="#d4d4d4"/><rect x="21.6" y="481.8" width="0.8" height="1.1" fill="#d4d4d4"/><rect x="12.8" y="483.4" width="7.2" height="1.1" fill="#d4d4d4"/><rect x="20.0" y="483.4" width="0.8" height="1.1" fill="#d4d4d4"/><rect x="20.8" y="483.4" width="0.8" height="1.1" fill="#d4d4d4"/><rect x="21.6" y="483.4" width="13.6" height="1.1" fill="#dcdcaa"/><rect x="35.2" y="483.4" width="0.8" height="1.1" fill="#d4d4d4"/><rect x="36.0" y="483.4" width="6.4" height="1.1" fill="#d4d4d4"/><rect x="42.4" y="483.4" width="0.8" height="1.1" fill="#d4d4d4"/><rect x="43.2" y="483.4" width="8.0" height="1.1" fill="#d4d4d4"/><rect x="51.2" y="483.4" width="0.8" height="1.1" fill="#d4d4d4"/><rect x="52.0" y="483.4" width="0.8" height="1.1" fill="#d4d4d4"/><rect x="12.8" y="485.0" width="7.2" height="1.1" fill="#d4d4d4"/><rect x="20.0" y="485.0" width="0.8" height="1.1" fill="#d4d4d4"/><rect x="20.8" y="485.0" width="0.8" height="1.1" fill="#d4d4d4"/><rect x="21.6" y="485.0" width="4.0" height="1.1" fill="#dcdcaa"/><rect x="25.6" y="485.0" width="0.8" height="1.1" fill="#d4d4d4"/><rect x="26.4" y="485.0" width="4.8" height="1.1" fill="#d4d4d4"/><rect x="31.2" y="485.0" width="0.8" height="1.1" fill="#d4d4d4"/><rect x="32.0" y="485.0" width="0.8" height="1.1" fill="#d4d4d4"/><rect x="12.8" y="486.6" width="7.2" height="1.1" fill="#d4d4d4"/><rect x="20.0" y="486.6" width="0.8" height="1.1" fill="#d4d4d4"/><rect x="20.8" y="486.6" width="0.8" height="1.1" fill="#d4d4d4"/><rect x="21.6" y="486.6" width="4.0" height="1.1" fill="#dcdcaa"/><rect x="25.6" y="486.6" width="0.8" height="1.1" fill="#d4d4d4"/><rect x="26.4" y="486.6" width="8.8" height="1.1" fill="#d4d4d4"/><rect x="35.2" y="486.6" width="0.8" height="1.1" fill="#d4d4d4"/><rect x="36.0" y="486.6" width="0.8" height="1.1" fill="#d4d4d4"/><rect x="12.8" y="488.2" width="7.2" height="1.1" fill="#d4d4d4"/><rect x="20.0" y="488.2" width="0.8" height="1.1" fill="#d4d4d4"/><rect x="20.8" y="488.2" width="0.8" height="1.1" fill="#d4d4d4"/><rect x="21.6" y="488.2" width="12.0" height="1.1" fill="#dcdcaa"/><rect x="33.6" y="488.2" width="0.8" height="1.1" fill="#d4d4d4"/><rect x="34.4" y="488.2" width="0.8" height="1.1" fill="#d4d4d4"/><rect x="35.2" y="488.2" width="0.8" height="1.1" fill="#d4d4d4"/><rect x="12.8" y="489.8" width="4.0" height="1.1" fill="#c586c0"/><rect x="16.8" y="489.8" width="0.8" height="1.1" fill="#d4d4d4"/><rect x="9.6" y="491.4" width="3.2" height="1.1" fill="#c586c0"/><rect x="12.8" y="491.4" width="0.8" height="1.1" fill="#d4d4d4"/><rect x="13.6" y="491.4" width="7.2" height="1.1" fill="#d4d4d4"/><rect x="20.8" y="491.4" width="0.8" height="1.1" fill="#d4d4d4"/><rect x="21.6" y="491.4" width="0.8" height="1.1" fill="#d4d4d4"/><rect x="9.6" y="493.0" width="4.8" height="1.1" fill="#c586c0"/><rect x="15.2" y="493.0" width="11.2" height="1.1" fill="#d4d4d4"/><rect x="12.8" y="494.6" width="7.2" height="1.1" fill="#d4d4d4"/><rect x="20.0" y="494.6" width="0.8" height="1.1" fill="#d4d4d4"/><rect x="20.8" y="494.6" width="0.8" height="1.1" fill="#d4d4d4"/><rect x="21.6" y="494.6" width="13.6" height="1.1" fill="#dcdcaa"/><rect x="35.2" y="494.6" width="0.8" height="1.1" fill="#d4d4d4"/><rect x="36.0" y="494.6" width="6.4" height="1.1" fill="#d4d4d4"/><rect x="42.4" y="494.6" width="0.8" height="1.1" fill="#d4d4d4"/><rect x="43.2" y="494.6" width="8.0" height="1.1" fill="#d4d4d4"/><rect x="51.2" y="494.6" width="0.8" height="1.1" fill="#d4d4d4"/><rect x="52.0" y="494.6" width="0.8" height="1.1" fill="#d4d4d4"/><rect x="12.8" y="496.2" width="7.2" height="1.1" fill="#d4d4d4"/><rect x="20.0" y="496.2" width="0.8" height="1.1" fill="#d4d4d4"/><rect x="20.8" y="496.2" width="0.8" height="1.1" fill="#d4d4d4"/><rect x="21.6" y="496.2" width="4.0" height="1.1" fill="#dcdcaa"/><rect x="25.6" y="496.2" width="0.8" height="1.1" fill="#d4d4d4"/><rect x="26.4" y="496.2" width="4.8" height="1.1" fill="#d4d4d4"/><rect x="31.2" y="496.2" width="0.8" height="1.1" fill="#d4d4d4"/><rect x="32.0" y="496.2" width="0.8" height="1.1" fill="#d4d4d4"/><rect x="12.8" y="497.8" width="7.2" height="1.1" fill="#d4d4d4"/><rect x="20.0" y="497.8" width="0.8" height="1.1" fill="#d4d4d4"/><rect x="20.8" y="497.8" width="0.8" height="1.1" fill="#d4d4d4"/><rect x="21.6" y="497.8" width="4.0" height="1.1" fill="#dcdcaa"/><rect x="25.6" y="497.8" width="0.8" height="1.1" fill="#d4d4d4"/><rect x="26.4" y="497.8" width="8.8" height="1.1" fill="#d4d4d4"/><rect x="35.2" y="497.8" width="0.8" height="1.1" fill="#d4d4d4"/><rect x="36.0" y="497.8" width="0.8" height="1.1" fill="#d4d4d4"/><rect x="12.8" y="499.4" width="7.2" height="1.1" fill="#d4d4d4"/><rect x="20.0" y="499.4" width="0.8" height="1.1" fill="#d4d4d4"/><rect x="20.8" y="499.4" width="0.8" height="1.1" fill="#d4d4d4"/><rect x="21.6" y="499.4" width="12.0" height="1.1" fill="#dcdcaa"/><rect x="33.6" y="499.4" width="0.8" height="1.1" fill="#d4d4d4"/><rect x="34.4" y="499.4" width="0.8" height="1.1" fill="#d4d4d4"/><rect x="35.2" y="499.4" width="0.8" height="1.1" fill="#d4d4d4"/><rect x="9.6" y="501.0" width="4.8" height="1.1" fill="#c586c0"/><rect x="12.8" y="502.6" width="4.0" height="1.1" fill="#c586c0"/><rect x="16.8" y="502.6" width="0.8" height="1.1" fill="#d4d4d4"/><rect x="6.4" y="504.2" width="0.8" height="1.1" fill="#d4d4d4"/><rect x="6.4" y="505.8" width="4.0" height="1.1" fill="#c586c0"/><rect x="10.4" y="505.8" width="0.8" height="1.1" fill="#d4d4d4"/><rect x="3.2" y="509.0" width="3.2" height="1.1" fill="#c586c0"/><rect x="7.2" y="509.0" width="6.4" height="1.1" fill="#d4d4d4"/><rect x="13.6" y="509.0" width="0.8" height="1.1" fill="#d4d4d4"/><rect x="6.4" y="510.6" width="1.6" height="1.1" fill="#6a9955"/><rect x="8.8" y="510.6" width="3.2" height="1.1" fill="#6a9955"/><rect x="12.8" y="510.6" width="2.4" height="1.1" fill="#6a9955"/><rect x="16.0" y="510.6" width="3.2" height="1.1" fill="#6a9955"/><rect x="20.0" y="510.6" width="4.8" height="1.1" fill="#6a9955"/><rect x="25.6" y="510.6" width="2.4" height="1.1" fill="#6a9955"/><rect x="28.8" y="510.6" width="1.6" height="1.1" fill="#6a9955"/><rect x="31.2" y="510.6" width="4.8" height="1.1" fill="#6a9955"/><rect x="36.8" y="510.6" width="2.4" height="1.1" fill="#6a9955"/><rect x="40.0" y="510.6" width="5.6" height="1.1" fill="#6a9955"/><rect x="6.4" y="512.2" width="9.6" height="1.1" fill="#dcdcaa"/><rect x="16.0" y="512.2" width="0.8" height="1.1" fill="#d4d4d4"/><rect x="16.8" y="512.2" width="6.4" height="1.1" fill="#d4d4d4"/><rect x="23.2" y="512.2" width="0.8" height="1.1" fill="#d4d4d4"/><rect x="24.0" y="512.2" width="10.4" height="1.1" fill="#d4d4d4"/><rect x="34.4" y="512.2" width="0.8" height="1.1" fill="#d4d4d4"/><rect x="36.0" y="512.2" width="2.4" height="1.1" fill="#d4d4d4"/><rect x="38.4" y="512.2" width="0.8" height="1.1" fill="#d4d4d4"/><rect x="39.2" y="512.2" width="0.8" height="1.1" fill="#d4d4d4"/><rect x="6.4" y="513.8" width="1.6" height="1.1" fill="#6a9955"/><rect x="8.8" y="513.8" width="3.2" height="1.1" fill="#6a9955"/><rect x="12.8" y="513.8" width="2.4" height="1.1" fill="#6a9955"/><rect x="16.0" y="513.8" width="4.8" height="1.1" fill="#6a9955"/><rect x="21.6" y="513.8" width="2.4" height="1.1" fill="#6a9955"/><rect x="24.8" y="513.8" width="6.4" height="1.1" fill="#6a9955"/><rect x="32.0" y="513.8" width="2.4" height="1.1" fill="#6a9955"/><rect x="35.2" y="513.8" width="3.2" height="1.1" fill="#6a9955"/><rect x="39.2" y="513.8" width="1.6" height="1.1" fill="#6a9955"/><rect x="41.6" y="513.8" width="4.0" height="1.1" fill="#6a9955"/><rect x="6.4" y="515.4" width="2.4" height="1.1" fill="#d4d4d4"/><rect x="8.8" y="515.4" width="0.8" height="1.1" fill="#d4d4d4"/><rect x="9.6" y="515.4" width="6.4" height="1.1" fill="#dcdcaa"/><rect x="16.0" y="515.4" width="0.8" height="1.1" fill="#d4d4d4"/><rect x="16.8" y="515.4" width="4.8" height="1.1" fill="#d4d4d4"/><rect x="22.4" y="515.4" width="0.8" height="1.1" fill="#d4d4d4"/><rect x="24.0" y="515.4" width="3.2" height="1.1" fill="#b5cea8"/><rect x="27.2" y="515.4" width="0.8" height="1.1" fill="#d4d4d4"/><rect x="28.0" y="515.4" width="0.8" height="1.1" fill="#d4d4d4"/><rect x="6.4" y="517.0" width="1.6" height="1.1" fill="#6a9955"/><rect x="8.8" y="517.0" width="3.2" height="1.1" fill="#6a9955"/><rect x="12.8" y="517.0" width="0.8" height="1.1" fill="#6a9955"/><rect x="14.4" y="517.0" width="4.0" height="1.1" fill="#6a9955"/><rect x="19.2" y="517.0" width="1.6" height="1.1" fill="#6a9955"/><rect x="21.6" y="517.0" width="0.8" height="1.1" fill="#6a9955"/><rect x="23.2" y="517.0" width="1.6" height="1.1" fill="#6a9955"/><rect x="25.6" y="517.0" width="3.2" height="1.1" fill="#6a9955"/><rect x="29.6" y="517.0" width="2.4" height="1.1" fill="#6a9955"/><rect x="32.8" y="517.0" width="4.0" height="1.1" fill="#6a9955"/><rect x="37.6" y="517.0" width="3.2" height="1.1" fill="#6a9955"/><rect x="41.6" y="517.0" width="7.2" height="1.1" fill="#6a9955"/><rect x="6.4" y="518.6" width="2.4" height="1.1" fill="#d4d4d4"/><rect x="8.8" y="518.6" width="0.8" height="1.1" fill="#d4d4d4"/><rect x="9.6" y="518.6" width="6.4" height="1.1" fill="#dcdcaa"/><rect x="16.0" y="518.6" width="0.8" height="1.1" fill="#d4d4d4"/><rect x="16.8" y="518.6" width="8.8" height="1.1" fill="#d4d4d4"/><rect x="25.6" y="518.6" width="0.8" height="1.1" fill="#d4d4d4"/><rect x="26.4" y="518.6" width="0.8" height="1.1" fill="#d4d4d4"/><rect x="6.4" y="520.2" width="1.6" height="1.1" fill="#6a9955"/><rect x="8.8" y="520.2" width="7.2" height="1.1" fill="#6a9955"/><rect x="16.8" y="520.2" width="2.4" height="1.1" fill="#6a9955"/><rect x="20.0" y="520.2" width="4.8" height="1.1" fill="#6a9955"/><rect x="25.6" y="520.2" width="1.6" height="1.1" fill="#6a9955"/><rect x="28.0" y="520.2" width="4.0" height="1.1" fill="#6a9955"/><rect x="32.8" y="520.2" width="3.2" height="1.1" fill="#6a9955"/><rect x="36.8" y="520.2" width="1.6" height="1.1" fill="#6a9955"/><rect x="39.2" y="520.2" width="4.0" height="1.1" fill="#6a9955"/><rect x="6.4" y="521.8" width="1.6" height="1.1" fill="#6a9955"/><rect x="8.8" y="521.8" width="3.2" height="1.1" fill="#6a9955"/><rect x="12.8" y="521.8" width="2.4" height="1.1" fill="#6a9955"/><rect x="16.0" y="521.8" width="3.2" height="1.1" fill="#6a9955"/><rect x="20.0" y="521.8" width="4.8" height="1.1" fill="#6a9955"/><rect x="25.6" y="521.8" width="3.2" height="1.1" fill="#6a9955"/><rect x="29.6" y="521.8" width="1.6" height="1.1" fill="#6a9955"/><rect x="32.0" y="521.8" width="8.0" height="1.1" fill="#6a9955"/><rect x="6.4" y="523.4" width="9.6" height="1.1" fill="#dcdcaa"/><rect x="16.0" y="523.4" width="0.8" height="1.1" fill="#d4d4d4"/><rect x="16.8" y="523.4" width="6.4" height="1.1" fill="#d4d4d4"/><rect x="23.2" y="523.4" width="0.8" height="1.1" fill="#d4d4d4"/><rect x="24.0" y="523.4" width="10.4" height="1.1" fill="#d4d4d4"/><rect x="34.4" y="523.4" width="0.8" height="1.1" fill="#d4d4d4"/><rect x="36.0" y="523.4" width="3.2" height="1.1" fill="#d4d4d4"/><rect x="39.2" y="523.4" width="0.8" height="1.1" fill="#d4d4d4"/><rect x="40.0" y="523.4" width="0.8" height="1.1" fill="#d4d4d4"/></g></svg><div class="a" style="left:790.1px;top:23.1px;width:0.7px;height:523.7px;background:#3c3c3c"></div><div class="a" style="left:790.6px;top:457.6px;width:8.2px;height:29.2px;background:rgba(121,121,121,0.4)"></div><div class="a" style="left:790.6px;top:468.5px;width:8.2px;height:1.3px;background:#a0a0a0"></div><div class="a" style="left:796.6px;top:38.2px;width:2.2px;height:1.6px;background:#2050e0"></div><div class="a" style="left:798.8px;top:23.1px;width:1.2px;height:523.7px;background:#2a2a2a"></div><div class="a" style="left:273.5px;top:538.8px;width:440px;height:8px;background:rgba(121,121,121,0.4)"></div><div class="a" style="left:229.2px;top:23.1px;width:491px;height:2px;background:linear-gradient(#000a,#0000)"></div><div class="a" style="left:0;top:546.8px;width:800px;height:14px;background:#007acc"></div><div class="a" style="left:0;top:560.8px;width:800px;height:2.2px;background:#1b3146"></div><svg class="a" style="left:8px;top:549.40px" width="10" height="10" viewBox="0 0 10 10">
<path d="M1.8 1.2 V8.5 M1.8 7 Q1.8 4.7 4.5 4.5 Q6.9 4.3 7.5 1.8" fill="none" stroke="#fff" stroke-width="1.3"/>
<circle cx="1.8" cy="1.6" r="1.1" fill="#fff"/><circle cx="7.5" cy="1.6" r="1.1" fill="#fff"/><circle cx="1.8" cy="8.6" r="1.1" fill="#fff"/></svg><div class="a ui" style="left:17.5px;top:547.80px;height:14px;line-height:14px;font-size:8.1px;color:#ffffff;letter-spacing:-0.115px;">master*</div><svg class="a" style="left:54.5px;top:550.20px" width="9" height="9" viewBox="0 0 9 9">
<path d="M7.6 3.4 A3.3 3.3 0 0 0 1.4 3.2 M1.4 5.6 A3.3 3.3 0 0 0 7.6 5.8" fill="none" stroke="#fff" stroke-width="1.2"/>
<path d="M8.6 1.2 V4.3 H5.6Z M0.4 7.8 V4.7 H3.4Z" fill="#fff"/></svg><svg class="a" style="left:70.5px;top:550.60px" width="8" height="8" viewBox="0 0 8 8">
<circle cx="3.6" cy="3.6" r="3.4" fill="#fff"/><path d="M2.1 2.1 L5.1 5.1 M5.1 2.1 L2.1 5.1" stroke="#007acc" stroke-width="1.1"/></svg><div class="a ui" style="left:80.2px;top:547.80px;height:14px;line-height:14px;font-size:7.9px;color:#ffffff;">0</div><svg class="a" style="left:87.3px;top:550.40px" width="9" height="8" viewBox="0 0 9 8">
<path d="M4.1 0.2 L8.2 7.6 H0 Z" fill="#fff"/><path d="M4.1 2.6 V5.2 M4.1 6 V6.9" stroke="#007acc" stroke-width="1"/></svg><div class="a ui" style="left:98.0px;top:547.80px;height:14px;line-height:14px;font-size:7.9px;color:#ffffff;">0</div><svg class="a" style="left:104.8px;top:550.60px" width="8" height="8" viewBox="0 0 8 8">
<circle cx="3.6" cy="3.6" r="3.4" fill="#fff"/><path d="M3.6 3 V6" stroke="#007acc" stroke-width="1.2"/><circle cx="3.6" cy="1.8" r="0.65" fill="#007acc"/></svg><div class="a ui" style="left:114.4px;top:547.80px;height:14px;line-height:14px;font-size:7.9px;color:#ffffff;">7</div><div class="a ui" style="left:393.5px;top:547.80px;height:14px;line-height:14px;font-size:8.1px;color:#ffffff;letter-spacing:-0.210px;">BME280::readRegister(uint8_t offset)</div><div class="a ui" style="left:532.3px;top:547.80px;height:14px;line-height:14px;font-size:8.1px;color:#ffffff;letter-spacing:-0.192px;">Ln 613, Col 19</div><div class="a ui" style="left:591.8px;top:547.80px;height:14px;line-height:14px;font-size:8.1px;color:#ffffff;letter-spacing:-0.370px;">Tab Size: 4</div><div class="a ui" style="left:638.3px;top:547.80px;height:14px;line-height:14px;font-size:8.1px;color:#ffffff;letter-spacing:-0.450px;">UTF-8</div><div class="a ui" style="left:668.8px;top:547.80px;height:14px;line-height:14px;font-size:8.1px;color:#ffffff;letter-spacing:-0.913px;">CRLF</div><div class="a ui" style="left:695.7px;top:547.80px;height:14px;line-height:14px;font-size:8.1px;color:#ffffff;letter-spacing:0.030px;">C++</div><div class="a ui" style="left:722.0px;top:547.80px;height:14px;line-height:14px;font-size:8.1px;color:#ffffff;letter-spacing:-0.192px;">Win32</div><svg class="a" style="left:754.3px;top:549.60px" width="10" height="10" viewBox="0 0 10 10">
<circle cx="5" cy="5" r="4.7" fill="#fff"/><circle cx="3.4" cy="3.8" r="0.8" fill="#007acc"/><circle cx="6.6" cy="3.8" r="0.8" fill="#007acc"/>
<path d="M2.6 5.6 Q5 8.4 7.4 5.6" fill="none" stroke="#007acc" stroke-width="0.9"/></svg><svg class="a" style="left:773.6px;top:549.60px" width="10" height="10" viewBox="0 0 10 10">
<path d="M4.6 0.6 Q7.4 0.8 7.6 3.6 V6.3 L8.8 7.8 H0.4 L1.6 6.3 V3.6 Q1.8 0.8 4.6 0.6Z" fill="#fff"/><path d="M3.4 8.6 Q4.6 10 5.8 8.6Z" fill="#fff"/></svg><div class="a ui" style="left:784.4px;top:547.80px;height:14px;line-height:14px;font-size:7.9px;color:#ffffff;">1</div><div class="a" style="left:497.0px;top:486.0px;width:297.0px;height:56.40px;background:#252526;box-shadow:0 0 5px rgba(0,0,0,0.6);border:0.7px solid #1a1a1a"></div><div class="a ui" style="left:592.4px;top:494.30px;height:14px;line-height:14px;font-size:8.6px;color:#cccccc;letter-spacing:-0.192px;">vailable: Visual Studio Code 1.28.2</div><svg class="a" style="left:779.8px;top:497px" width="7" height="7" viewBox="0 0 7 7"><path d="M1 1 L6 6 M6 1 L1 6" stroke="#ffffff" stroke-width="1.4"/></svg><div class="a ui" style="left:619.3px;top:516.3px;width:61.70px;height:18.7px;line-height:20px;background:#0e639c;color:#fff;font-size:7.75px;text-align:center;-webkit-text-stroke:0.25px #fff">Install Update</div><div class="a ui" style="left:687.3px;top:516.3px;width:30.70px;height:18.7px;line-height:20px;background:#0e639c;color:#fff;font-size:7.75px;text-align:center;-webkit-text-stroke:0.25px #fff">Later</div><div class="a ui" style="left:725.0px;top:516.3px;width:62.10px;height:18.7px;line-height:20px;background:#0e639c;color:#fff;font-size:7.75px;text-align:center;-webkit-text-stroke:0.25px #fff">Release Notes</div><div class="a" style="left:366.1px;top:246.9px;width:226.10px;height:305.40px;background:#ffffff;box-shadow:1px 1px 3px rgba(0,0,0,0.55);border:0.7px solid #c8c8c8"></div><div class="a" style="left:366.80px;top:249.00px;width:223.30px;height:19.0px;background:#e8e8e8"></div><div class="a ui" style="left:387.5px;top:250.20px;height:19.0px;line-height:19.0px;font-size:9.35px;color:#1a1a1a">Go to Definition</div><div class="a ui" style="left:450px;width:122.3px;text-align:right;top:249.50px;height:19.0px;line-height:19.0px;font-size:9.5px;color:#1a1a1a">F12</div><div class="a ui" style="left:387.5px;top:269.20px;height:19.0px;line-height:19.0px;font-size:9.35px;color:#1a1a1a">Peek Definition</div><div class="a ui" style="left:450px;width:122.3px;text-align:right;top:268.50px;height:19.0px;line-height:19.0px;font-size:9.5px;color:#8a8a8a">Alt+F12</div><div class="a ui" style="left:387.5px;top:288.20px;height:19.0px;line-height:19.0px;font-size:9.35px;color:#1a1a1a">Go to Declaration</div><div class="a ui" style="left:450px;width:122.3px;text-align:right;top:287.50px;height:19.0px;line-height:19.0px;font-size:9.5px;color:#8a8a8a">Ctrl+F12</div><div class="a ui" style="left:387.5px;top:307.20px;height:19.0px;line-height:19.0px;font-size:9.35px;color:#1a1a1a">Peek Declaration</div><div class="a ui" style="left:450px;width:122.3px;text-align:right;top:306.50px;height:19.0px;line-height:19.0px;font-size:9.5px;color:#8a8a8a">Alt+Ctrl+F12</div><div class="a" style="left:368.10px;top:328.90px;width:222.10px;height:1px;background:#e0e0e0"></div><div class="a ui" style="left:387.5px;top:335.00px;height:19.0px;line-height:19.0px;font-size:9.35px;color:#1a1a1a">Change All Occurrences</div><div class="a ui" style="left:450px;width:122.3px;text-align:right;top:334.30px;height:19.0px;line-height:19.0px;font-size:9.5px;color:#8a8a8a">Ctrl+F2</div><div class="a ui" style="left:387.5px;top:354.00px;height:19.0px;line-height:19.0px;font-size:9.35px;color:#1a1a1a">Format Document</div><div class="a ui" style="left:450px;width:122.3px;text-align:right;top:353.30px;height:19.0px;line-height:19.0px;font-size:9.5px;color:#8a8a8a">Alt+Shift+F</div><div class="a" style="left:368.10px;top:375.70px;width:222.10px;height:1px;background:#e0e0e0"></div><div class="a ui" style="left:387.5px;top:381.80px;height:19.0px;line-height:19.0px;font-size:9.35px;color:#1a1a1a">Cut</div><div class="a ui" style="left:450px;width:122.3px;text-align:right;top:381.10px;height:19.0px;line-height:19.0px;font-size:9.5px;color:#8a8a8a">Ctrl+X</div><div class="a ui" style="left:387.5px;top:400.80px;height:19.0px;line-height:19.0px;font-size:9.35px;color:#1a1a1a">Copy</div><div class="a ui" style="left:450px;width:122.3px;text-align:right;top:400.10px;height:19.0px;line-height:19.0px;font-size:9.5px;color:#8a8a8a">Ctrl+C</div><div class="a ui" style="left:387.5px;top:419.80px;height:19.0px;line-height:19.0px;font-size:9.35px;color:#1a1a1a">Paste</div><div class="a ui" style="left:450px;width:122.3px;text-align:right;top:419.10px;height:19.0px;line-height:19.0px;font-size:9.5px;color:#8a8a8a">Ctrl+V</div><div class="a" style="left:368.10px;top:441.50px;width:222.10px;height:1px;background:#e0e0e0"></div><div class="a ui" style="left:387.5px;top:447.60px;height:19.0px;line-height:19.0px;font-size:9.35px;color:#1a1a1a">Switch Header/Source</div><div class="a ui" style="left:450px;width:122.3px;text-align:right;top:446.90px;height:19.0px;line-height:19.0px;font-size:9.5px;color:#8a8a8a">Alt+O</div><div class="a ui" style="left:387.5px;top:466.60px;height:19.0px;line-height:19.0px;font-size:9.35px;color:#1a1a1a">Navigate...</div><div class="a ui" style="left:450px;width:122.3px;text-align:right;top:465.90px;height:19.0px;line-height:19.0px;font-size:9.5px;color:#8a8a8a">Alt+N</div><div class="a ui" style="left:387.5px;top:485.60px;height:19.0px;line-height:19.0px;font-size:9.35px;color:#1a1a1a">Go to Symbol in File...</div><div class="a ui" style="left:450px;width:122.3px;text-align:right;top:484.90px;height:19.0px;line-height:19.0px;font-size:9.5px;color:#8a8a8a">Ctrl+Shift+O</div><div class="a ui" style="left:387.5px;top:504.60px;height:19.0px;line-height:19.0px;font-size:9.35px;color:#1a1a1a">Go to Symbol in Workspace...</div><div class="a ui" style="left:450px;width:122.3px;text-align:right;top:503.90px;height:19.0px;line-height:19.0px;font-size:9.5px;color:#8a8a8a">Ctrl+T</div><div class="a" style="left:368.10px;top:526.30px;width:222.10px;height:1px;background:#e0e0e0"></div><div class="a ui" style="left:387.5px;top:532.40px;height:19.0px;line-height:19.0px;font-size:9.35px;color:#1a1a1a">Command Palette...</div><div class="a ui" style="left:450px;width:122.3px;text-align:right;top:531.70px;height:19.0px;line-height:19.0px;font-size:9.5px;color:#8a8a8a">Ctrl+Shift+P</div><svg class="a" style="left:501.8px;top:263.5px" width="11" height="15" viewBox="0 0 11 15">
<path d="M0.6 0.6 V12.2 L3.3 9.6 L5.2 13.8 L7 13 L5.2 8.9 H9 Z" fill="#ffffff" stroke="#000000" stroke-width="0.9" stroke-linejoin="round"/></svg></body></html>
